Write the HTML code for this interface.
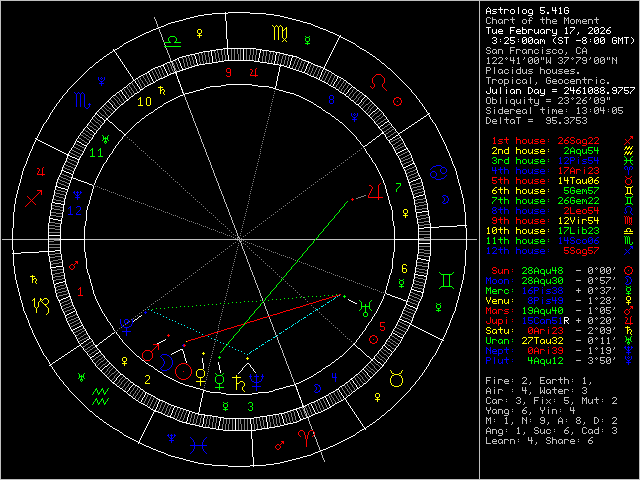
<!DOCTYPE html>
<html><head><meta charset="utf-8"><title>Astrolog 5.41G</title>
<style>
html,body{margin:0;padding:0;background:#000;overflow:hidden}
svg{display:block}
path{fill:none;stroke-width:1;shape-rendering:crispEdges}
</style></head><body>
<svg width="640" height="480" viewBox="0 0 640 480">
<rect width="640" height="480" fill="#000"/>
<path stroke="#bfbfbf" d="M0 .5m0 0h640m-640 1h1m478 0h1m159 0h1m-640 1h1m478 0h1m159 0h1m-640 1h1m478 0h1m159 0h1m-640 1h1m478 0h1m159 0h1m-640 1h1m478 0h1m159 0h1m-640 1h1m478 0h1m159 0h1m-640 1h1m478 0h1m159 0h1m-640 1h1m478 0h1m159 0h1m-640 1h1m478 0h1m159 0h1m-640 1h1m478 0h1m159 0h1m-640 1h1m478 0h1m159 0h1m-640 1h1m478 0h1m159 0h1m-640 1h1m478 0h1m159 0h1m-640 1h1m478 0h1m159 0h1m-640 1h1m478 0h1m159 0h1m-640 1h1m478 0h1m159 0h1m-640 1h1m153 0h1m324 0h1m7 0h3m2 0h1m19 0h1m17 0h2m10 0h1m3 0h1m17 0h1m3 0h1m27 0h1m42 0h1m-640 1h1m153 0h1m324 0h1m6 0h1m3 0h1m1 0h1m19 0h1m16 0h1m2 0h1m9 0h1m3 0h1m17 0h2m1 0h2m27 0h1m42 0h1m-640 1h1m154 0h1m323 0h1m6 0h1m5 0h4m3 0h3m2 0h4m2 0h5m8 0h3m3 0h1m10 0h5m1 0h4m3 0h3m8 0h1m1 0h1m1 0h1m2 0h3m2 0h2m1 0h1m3 0h3m2 0h4m2 0h5m40 0h1m-640 1h1m154 0h1m323 0h1m6 0h1m5 0h1m3 0h1m1 0h1m3 0h1m1 0h1m3 0h1m3 0h1m9 0h1m3 0h1m1 0h4m10 0h1m3 0h1m3 0h1m1 0h1m3 0h1m7 0h1m1 0h1m1 0h1m1 0h1m3 0h1m1 0h1m1 0h1m1 0h1m1 0h1m3 0h1m1 0h1m3 0h1m3 0h1m42 0h1m-640 1h1m155 0h1m322 0h1m6 0h1m5 0h1m3 0h1m1 0h1m3 0h1m1 0h1m7 0h1m9 0h1m3 0h1m2 0h1m12 0h1m3 0h1m3 0h1m1 0h5m7 0h1m3 0h1m1 0h1m3 0h1m1 0h1m1 0h1m1 0h1m1 0h5m1 0h1m3 0h1m3 0h1m42 0h1m-640 1h1m155 0h1m322 0h1m6 0h1m3 0h1m1 0h1m3 0h1m1 0h1m2 0h2m1 0h1m7 0h1m9 0h1m3 0h1m2 0h1m12 0h1m3 0h1m3 0h1m1 0h1m11 0h1m3 0h1m1 0h1m3 0h1m1 0h1m3 0h1m1 0h1m5 0h1m3 0h1m3 0h1m42 0h1m-640 1h1m155 0h1m322 0h1m7 0h3m2 0h1m3 0h1m2 0h2m1 0h1m1 0h1m8 0h1m9 0h3m3 0h1m13 0h1m2 0h1m3 0h1m2 0h4m7 0h1m3 0h1m2 0h3m2 0h1m3 0h1m2 0h4m1 0h1m3 0h1m4 0h1m41 0h1m-640 1h1m156 0h1m321 0h1m159 0h1m-640 1h1m156 0h1m321 0h1m159 0h1m-640 1h1m156 0h1m321 0h1m159 0h1m-640 1h1m478 0h1m159 0h1m-640 1h1m157 0h1m320 0h1m159 0h1m-640 1h1m158 0h1m319 0h1m159 0h1m-640 1h1m158 0h1m319 0h1m159 0h1m-640 1h1m158 0h1m319 0h1m159 0h1m-640 1h1m159 0h1m318 0h1m159 0h1m-640 1h1m159 0h1m318 0h1m159 0h1m-640 1h1m160 0h1m317 0h1m159 0h1m-640 1h1m160 0h1m317 0h1m159 0h1m-640 1h1m160 0h1m317 0h1m159 0h1m-640 1h1m161 0h1m316 0h1m159 0h1m-640 1h1m161 0h1m316 0h1m159 0h1m-640 1h1m161 0h1m316 0h1m159 0h1m-640 1h1m162 0h1m315 0h1m159 0h1m-640 1h1m162 0h1m315 0h1m159 0h1m-640 1h1m478 0h1m159 0h1m-640 1h1m163 0h1m314 0h1m159 0h1m-640 1h1m163 0h1m314 0h1m159 0h1m-640 1h1m164 0h1m313 0h1m159 0h1m-640 1h1m478 0h1m159 0h1m-640 1h1m164 0h1m313 0h1m7 0h3m20 0h5m27 0h1m34 0h3m4 0h1m54 0h1m-640 1h1m165 0h1m312 0h1m6 0h1m3 0h1m19 0h1m65 0h1m3 0h1m2 0h1m1 0h1m53 0h1m-640 1h1m165 0h1m312 0h1m6 0h1m6 0h3m2 0h4m8 0h1m5 0h4m3 0h3m2 0h4m3 0h3m4 0h1m4 0h4m2 0h3m3 0h3m14 0h1m5 0h1m3 0h1m52 0h1m-640 1h1m166 0h1m311 0h1m7 0h3m2 0h1m3 0h1m1 0h1m3 0h1m7 0h4m2 0h1m3 0h1m1 0h1m3 0h1m1 0h1m3 0h1m1 0h1m3 0h1m3 0h1m3 0h1m5 0h1m3 0h1m1 0h1m3 0h1m13 0h1m5 0h1m3 0h1m52 0h1m-640 1h1m166 0h1m311 0h1m10 0h1m1 0h1m3 0h1m1 0h1m3 0h1m7 0h1m5 0h1m5 0h1m3 0h1m1 0h1m3 0h1m1 0h1m7 0h1m4 0h3m2 0h1m5 0h1m3 0h1m13 0h1m5 0h5m52 0h1m-640 1h1m166 0h1m311 0h1m6 0h1m3 0h1m1 0h1m2 0h2m1 0h1m3 0h1m7 0h1m5 0h1m5 0h1m2 0h2m1 0h1m3 0h1m1 0h1m3 0h1m3 0h1m7 0h1m1 0h1m3 0h1m1 0h1m3 0h1m3 0h1m9 0h1m3 0h1m1 0h1m3 0h1m52 0h1m-640 1h1m167 0h1m310 0h1m7 0h3m3 0h2m1 0h1m1 0h1m3 0h1m7 0h1m5 0h1m6 0h2m1 0h1m1 0h1m3 0h1m2 0h3m4 0h1m3 0h4m3 0h3m3 0h3m4 0h1m10 0h3m2 0h1m3 0h1m52 0h1m-640 1h1m167 0h1m310 0h1m85 0h1m73 0h1m-640 1h1m168 0h1m309 0h1m159 0h1m-640 1h1m168 0h1m309 0h1m159 0h1m-640 1h1m168 0h1m309 0h1m8 0h1m4 0h3m3 0h3m4 0h1m3 0h1m2 0h1m4 0h1m5 0h1m4 0h3m3 0h3m3 0h1m1 0h1m2 0h1m3 0h1m8 0h3m2 0h5m3 0h1m3 0h5m2 0h3m4 0h1m4 0h3m3 0h3m3 0h1m1 0h1m2 0h1m3 0h1m22 0h1m-640 1h1m169 0h1m308 0h1m7 0h2m3 0h1m3 0h1m1 0h1m3 0h1m2 0h1m1 0h1m2 0h1m2 0h1m3 0h2m5 0h1m3 0h1m3 0h1m1 0h1m3 0h1m2 0h1m1 0h1m2 0h1m3 0h1m7 0h1m3 0h1m5 0h1m2 0h1m1 0h1m6 0h1m1 0h1m3 0h1m3 0h1m3 0h1m3 0h1m1 0h1m3 0h1m2 0h1m1 0h1m2 0h2m2 0h1m22 0h1m-640 1h1m169 0h1m308 0h1m8 0h1m7 0h1m5 0h1m3 0h1m3 0h1m2 0h1m4 0h1m4 0h1m4 0h1m2 0h2m1 0h1m2 0h2m2 0h1m1 0h1m2 0h1m3 0h1m11 0h1m4 0h1m4 0h1m6 0h1m2 0h1m3 0h1m2 0h1m4 0h1m2 0h2m1 0h1m2 0h2m2 0h1m1 0h1m2 0h1m1 0h1m1 0h1m22 0h1m-640 1h1m169 0h1m308 0h1m8 0h1m6 0h1m5 0h1m8 0h5m3 0h1m9 0h1m1 0h1m1 0h1m1 0h1m1 0h1m1 0h1m7 0h1m1 0h1m1 0h1m9 0h2m4 0h1m11 0h1m4 0h4m7 0h1m1 0h1m1 0h1m1 0h1m1 0h1m1 0h1m7 0h1m2 0h2m22 0h1m-640 1h1m478 0h1m8 0h1m5 0h1m5 0h1m12 0h1m4 0h1m9 0h2m2 0h1m1 0h2m2 0h1m7 0h1m1 0h1m1 0h1m11 0h1m2 0h1m11 0h1m8 0h1m7 0h2m2 0h1m1 0h2m2 0h1m7 0h1m3 0h1m22 0h1m-640 1h1m170 0h1m307 0h1m8 0h1m4 0h1m5 0h1m13 0h1m4 0h1m9 0h1m3 0h1m1 0h1m3 0h1m7 0h2m1 0h2m7 0h1m3 0h1m1 0h1m11 0h1m5 0h1m3 0h1m7 0h1m3 0h1m1 0h1m3 0h1m7 0h1m3 0h1m22 0h1m-640 1h1m171 0h1m306 0h1m7 0h3m2 0h5m1 0h5m10 0h1m3 0h3m9 0h3m3 0h3m8 0h1m3 0h1m8 0h3m2 0h1m11 0h1m6 0h3m9 0h3m3 0h3m8 0h1m3 0h1m22 0h1m-640 1h1m171 0h1m306 0h1m159 0h1m-640 1h1m171 0h1m306 0h1m159 0h1m-640 1h1m172 0h1m305 0h1m159 0h1m-640 1h1m172 0h1m305 0h1m6 0h4m4 0h1m17 0h1m7 0h1m19 0h1m98 0h1m-640 1h1m173 0h1m304 0h1m6 0h1m3 0h1m3 0h1m25 0h1m19 0h1m98 0h1m-640 1h1m173 0h1m304 0h1m6 0h1m3 0h1m3 0h1m4 0h3m3 0h3m4 0h1m4 0h4m1 0h1m3 0h1m2 0h4m7 0h4m3 0h3m2 0h1m3 0h1m2 0h4m2 0h3m3 0h4m64 0h1m-640 1h1m173 0h1m304 0h1m6 0h4m4 0h1m3 0h1m3 0h1m1 0h1m3 0h1m3 0h1m3 0h1m3 0h1m1 0h1m3 0h1m1 0h1m11 0h1m3 0h1m1 0h1m3 0h1m1 0h1m3 0h1m1 0h1m5 0h1m3 0h1m1 0h1m68 0h1m-640 1h1m478 0h1m6 0h1m7 0h1m3 0h1m3 0h1m1 0h1m7 0h1m3 0h1m3 0h1m1 0h1m3 0h1m2 0h3m8 0h1m3 0h1m1 0h1m3 0h1m1 0h1m3 0h1m2 0h3m2 0h5m2 0h3m65 0h1m-640 1h1m478 0h1m6 0h1m7 0h1m3 0h1m2 0h2m1 0h1m3 0h1m3 0h1m3 0h1m3 0h1m1 0h1m2 0h2m5 0h1m7 0h1m3 0h1m1 0h1m3 0h1m1 0h1m2 0h2m5 0h1m1 0h1m9 0h1m2 0h2m60 0h1m-640 1h1m174 0h1m303 0h1m6 0h1m7 0h1m4 0h2m1 0h1m2 0h3m4 0h1m4 0h4m2 0h2m1 0h1m1 0h4m8 0h1m3 0h1m2 0h3m3 0h2m1 0h1m1 0h4m3 0h4m1 0h4m3 0h2m60 0h1m-640 1h1m478 0h1m159 0h1m-640 1h1m478 0h1m159 0h1m-640 1h1m478 0h1m159 0h1m-640 1h1m478 0h1m6 0h5m21 0h1m17 0h1m16 0h3m34 0h1m11 0h1m42 0h1m-640 1h1m478 0h1m8 0h1m41 0h1m15 0h1m3 0h1m33 0h1m54 0h1m-640 1h1m478 0h1m8 0h1m3 0h4m3 0h3m2 0h4m4 0h1m4 0h3m3 0h3m4 0h1m15 0h1m6 0h3m3 0h3m3 0h3m3 0h3m2 0h4m2 0h5m1 0h4m4 0h1m4 0h3m35 0h1m-640 1h1m478 0h1m8 0h1m3 0h1m3 0h1m1 0h1m3 0h1m1 0h1m3 0h1m3 0h1m3 0h1m3 0h1m1 0h1m3 0h1m3 0h1m15 0h1m1 0h3m1 0h1m3 0h1m1 0h1m3 0h1m1 0h1m3 0h1m1 0h1m3 0h1m1 0h1m3 0h1m3 0h1m3 0h1m3 0h1m3 0h1m3 0h1m3 0h1m34 0h1m-640 1h1m178 0h1m299 0h1m8 0h1m3 0h1m5 0h1m3 0h1m1 0h1m3 0h1m3 0h1m3 0h1m5 0h1m3 0h1m3 0h1m15 0h1m3 0h1m1 0h5m1 0h1m3 0h1m1 0h1m5 0h5m1 0h1m3 0h1m3 0h1m3 0h1m7 0h1m3 0h1m38 0h1m-640 1h1m478 0h1m8 0h1m3 0h1m5 0h1m3 0h1m1 0h1m3 0h1m3 0h1m3 0h1m3 0h1m1 0h1m2 0h2m3 0h1m5 0h1m9 0h1m3 0h1m1 0h1m5 0h1m3 0h1m1 0h1m3 0h1m1 0h1m5 0h1m3 0h1m3 0h1m3 0h1m7 0h1m3 0h1m3 0h1m2 0h2m30 0h1m-640 1h1m478 0h1m8 0h1m3 0h1m6 0h3m2 0h4m4 0h1m4 0h3m3 0h2m1 0h1m3 0h1m5 0h1m10 0h3m3 0h4m2 0h3m3 0h3m3 0h4m1 0h1m3 0h1m4 0h1m2 0h1m7 0h1m4 0h3m3 0h2m30 0h1m-640 1h1m478 0h1m24 0h1m30 0h1m103 0h1m-640 1h1m478 0h1m24 0h1m134 0h1m-640 1h1m478 0h1m159 0h1m-640 1h1m478 0h1m159 0h1m-640 1h1m478 0h1m159 0h1m-640 1h1m181 0h1m296 0h1m159 0h1m-640 1h1m478 0h1m159 0h1m-640 1h1m478 0h1m159 0h1m-640 1h1m182 0h1m295 0h1m159 0h1m-640 1h1m478 0h1m159 0h1m-640 1h1m478 0h1m159 0h1m-640 1h1m183 0h1m294 0h1m159 0h1m-640 1h1m183 0h1m294 0h1m159 0h1m-640 1h1m184 0h1m293 0h1m7 0h3m2 0h1m7 0h1m5 0h1m17 0h1m5 0h1m28 0h3m3 0h3m4 0h1m4 0h3m5 0h2m3 0h1m4 0h3m3 0h3m3 0h1m1 0h1m29 0h1m-640 1h1m184 0h1m293 0h1m6 0h1m3 0h1m1 0h1m7 0h1m29 0h1m27 0h1m3 0h1m1 0h1m3 0h1m2 0h1m1 0h1m2 0h1m3 0h1m3 0h1m5 0h1m3 0h1m3 0h1m1 0h1m3 0h1m2 0h1m1 0h1m29 0h1m-640 1h1m184 0h1m293 0h1m6 0h1m3 0h1m1 0h4m4 0h1m5 0h1m4 0h3m2 0h1m3 0h1m3 0h1m3 0h5m1 0h1m3 0h1m7 0h5m11 0h1m5 0h1m3 0h1m7 0h1m2 0h1m5 0h1m4 0h1m2 0h2m1 0h1m3 0h1m2 0h1m1 0h1m29 0h1m-640 1h1m185 0h1m292 0h1m6 0h1m3 0h1m1 0h1m3 0h1m3 0h1m5 0h1m3 0h1m3 0h1m1 0h1m3 0h1m3 0h1m5 0h1m3 0h1m3 0h1m22 0h1m4 0h2m11 0h1m2 0h4m8 0h1m1 0h1m1 0h1m2 0h4m34 0h1m-640 1h1m185 0h1m292 0h1m6 0h1m3 0h1m1 0h1m3 0h1m3 0h1m5 0h1m3 0h1m3 0h1m1 0h1m3 0h1m3 0h1m5 0h1m3 0h1m3 0h1m7 0h5m9 0h1m7 0h1m9 0h1m3 0h1m3 0h1m7 0h2m2 0h1m5 0h1m34 0h1m-640 1h1m186 0h1m291 0h1m6 0h1m3 0h1m1 0h1m3 0h1m3 0h1m5 0h1m3 0h1m3 0h1m1 0h1m2 0h2m3 0h1m5 0h1m3 0h1m3 0h1m20 0h1m4 0h1m3 0h1m8 0h1m4 0h1m3 0h1m7 0h1m3 0h1m1 0h1m3 0h1m34 0h1m-640 1h1m186 0h1m291 0h1m7 0h3m2 0h4m4 0h1m5 0h1m4 0h4m2 0h2m1 0h1m3 0h1m6 0h1m3 0h4m19 0h5m2 0h3m8 0h5m2 0h3m9 0h3m3 0h3m35 0h1m-640 1h1m186 0h1m291 0h1m34 0h1m23 0h1m100 0h1m-640 1h1m187 0h1m290 0h1m34 0h1m19 0h4m101 0h1m-640 1h1m187 0h1m290 0h1m159 0h1m-640 1h1m187 0h1m290 0h1m7 0h3m4 0h1m7 0h1m27 0h1m11 0h1m5 0h1m29 0h1m4 0h3m9 0h3m2 0h1m2 0h1m9 0h3m2 0h5m16 0h1m-640 1h1m188 0h1m289 0h1m6 0h1m3 0h1m11 0h1m27 0h1m11 0h1m34 0h2m3 0h1m3 0h1m7 0h1m3 0h1m1 0h1m2 0h1m8 0h1m3 0h1m1 0h1m20 0h1m-640 1h1m188 0h1m289 0h1m6 0h1m7 0h1m4 0h4m2 0h3m2 0h4m3 0h3m3 0h3m4 0h1m9 0h5m3 0h1m3 0h2m1 0h1m3 0h3m4 0h1m11 0h1m7 0h1m3 0h1m3 0h1m2 0h2m1 0h1m2 0h1m4 0h1m3 0h1m2 0h2m1 0h1m20 0h1m-640 1h1m189 0h1m288 0h1m7 0h3m4 0h1m3 0h1m3 0h1m1 0h1m3 0h1m1 0h1m3 0h1m1 0h1m3 0h1m1 0h1m3 0h1m3 0h1m11 0h1m5 0h1m3 0h1m1 0h1m1 0h1m1 0h1m3 0h1m15 0h1m5 0h2m8 0h1m1 0h1m1 0h1m1 0h5m7 0h1m1 0h1m1 0h1m1 0h4m17 0h1m-640 1h1m189 0h1m288 0h1m10 0h1m3 0h1m3 0h1m3 0h1m1 0h5m1 0h1m5 0h5m1 0h1m3 0h1m3 0h1m11 0h1m5 0h1m3 0h1m1 0h1m1 0h1m1 0h5m3 0h1m11 0h1m7 0h1m3 0h1m3 0h2m2 0h1m4 0h1m4 0h1m3 0h2m2 0h1m5 0h1m16 0h1m-640 1h1m189 0h1m288 0h1m6 0h1m3 0h1m3 0h1m3 0h1m3 0h1m1 0h1m5 0h1m5 0h1m5 0h1m2 0h2m3 0h1m11 0h1m5 0h1m3 0h1m3 0h1m1 0h1m19 0h1m3 0h1m3 0h1m7 0h1m3 0h1m4 0h1m8 0h1m3 0h1m1 0h1m3 0h1m16 0h1m-640 1h1m190 0h1m287 0h1m7 0h3m4 0h1m4 0h4m2 0h4m1 0h1m6 0h4m2 0h2m1 0h1m3 0h1m12 0h1m4 0h1m3 0h1m3 0h1m2 0h4m14 0h3m3 0h3m9 0h3m5 0h1m9 0h3m3 0h3m17 0h1m-640 1h1m190 0h1m287 0h1m159 0h1m-640 1h1m191 0h1m286 0h1m159 0h1m-640 1h1m191 0h1m286 0h1m159 0h1m-640 1h1m191 0h1m286 0h1m6 0h3m11 0h1m5 0h1m9 0h5m26 0h3m2 0h5m8 0h3m2 0h5m1 0h5m2 0h3m53 0h1m-640 1h1m192 0h1m285 0h1m6 0h1m2 0h1m10 0h1m5 0h1m11 0h1m27 0h1m3 0h1m1 0h1m11 0h1m3 0h1m5 0h1m1 0h1m5 0h1m3 0h1m52 0h1m-640 1h1m192 0h1m285 0h1m6 0h1m3 0h1m2 0h3m4 0h1m3 0h5m2 0h3m4 0h1m9 0h5m13 0h1m3 0h1m1 0h1m15 0h1m4 0h1m2 0h1m9 0h1m52 0h1m-640 1h1m192 0h1m285 0h1m6 0h1m3 0h1m1 0h1m3 0h1m3 0h1m5 0h1m3 0h1m3 0h1m3 0h1m28 0h4m1 0h4m10 0h2m4 0h1m3 0h4m4 0h2m53 0h1m-640 1h1m193 0h1m284 0h1m6 0h1m3 0h1m1 0h5m3 0h1m5 0h1m3 0h1m3 0h1m3 0h1m9 0h5m17 0h1m5 0h1m11 0h1m2 0h1m8 0h1m5 0h1m52 0h1m-640 1h1m193 0h1m284 0h1m6 0h1m2 0h1m2 0h1m7 0h1m5 0h1m3 0h1m2 0h2m3 0h1m27 0h1m3 0h1m1 0h1m3 0h1m2 0h2m3 0h1m3 0h1m1 0h1m5 0h1m3 0h1m1 0h1m3 0h1m52 0h1m-640 1h1m194 0h1m283 0h1m6 0h3m4 0h4m3 0h1m6 0h1m3 0h2m1 0h1m3 0h1m28 0h3m3 0h3m3 0h2m4 0h3m2 0h1m6 0h3m3 0h3m53 0h1m-640 1h1m194 0h1m283 0h1m159 0h1m-640 1h1m194 0h1m283 0h1m159 0h1m-640 1h1m195 0h1m282 0h1m159 0h1m-640 1h1m195 0h1m282 0h1m159 0h1m-640 1h1m196 0h1m281 0h1m159 0h1m-640 1h1m196 0h1m281 0h1m159 0h1m-640 1h1m196 0h1m281 0h1m159 0h1m-640 1h1m197 0h1m280 0h1m159 0h1m-640 1h1m197 0h1m280 0h1m159 0h1m-640 1h1m197 0h1m280 0h1m159 0h1m-640 1h1m198 0h1m279 0h1m159 0h1m-640 1h1m198 0h1m279 0h1m159 0h1m-640 1h1m199 0h1m278 0h1m159 0h1m-640 1h1m199 0h1m278 0h1m159 0h1m-640 1h1m199 0h1m278 0h1m159 0h1m-640 1h1m200 0h1m277 0h1m159 0h1m-640 1h1m200 0h1m277 0h1m159 0h1m-640 1h1m200 0h1m277 0h1m159 0h1m-640 1h1m201 0h1m276 0h1m159 0h1m-640 1h1m201 0h1m276 0h1m159 0h1m-640 1h1m202 0h1m275 0h1m159 0h1m-640 1h1m202 0h1m275 0h1m159 0h1m-640 1h1m202 0h1m275 0h1m159 0h1m-640 1h1m203 0h1m274 0h1m159 0h1m-640 1h1m203 0h1m274 0h1m159 0h1m-640 1h1m204 0h1m273 0h1m159 0h1m-640 1h1m204 0h1m273 0h1m159 0h1m-640 1h1m204 0h1m273 0h1m159 0h1m-640 1h1m205 0h1m272 0h1m159 0h1m-640 1h1m205 0h1m272 0h1m159 0h1m-640 1h1m205 0h1m272 0h1m159 0h1m-640 1h1m206 0h1m271 0h1m159 0h1m-640 1h1m206 0h1m271 0h1m159 0h1m-640 1h1m207 0h1m270 0h1m159 0h1m-640 1h1m207 0h1m270 0h1m159 0h1m-640 1h1m207 0h1m270 0h1m159 0h1m-640 1h1m208 0h1m269 0h1m159 0h1m-640 1h1m208 0h1m269 0h1m159 0h1m-640 1h1m209 0h1m268 0h1m159 0h1m-640 1h1m209 0h1m268 0h1m159 0h1m-640 1h1m209 0h1m268 0h1m159 0h1m-640 1h1m210 0h1m267 0h1m159 0h1m-640 1h1m210 0h1m267 0h1m159 0h1m-640 1h1m210 0h1m267 0h1m159 0h1m-640 1h1m211 0h1m266 0h1m159 0h1m-640 1h1m211 0h1m266 0h1m159 0h1m-640 1h1m212 0h1m265 0h1m159 0h1m-640 1h1m212 0h1m265 0h1m159 0h1m-640 1h1m212 0h1m265 0h1m159 0h1m-640 1h1m213 0h1m264 0h1m159 0h1m-640 1h1m213 0h1m264 0h1m159 0h1m-640 1h1m213 0h1m264 0h1m159 0h1m-640 1h1m214 0h1m263 0h1m159 0h1m-640 1h1m214 0h1m263 0h1m159 0h1m-640 1h1m215 0h1m262 0h1m159 0h1m-640 1h1m215 0h1m262 0h1m159 0h1m-640 1h1m215 0h1m262 0h1m159 0h1m-640 1h1m216 0h1m261 0h1m159 0h1m-640 1h1m216 0h1m261 0h1m159 0h1m-640 1h1m217 0h1m260 0h1m159 0h1m-640 1h1m217 0h1m260 0h1m159 0h1m-640 1h1m217 0h1m260 0h1m159 0h1m-640 1h1m218 0h1m259 0h1m159 0h1m-640 1h1m218 0h1m259 0h1m159 0h1m-640 1h1m218 0h1m259 0h1m159 0h1m-640 1h1m219 0h1m258 0h1m159 0h1m-640 1h1m219 0h1m258 0h1m159 0h1m-640 1h1m220 0h1m257 0h1m159 0h1m-640 1h1m220 0h1m257 0h1m159 0h1m-640 1h1m220 0h1m257 0h1m159 0h1m-640 1h1m221 0h1m256 0h1m159 0h1m-640 1h1m221 0h1m256 0h1m159 0h1m-640 1h1m222 0h1m255 0h1m159 0h1m-640 1h1m222 0h1m255 0h1m159 0h1m-640 1h1m222 0h1m255 0h1m159 0h1m-640 1h1m223 0h1m254 0h1m159 0h1m-640 1h1m223 0h1m254 0h1m159 0h1m-640 1h1m223 0h1m254 0h1m159 0h1m-640 1h1m224 0h1m253 0h1m159 0h1m-640 1h1m224 0h1m253 0h1m159 0h1m-640 1h1m225 0h1m252 0h1m159 0h1m-640 1h1m225 0h1m252 0h1m159 0h1m-640 1h1m225 0h1m252 0h1m159 0h1m-640 1h1m226 0h1m251 0h1m159 0h1m-640 1h1m226 0h1m251 0h1m159 0h1m-640 1h1m227 0h1m250 0h1m159 0h1m-640 1h1m227 0h1m250 0h1m159 0h1m-640 1h1m227 0h1m250 0h1m159 0h1m-640 1h1m228 0h1m249 0h1m159 0h1m-640 1h1m228 0h1m249 0h1m159 0h1m-640 1h1m228 0h1m249 0h1m159 0h1m-640 1h1m229 0h1m248 0h1m159 0h1m-640 1h1m229 0h1m248 0h1m159 0h1m-640 1h1m230 0h1m247 0h1m159 0h1m-640 1h1m230 0h1m247 0h1m159 0h1m-640 1h1m230 0h1m247 0h1m159 0h1m-640 1h1m231 0h1m246 0h1m159 0h1m-640 1h1m231 0h1m246 0h1m159 0h1m-640 1h1m231 0h1m246 0h1m159 0h1m-640 1h1m232 0h1m245 0h1m159 0h1m-640 1h1m232 0h1m245 0h1m159 0h1m-640 1h1m233 0h1m244 0h1m159 0h1m-640 1h1m233 0h1m244 0h1m159 0h1m-640 1h1m233 0h1m244 0h1m159 0h1m-640 1h1m234 0h1m243 0h1m159 0h1m-640 1h1m234 0h1m243 0h1m159 0h1m-640 1h1m235 0h1m242 0h1m159 0h1m-640 1h1m235 0h1m242 0h1m159 0h1m-640 1h1m235 0h1m242 0h1m159 0h1m-640 1h1m236 0h1m241 0h1m159 0h1m-640 1h1m236 0h1m241 0h1m159 0h1m-640 1h1m236 0h1m241 0h1m159 0h1m-640 1h1m237 0h1m240 0h1m159 0h1m-640 1h1m237 0h1m240 0h1m159 0h1m-640 1h1m238 0h1m239 0h1m159 0h1m-640 1h1m1 0h10m1 0h35m1 0h10m26 0h154m1 0h75m1 0h78m26 0h10m1 0h35m1 0h10m2 0h1m159 0h1m-640 1h1m238 0h1m239 0h1m159 0h1m-640 1h1m239 0h1m238 0h1m159 0h1m-640 1h1m239 0h1m238 0h1m159 0h1m-640 1h1m240 0h1m237 0h1m159 0h1m-640 1h1m240 0h1m237 0h1m159 0h1m-640 1h1m240 0h1m237 0h1m159 0h1m-640 1h1m241 0h1m236 0h1m159 0h1m-640 1h1m241 0h1m236 0h1m159 0h1m-640 1h1m241 0h1m236 0h1m159 0h1m-640 1h1m242 0h1m235 0h1m159 0h1m-640 1h1m242 0h1m235 0h1m159 0h1m-640 1h1m243 0h1m234 0h1m159 0h1m-640 1h1m243 0h1m234 0h1m159 0h1m-640 1h1m243 0h1m234 0h1m159 0h1m-640 1h1m244 0h1m233 0h1m159 0h1m-640 1h1m244 0h1m233 0h1m159 0h1m-640 1h1m245 0h1m232 0h1m159 0h1m-640 1h1m245 0h1m232 0h1m159 0h1m-640 1h1m245 0h1m232 0h1m159 0h1m-640 1h1m246 0h1m231 0h1m159 0h1m-640 1h1m246 0h1m231 0h1m159 0h1m-640 1h1m246 0h1m231 0h1m159 0h1m-640 1h1m247 0h1m230 0h1m159 0h1m-640 1h1m247 0h1m230 0h1m159 0h1m-640 1h1m248 0h1m229 0h1m159 0h1m-640 1h1m248 0h1m229 0h1m159 0h1m-640 1h1m248 0h1m229 0h1m159 0h1m-640 1h1m249 0h1m228 0h1m109 0h3m4 0h1m4 0h3m3 0h3m4 0h1m24 0h1m-640 1h1m249 0h1m228 0h1m108 0h1m3 0h1m2 0h1m1 0h1m2 0h1m3 0h1m1 0h1m3 0h1m3 0h1m24 0h1m-640 1h1m249 0h1m228 0h1m108 0h1m2 0h2m3 0h1m3 0h1m2 0h2m1 0h1m2 0h2m2 0h1m25 0h1m-640 1h1m250 0h1m227 0h1m96 0h5m7 0h1m1 0h1m1 0h1m7 0h1m1 0h1m1 0h1m1 0h1m1 0h1m1 0h1m28 0h1m-640 1h1m250 0h1m227 0h1m108 0h2m2 0h1m7 0h2m2 0h1m1 0h2m2 0h1m28 0h1m-640 1h1m251 0h1m226 0h1m108 0h1m3 0h1m7 0h1m3 0h1m1 0h1m3 0h1m28 0h1m-640 1h1m251 0h1m226 0h1m109 0h3m9 0h3m3 0h3m29 0h1m-640 1h1m251 0h1m226 0h1m159 0h1m-640 1h1m252 0h1m225 0h1m159 0h1m-640 1h1m252 0h1m225 0h1m159 0h1m-640 1h1m253 0h1m224 0h1m109 0h3m4 0h1m3 0h5m1 0h5m3 0h1m24 0h1m-640 1h1m253 0h1m224 0h1m108 0h1m3 0h1m2 0h1m1 0h1m2 0h1m9 0h1m3 0h1m24 0h1m-640 1h1m253 0h1m224 0h1m108 0h1m2 0h2m3 0h1m3 0h1m8 0h1m3 0h1m25 0h1m-640 1h1m254 0h1m223 0h1m96 0h5m7 0h1m1 0h1m1 0h1m7 0h4m4 0h1m30 0h1m-640 1h1m254 0h1m223 0h1m108 0h2m2 0h1m11 0h1m2 0h1m31 0h1m-640 1h1m254 0h1m223 0h1m108 0h1m3 0h1m7 0h1m3 0h1m1 0h1m32 0h1m-640 1h1m255 0h1m222 0h1m109 0h3m9 0h3m2 0h1m32 0h1m-640 1h1m255 0h1m222 0h1m159 0h1m-640 1h1m256 0h1m221 0h1m159 0h1m-640 1h1m256 0h1m221 0h1m159 0h1m-640 1h1m256 0h1m221 0h1m109 0h3m4 0h1m4 0h3m2 0h5m3 0h1m24 0h1m-640 1h1m257 0h1m220 0h1m98 0h1m9 0h1m3 0h1m2 0h1m1 0h1m2 0h1m3 0h1m5 0h1m3 0h1m24 0h1m-640 1h1m257 0h1m220 0h1m98 0h1m9 0h1m2 0h2m3 0h1m7 0h1m4 0h1m3 0h1m25 0h1m-640 1h1m258 0h1m219 0h1m96 0h5m7 0h1m1 0h1m1 0h1m9 0h2m4 0h1m30 0h1m-640 1h1m258 0h1m219 0h1m98 0h1m9 0h2m2 0h1m11 0h1m2 0h1m31 0h1m-640 1h1m258 0h1m219 0h1m98 0h1m9 0h1m3 0h1m7 0h1m3 0h1m1 0h1m32 0h1m-640 1h1m259 0h1m218 0h1m109 0h3m9 0h3m2 0h1m32 0h1m-640 1h1m259 0h1m218 0h1m159 0h1m-640 1h1m259 0h1m218 0h1m159 0h1m-640 1h1m260 0h1m217 0h1m159 0h1m-640 1h1m260 0h1m217 0h1m110 0h1m5 0h1m4 0h3m3 0h3m4 0h1m24 0h1m-640 1h1m261 0h1m216 0h1m109 0h2m4 0h1m1 0h1m2 0h1m3 0h1m1 0h1m3 0h1m3 0h1m24 0h1m-640 1h1m261 0h1m216 0h1m110 0h1m5 0h1m7 0h1m1 0h1m2 0h1m3 0h1m25 0h1m-640 1h1m261 0h1m216 0h1m96 0h5m9 0h1m12 0h1m3 0h3m29 0h1m-640 1h1m478 0h1m110 0h1m11 0h1m3 0h1m3 0h1m28 0h1m-640 1h1m262 0h1m215 0h1m110 0h1m10 0h1m4 0h1m3 0h1m28 0h1m-640 1h1m263 0h1m214 0h1m109 0h3m8 0h5m2 0h3m29 0h1m-640 1h1m263 0h1m214 0h1m159 0h1m-640 1h1m263 0h1m214 0h1m159 0h1m-640 1h1m264 0h1m213 0h1m159 0h1m-640 1h1m264 0h1m213 0h1m110 0h1m5 0h1m4 0h3m2 0h5m3 0h1m24 0h1m-640 1h1m264 0h1m213 0h1m109 0h2m4 0h1m1 0h1m2 0h1m3 0h1m1 0h1m7 0h1m24 0h1m-640 1h1m265 0h1m212 0h1m110 0h1m5 0h1m3 0h1m2 0h2m1 0h1m6 0h1m25 0h1m-640 1h1m265 0h1m212 0h1m96 0h5m9 0h1m9 0h1m1 0h1m1 0h1m1 0h4m29 0h1m-640 1h1m266 0h1m211 0h1m110 0h1m9 0h2m2 0h1m5 0h1m28 0h1m-640 1h1m266 0h1m211 0h1m110 0h1m9 0h1m3 0h1m1 0h1m3 0h1m28 0h1m-640 1h1m266 0h1m211 0h1m109 0h3m9 0h3m3 0h3m29 0h1m-640 1h1m267 0h1m210 0h1m159 0h1m-640 1h1m267 0h1m210 0h1m159 0h1m-640 1h1m478 0h1m159 0h1m-640 1h1m268 0h1m209 0h1m109 0h3m4 0h1m4 0h3m3 0h3m4 0h1m24 0h1m-640 1h1m268 0h1m209 0h1m98 0h1m9 0h1m3 0h1m2 0h1m1 0h1m2 0h1m3 0h1m1 0h1m3 0h1m3 0h1m24 0h1m-640 1h1m269 0h1m208 0h1m98 0h1m9 0h1m2 0h2m3 0h1m7 0h1m1 0h1m2 0h2m2 0h1m25 0h1m-640 1h1m269 0h1m208 0h1m96 0h5m7 0h1m1 0h1m1 0h1m10 0h1m2 0h1m1 0h1m1 0h1m28 0h1m-640 1h1m269 0h1m208 0h1m98 0h1m9 0h2m2 0h1m9 0h1m3 0h2m2 0h1m28 0h1m-640 1h1m270 0h1m207 0h1m98 0h1m9 0h1m3 0h1m8 0h1m4 0h1m3 0h1m28 0h1m-640 1h1m270 0h1m207 0h1m109 0h3m8 0h5m2 0h3m29 0h1m-640 1h1m271 0h1m206 0h1m159 0h1m-640 1h1m271 0h1m206 0h1m159 0h1m-640 1h1m271 0h1m206 0h1m159 0h1m-640 1h1m272 0h1m205 0h1m109 0h3m4 0h1m4 0h3m3 0h3m4 0h1m24 0h1m-640 1h1m272 0h1m205 0h1m108 0h1m3 0h1m2 0h1m1 0h1m2 0h1m3 0h1m1 0h1m3 0h1m3 0h1m24 0h1m-640 1h1m272 0h1m205 0h1m112 0h1m3 0h1m3 0h1m2 0h2m1 0h1m3 0h1m2 0h1m25 0h1m-640 1h1m273 0h1m204 0h1m96 0h5m10 0h1m8 0h1m1 0h1m1 0h1m2 0h4m28 0h1m-640 1h1m273 0h1m204 0h1m110 0h1m9 0h2m2 0h1m5 0h1m28 0h1m-640 1h1m274 0h1m203 0h1m109 0h1m10 0h1m3 0h1m1 0h1m3 0h1m28 0h1m-640 1h1m274 0h1m203 0h1m108 0h5m8 0h3m3 0h3m29 0h1m-640 1h1m274 0h1m203 0h1m159 0h1m-640 1h1m275 0h1m202 0h1m159 0h1m-640 1h1m275 0h1m202 0h1m159 0h1m-640 1h1m276 0h1m201 0h1m109 0h3m4 0h1m5 0h1m5 0h1m5 0h1m24 0h1m-640 1h1m276 0h1m201 0h1m108 0h1m3 0h1m2 0h1m1 0h1m3 0h2m4 0h2m5 0h1m24 0h1m-640 1h1m276 0h1m201 0h1m108 0h1m2 0h2m3 0h1m5 0h1m5 0h1m4 0h1m25 0h1m-640 1h1m277 0h1m200 0h1m96 0h5m7 0h1m1 0h1m1 0h1m9 0h1m5 0h1m30 0h1m-640 1h1m277 0h1m200 0h1m108 0h2m2 0h1m9 0h1m5 0h1m30 0h1m-640 1h1m277 0h1m200 0h1m108 0h1m3 0h1m9 0h1m5 0h1m30 0h1m-640 1h1m278 0h1m199 0h1m109 0h3m9 0h3m3 0h3m29 0h1m-640 1h1m278 0h1m199 0h1m159 0h1m-640 1h1m279 0h1m198 0h1m159 0h1m-640 1h1m279 0h1m198 0h1m159 0h1m-640 1h1m279 0h1m198 0h1m110 0h1m5 0h1m5 0h1m4 0h3m4 0h1m24 0h1m-640 1h1m280 0h1m197 0h1m109 0h2m4 0h1m1 0h1m3 0h2m3 0h1m3 0h1m3 0h1m24 0h1m-640 1h1m280 0h1m197 0h1m110 0h1m5 0h1m5 0h1m3 0h1m3 0h1m2 0h1m25 0h1m-640 1h1m281 0h1m196 0h1m96 0h5m9 0h1m11 0h1m4 0h4m28 0h1m-640 1h1m281 0h1m196 0h1m110 0h1m11 0h1m7 0h1m28 0h1m-640 1h1m281 0h1m196 0h1m110 0h1m11 0h1m3 0h1m3 0h1m28 0h1m-640 1h1m282 0h1m195 0h1m109 0h3m9 0h3m3 0h3m29 0h1m-640 1h1m282 0h1m195 0h1m159 0h1m-640 1h1m282 0h1m195 0h1m159 0h1m-640 1h1m283 0h1m194 0h1m159 0h1m-640 1h1m283 0h1m194 0h1m109 0h3m4 0h1m3 0h5m2 0h3m4 0h1m24 0h1m-640 1h1m284 0h1m193 0h1m108 0h1m3 0h1m2 0h1m1 0h1m2 0h1m5 0h1m3 0h1m3 0h1m24 0h1m-640 1h1m284 0h1m193 0h1m112 0h1m3 0h1m3 0h1m5 0h1m2 0h2m2 0h1m25 0h1m-640 1h1m284 0h1m193 0h1m96 0h5m9 0h2m8 0h4m2 0h1m1 0h1m1 0h1m28 0h1m-640 1h1m285 0h1m192 0h1m112 0h1m11 0h1m1 0h2m2 0h1m28 0h1m-640 1h1m285 0h1m192 0h1m108 0h1m3 0h1m7 0h1m3 0h1m1 0h1m3 0h1m28 0h1m-640 1h1m285 0h1m192 0h1m109 0h3m9 0h3m3 0h3m29 0h1m-640 1h1m286 0h1m191 0h1m159 0h1m-640 1h1m286 0h1m191 0h1m159 0h1m-640 1h1m287 0h1m190 0h1m159 0h1m-640 1h1m287 0h1m190 0h1m159 0h1m-640 1h1m287 0h1m190 0h1m159 0h1m-640 1h1m288 0h1m189 0h1m159 0h1m-640 1h1m288 0h1m189 0h1m159 0h1m-640 1h1m289 0h1m188 0h1m159 0h1m-640 1h1m289 0h1m188 0h1m159 0h1m-640 1h1m289 0h1m188 0h1m159 0h1m-640 1h1m290 0h1m187 0h1m159 0h1m-640 1h1m290 0h1m187 0h1m159 0h1m-640 1h1m290 0h1m187 0h1m159 0h1m-640 1h1m291 0h1m186 0h1m6 0h5m3 0h1m28 0h3m14 0h5m15 0h1m3 0h1m19 0h1m54 0h1m-640 1h1m291 0h1m186 0h1m6 0h1m35 0h1m3 0h1m13 0h1m19 0h1m3 0h1m18 0h2m54 0h1m-640 1h1m292 0h1m185 0h1m6 0h1m7 0h1m3 0h4m3 0h3m4 0h1m13 0h1m13 0h1m6 0h3m2 0h4m2 0h5m1 0h4m4 0h1m11 0h1m54 0h1m-640 1h1m292 0h1m185 0h1m6 0h4m4 0h1m3 0h1m3 0h1m1 0h1m3 0h1m16 0h1m14 0h4m2 0h1m3 0h1m1 0h1m3 0h1m3 0h1m3 0h1m3 0h1m15 0h1m54 0h1m-640 1h1m292 0h1m185 0h1m6 0h1m7 0h1m3 0h1m5 0h5m3 0h1m11 0h1m15 0h1m5 0h1m3 0h1m1 0h1m7 0h1m3 0h1m3 0h1m3 0h1m11 0h1m54 0h1m-640 1h1m293 0h1m184 0h1m6 0h1m7 0h1m3 0h1m5 0h1m18 0h1m6 0h1m9 0h1m5 0h1m2 0h2m1 0h1m7 0h1m3 0h1m3 0h1m15 0h1m5 0h1m48 0h1m-640 1h1m293 0h1m184 0h1m6 0h1m7 0h1m3 0h1m6 0h4m13 0h5m3 0h1m9 0h5m2 0h2m1 0h1m1 0h1m8 0h1m2 0h1m3 0h1m14 0h3m4 0h1m48 0h1m-640 1h1m478 0h1m49 0h1m59 0h1m49 0h1m-640 1h1m478 0h1m159 0h1m-640 1h1m294 0h1m183 0h1m159 0h1m-640 1h1m478 0h1m8 0h1m5 0h1m27 0h1m2 0h1m14 0h1m3 0h1m9 0h1m28 0h3m53 0h1m-640 1h1m478 0h1m7 0h1m1 0h1m32 0h1m2 0h1m14 0h1m3 0h1m9 0h1m27 0h1m3 0h1m52 0h1m-640 1h1m295 0h1m182 0h1m6 0h1m3 0h1m3 0h1m3 0h4m10 0h1m9 0h1m2 0h1m14 0h1m3 0h1m2 0h3m2 0h5m2 0h3m2 0h4m4 0h1m13 0h1m52 0h1m-640 1h1m478 0h1m6 0h1m3 0h1m3 0h1m3 0h1m3 0h1m19 0h5m13 0h1m1 0h1m1 0h1m1 0h1m3 0h1m3 0h1m3 0h1m3 0h1m1 0h1m3 0h1m15 0h2m53 0h1m-640 1h1m478 0h1m6 0h5m3 0h1m3 0h1m13 0h1m12 0h1m14 0h1m1 0h1m1 0h1m1 0h1m3 0h1m3 0h1m3 0h5m1 0h1m7 0h1m13 0h1m52 0h1m-640 1h1m478 0h1m6 0h1m3 0h1m3 0h1m3 0h1m26 0h1m4 0h1m9 0h2m1 0h2m1 0h1m2 0h2m3 0h1m3 0h1m5 0h1m17 0h1m3 0h1m52 0h1m-640 1h1m478 0h1m6 0h1m3 0h1m3 0h1m3 0h1m26 0h1m4 0h1m9 0h1m3 0h1m2 0h2m1 0h1m4 0h1m3 0h4m1 0h1m18 0h3m53 0h1m-640 1h1m478 0h1m49 0h1m109 0h1m-640 1h1m478 0h1m159 0h1m-640 1h1m478 0h1m159 0h1m-640 1h1m298 0h1m179 0h1m7 0h3m27 0h3m14 0h5m3 0h1m21 0h5m13 0h1m3 0h1m9 0h1m16 0h3m23 0h1m-640 1h1m478 0h1m6 0h1m3 0h1m25 0h1m3 0h1m13 0h1m29 0h1m17 0h2m1 0h2m9 0h1m15 0h1m3 0h1m22 0h1m-640 1h1m478 0h1m6 0h1m6 0h3m2 0h4m4 0h1m13 0h1m13 0h1m7 0h1m3 0h1m3 0h1m3 0h1m9 0h1m17 0h1m1 0h1m1 0h1m1 0h1m3 0h1m1 0h5m3 0h1m13 0h1m22 0h1m-640 1h1m478 0h1m6 0h1m5 0h1m3 0h1m1 0h1m3 0h1m15 0h2m14 0h4m4 0h1m4 0h1m1 0h1m14 0h4m14 0h1m1 0h1m1 0h1m1 0h1m3 0h1m3 0h1m18 0h1m23 0h1m-640 1h1m478 0h1m6 0h1m5 0h1m3 0h1m1 0h1m7 0h1m13 0h1m13 0h1m7 0h1m5 0h1m5 0h1m13 0h1m13 0h1m3 0h1m1 0h1m3 0h1m3 0h1m5 0h1m11 0h1m24 0h1m-640 1h1m478 0h1m6 0h1m3 0h1m1 0h1m2 0h2m1 0h1m17 0h1m3 0h1m3 0h1m9 0h1m7 0h1m4 0h1m1 0h1m14 0h1m3 0h1m3 0h1m9 0h1m3 0h1m1 0h1m2 0h2m3 0h1m16 0h1m25 0h1m-640 1h1m478 0h1m7 0h3m3 0h2m1 0h1m1 0h1m18 0h3m4 0h1m9 0h1m7 0h1m3 0h1m3 0h1m14 0h3m4 0h1m9 0h1m3 0h1m2 0h2m1 0h1m4 0h1m14 0h5m22 0h1m-640 1h1m478 0h1m43 0h1m47 0h1m67 0h1m-640 1h1m302 0h1m175 0h1m159 0h1m-640 1h1m478 0h1m159 0h1m-640 1h1m478 0h1m6 0h1m3 0h1m34 0h2m13 0h1m3 0h1m3 0h1m21 0h1m2 0h1m65 0h1m-640 1h1m303 0h1m174 0h1m6 0h1m3 0h1m33 0h1m15 0h1m3 0h1m25 0h1m2 0h1m65 0h1m-640 1h1m303 0h1m174 0h1m6 0h1m3 0h1m2 0h3m2 0h4m3 0h3m4 0h1m10 0h1m16 0h1m3 0h1m3 0h1m3 0h4m4 0h1m9 0h1m2 0h1m65 0h1m-640 1h1m303 0h1m174 0h1m7 0h3m2 0h1m3 0h1m1 0h1m3 0h1m1 0h1m3 0h1m13 0h4m15 0h3m4 0h1m3 0h1m3 0h1m13 0h5m64 0h1m-640 1h1m304 0h1m173 0h1m8 0h1m3 0h1m3 0h1m1 0h1m3 0h1m1 0h1m3 0h1m3 0h1m9 0h1m3 0h1m15 0h1m5 0h1m3 0h1m3 0h1m3 0h1m12 0h1m65 0h1m-640 1h1m304 0h1m173 0h1m8 0h1m3 0h1m2 0h2m1 0h1m3 0h1m1 0h1m3 0h1m13 0h1m3 0h1m3 0h1m11 0h1m5 0h1m3 0h1m3 0h1m16 0h1m65 0h1m-640 1h1m305 0h1m172 0h1m8 0h1m4 0h2m1 0h1m1 0h1m3 0h1m2 0h4m14 0h3m4 0h1m11 0h1m5 0h1m3 0h1m3 0h1m16 0h1m65 0h1m-640 1h1m305 0h1m172 0h1m28 0h1m20 0h1m109 0h1m-640 1h1m305 0h1m172 0h1m24 0h4m131 0h1m-640 1h1m306 0h1m171 0h1m159 0h1m-640 1h1m478 0h1m6 0h1m3 0h1m15 0h1m15 0h1m3 0h1m14 0h3m16 0h1m16 0h3m14 0h3m16 0h3m23 0h1m-640 1h1m307 0h1m170 0h1m6 0h2m1 0h2m14 0h2m15 0h2m2 0h1m13 0h1m3 0h1m14 0h1m1 0h1m14 0h1m3 0h1m13 0h1m2 0h1m14 0h1m3 0h1m22 0h1m-640 1h1m307 0h1m170 0h1m6 0h1m1 0h1m1 0h1m3 0h1m11 0h1m15 0h1m1 0h1m1 0h1m3 0h1m9 0h1m3 0h1m13 0h1m3 0h1m3 0h1m9 0h1m2 0h1m14 0h1m3 0h1m3 0h1m13 0h1m22 0h1m-640 1h1m307 0h1m170 0h1m6 0h1m1 0h1m1 0h1m15 0h1m15 0h1m2 0h2m14 0h4m13 0h1m3 0h1m14 0h3m14 0h1m3 0h1m16 0h1m23 0h1m-640 1h1m308 0h1m169 0h1m6 0h1m3 0h1m3 0h1m11 0h1m15 0h1m3 0h1m3 0h1m13 0h1m13 0h5m3 0h1m9 0h1m3 0h1m13 0h1m3 0h1m3 0h1m11 0h1m24 0h1m-640 1h1m308 0h1m169 0h1m6 0h1m3 0h1m15 0h1m5 0h1m9 0h1m3 0h1m13 0h1m3 0h1m3 0h1m9 0h1m3 0h1m13 0h1m3 0h1m3 0h1m9 0h1m2 0h1m15 0h1m25 0h1m-640 1h1m308 0h1m169 0h1m6 0h1m3 0h1m14 0h3m4 0h1m9 0h1m3 0h1m14 0h3m4 0h1m9 0h1m3 0h1m14 0h3m4 0h1m9 0h3m15 0h5m22 0h1m-640 1h1m309 0h1m168 0h1m31 0h1m35 0h1m35 0h1m55 0h1m-640 1h1m309 0h1m168 0h1m159 0h1m-640 1h1m310 0h1m167 0h1m159 0h1m-640 1h1m310 0h1m167 0h1m8 0h1m29 0h1m16 0h3m29 0h2m14 0h3m12 0h1m14 0h3m23 0h1m-640 1h1m310 0h1m167 0h1m7 0h1m1 0h1m27 0h2m15 0h1m3 0h1m27 0h1m15 0h1m3 0h1m11 0h1m13 0h1m3 0h1m22 0h1m-640 1h1m311 0h1m166 0h1m6 0h1m3 0h1m1 0h4m3 0h3m4 0h1m11 0h1m15 0h1m5 0h1m3 0h1m2 0h3m4 0h1m10 0h1m16 0h1m6 0h3m3 0h4m3 0h1m13 0h1m22 0h1m-640 1h1m478 0h1m6 0h1m3 0h1m1 0h1m3 0h1m1 0h1m3 0h1m15 0h1m16 0h3m2 0h1m3 0h1m1 0h1m3 0h1m13 0h4m14 0h1m5 0h1m3 0h1m1 0h1m3 0h1m15 0h2m23 0h1m-640 1h1m478 0h1m6 0h5m1 0h1m3 0h1m1 0h1m3 0h1m3 0h1m11 0h1m19 0h1m1 0h1m3 0h1m1 0h1m7 0h1m9 0h1m3 0h1m13 0h1m5 0h1m3 0h1m1 0h1m3 0h1m3 0h1m13 0h1m22 0h1m-640 1h1m312 0h1m165 0h1m6 0h1m3 0h1m1 0h1m3 0h1m1 0h1m3 0h1m15 0h1m5 0h1m9 0h1m3 0h1m1 0h1m2 0h2m1 0h1m3 0h1m13 0h1m3 0h1m3 0h1m9 0h1m3 0h1m1 0h1m2 0h2m1 0h1m3 0h1m13 0h1m3 0h1m22 0h1m-640 1h1m312 0h1m165 0h1m6 0h1m3 0h1m1 0h1m3 0h1m2 0h4m14 0h3m4 0h1m10 0h3m3 0h2m1 0h1m2 0h3m15 0h3m4 0h1m10 0h3m3 0h2m1 0h1m2 0h4m14 0h3m23 0h1m-640 1h1m478 0h1m22 0h1m20 0h1m47 0h1m67 0h1m-640 1h1m313 0h1m164 0h1m18 0h4m137 0h1m-640 1h1m313 0h1m164 0h1m159 0h1m-640 1h1m314 0h1m163 0h1m6 0h1m41 0h1m2 0h1m15 0h3m2 0h1m38 0h2m46 0h1m-640 1h1m314 0h1m163 0h1m6 0h1m41 0h1m2 0h1m14 0h1m3 0h1m1 0h1m37 0h1m48 0h1m-640 1h1m315 0h1m162 0h1m6 0h1m6 0h3m3 0h3m2 0h4m2 0h4m4 0h1m9 0h1m2 0h1m14 0h1m5 0h4m3 0h3m2 0h4m3 0h3m4 0h1m10 0h1m49 0h1m-640 1h1m315 0h1m162 0h1m6 0h1m5 0h1m3 0h1m1 0h1m3 0h1m1 0h1m3 0h1m1 0h1m3 0h1m13 0h5m14 0h3m2 0h1m3 0h1m1 0h1m3 0h1m1 0h1m3 0h1m1 0h1m3 0h1m13 0h4m47 0h1m-640 1h1m315 0h1m162 0h1m6 0h1m5 0h5m1 0h1m3 0h1m1 0h1m5 0h1m3 0h1m3 0h1m12 0h1m18 0h1m1 0h1m3 0h1m1 0h1m3 0h1m1 0h1m5 0h5m3 0h1m9 0h1m3 0h1m46 0h1m-640 1h1m316 0h1m161 0h1m6 0h1m5 0h1m5 0h1m2 0h2m1 0h1m5 0h1m3 0h1m16 0h1m4 0h1m9 0h1m3 0h1m1 0h1m3 0h1m1 0h1m2 0h2m1 0h1m5 0h1m17 0h1m3 0h1m46 0h1m-640 1h1m316 0h1m161 0h1m6 0h5m2 0h4m2 0h2m1 0h1m1 0h1m5 0h1m3 0h1m16 0h1m4 0h1m10 0h3m2 0h1m3 0h1m2 0h2m1 0h1m1 0h1m6 0h4m14 0h3m47 0h1m-640 1h1m316 0h1m161 0h1m55 0h1m103 0h1m-640 1h1m317 0h1m160 0h1m159 0h1m-640 1h1m317 0h1m160 0h1m159 0h1m-640 1h1m318 0h1m159 0h1m159 0h1m-640 1h1m318 0h1m159 0h1m159 0h1m-640 1h1m318 0h1m159 0h1m159 0h1m-640 1h1m478 0h1m159 0h1m-640 1h1m319 0h1m158 0h1m159 0h1m-640 1h1m320 0h1m157 0h1m159 0h1m-640 1h1m320 0h1m157 0h1m159 0h1m-640 1h1m320 0h1m157 0h1m159 0h1m-640 1h1m321 0h1m156 0h1m159 0h1m-640 1h1m321 0h1m156 0h1m159 0h1m-640 1h1m321 0h1m156 0h1m159 0h1m-640 1h1m322 0h1m155 0h1m159 0h1m-640 1h1m322 0h1m155 0h1m159 0h1m-640 1h1m323 0h1m154 0h1m159 0h1m-640 1h1m323 0h1m154 0h1m159 0h1m-640 1h1m478 0h1m159 0h1m-640 1h1m478 0h1m159 0h1m-640 1h1m478 0h1m159 0h1m-640 1h1m478 0h1m159 0h1m-640 1h1m478 0h1m159 0h1m-640 1h1m478 0h1m159 0h1m-640 1h1m478 0h1m159 0h1m-640 1h1m478 0h1m159 0h1m-640 1h1m478 0h1m159 0h1m-640 1h1m478 0h1m159 0h1m-640 1h1m478 0h1m159 0h1m-640 1h1m478 0h1m159 0h1m-640 1h1m478 0h1m159 0h1m-640 1h1m478 0h1m159 0h1m-640 1h1m478 0h1m159 0h1m-640 1h1m478 0h1m159 0h1m-640 1h1m478 0h1m159 0h1m-640 1h640"/>
<path stroke="#fff" d="M0 .5m488 7h1m11 0h1m17 0h1m21 0h5m7 0h1m2 0h1m4 0h1m4 0h3m-81 1h1m1 0h1m10 0h1m17 0h1m21 0h1m11 0h1m2 0h1m3 0h2m3 0h1m3 0h1m-83 1h1m3 0h1m2 0h4m1 0h5m1 0h4m3 0h3m4 0h1m4 0h3m3 0h3m8 0h1m11 0h1m2 0h1m4 0h1m3 0h1m-79 1h1m3 0h1m1 0h1m7 0h1m3 0h1m3 0h1m1 0h1m3 0h1m3 0h1m3 0h1m3 0h1m1 0h1m3 0h1m7 0h4m8 0h5m3 0h1m3 0h1m1 0h3m-83 1h5m2 0h3m4 0h1m3 0h1m5 0h1m3 0h1m3 0h1m3 0h1m3 0h1m1 0h1m3 0h1m11 0h1m10 0h1m4 0h1m3 0h1m3 0h1m-344 1h1m2 0h22m236 0h1m3 0h1m5 0h1m3 0h1m3 0h1m5 0h1m3 0h1m3 0h1m3 0h1m3 0h1m1 0h1m3 0h1m7 0h1m3 0h1m2 0h2m6 0h1m4 0h1m3 0h1m3 0h1m-357 1h16m22 0h16m220 0h1m3 0h1m1 0h4m5 0h1m2 0h1m6 0h3m4 0h1m4 0h3m3 0h4m8 0h3m3 0h2m6 0h1m3 0h3m3 0h3m-364 1h8m13 0h1m40 0h8m258 0h1m-335 1h6m21 0h1m48 0h6m248 0h4m-338 1h4m27 0h1m54 0h4m-94 1h4m31 0h1m58 0h4m-102 1h4m35 0h1m62 0h4m-109 1h3m39 0h1m66 0h4m-117 1h4m42 0h1m70 0h4m-125 1h4m47 0h1m73 0h3m-132 1h4m51 0h1m76 0h4m-139 1h3m55 0h1m80 0h4m-145 1h2m58 0h1m84 0h2m-149 1h2m60 0h1m86 0h2m-154 1h3m62 0h1m88 0h3m-160 1h3m65 0h1m91 0h2m166 0h5m19 0h5m7 0h1m43 0h1m3 0h5m14 0h3m3 0h3m3 0h3m5 0h2m-455 1h2m68 0h1m93 0h3m165 0h1m21 0h1m11 0h1m42 0h2m7 0h1m13 0h1m3 0h1m1 0h1m3 0h1m1 0h1m3 0h1m3 0h1m-456 1h3m70 0h1m96 0h3m162 0h1m3 0h1m3 0h1m2 0h3m8 0h1m6 0h3m2 0h4m2 0h4m2 0h1m3 0h1m2 0h3m2 0h4m2 0h1m3 0h1m9 0h1m6 0h1m18 0h1m1 0h1m2 0h2m5 0h1m2 0h1m-457 1h2m73 0h1m99 0h2m160 0h1m3 0h1m3 0h1m1 0h1m3 0h1m7 0h4m2 0h1m3 0h1m1 0h1m3 0h1m1 0h1m3 0h1m1 0h1m3 0h1m1 0h1m3 0h1m1 0h1m3 0h1m1 0h1m3 0h1m9 0h1m5 0h1m18 0h1m2 0h1m1 0h1m1 0h1m4 0h1m2 0h4m-461 1h2m75 0h1m101 0h2m158 0h1m3 0h1m3 0h1m1 0h5m7 0h1m5 0h5m1 0h1m3 0h1m1 0h1m5 0h1m3 0h1m1 0h1m3 0h1m1 0h1m5 0h1m3 0h1m9 0h1m4 0h1m18 0h1m3 0h2m2 0h1m3 0h1m3 0h1m3 0h1m-465 1h3m77 0h1m103 0h3m155 0h1m3 0h1m2 0h2m1 0h1m11 0h1m5 0h1m5 0h1m3 0h1m1 0h1m5 0h1m2 0h2m1 0h1m2 0h2m1 0h1m5 0h1m3 0h1m9 0h1m3 0h1m7 0h1m10 0h1m4 0h1m3 0h1m2 0h1m4 0h1m3 0h1m-467 1h2m80 0h1m106 0h2m153 0h1m4 0h2m1 0h1m2 0h4m7 0h1m6 0h4m1 0h4m2 0h1m6 0h2m1 0h1m2 0h2m1 0h1m1 0h1m6 0h4m8 0h3m2 0h1m7 0h1m9 0h5m2 0h3m2 0h5m2 0h3m-468 1h2m82 0h1m108 0h2m219 0h1m20 0h1m-438 1h2m84 0h1m110 0h2m1 0h1m211 0h4m-418 1h2m86 0h1m112 0h2m-205 1h2m88 0h1m112 0h1m1 0h2m150 0h3m9 0h3m2 0h5m8 0h3m3 0h3m23 0h1m3 0h3m2 0h5m14 0h3m9 0h3m3 0h3m9 0h3m2 0h1m3 0h1m1 0h5m2 0h1m-498 1h2m90 0h1m111 0h1m4 0h2m147 0h1m3 0h1m7 0h1m3 0h1m1 0h1m11 0h1m3 0h1m1 0h1m3 0h1m21 0h1m3 0h1m3 0h1m3 0h1m15 0h1m3 0h1m7 0h1m3 0h1m1 0h1m3 0h1m7 0h1m3 0h1m1 0h2m1 0h2m3 0h1m5 0h1m-501 1h2m93 0h1m110 0h1m6 0h2m149 0h1m3 0h1m7 0h1m1 0h1m7 0h1m3 0h1m2 0h2m1 0h1m2 0h2m2 0h3m2 0h2m1 0h1m9 0h1m4 0h1m7 0h1m15 0h1m2 0h1m4 0h1m3 0h1m2 0h2m1 0h1m2 0h2m7 0h1m5 0h1m1 0h1m1 0h1m3 0h1m6 0h1m-504 1h2m95 0h1m109 0h1m9 0h2m145 0h2m11 0h1m2 0h4m8 0h1m1 0h1m1 0h1m1 0h1m1 0h1m1 0h1m1 0h1m3 0h1m1 0h1m1 0h1m1 0h1m8 0h1m5 0h3m4 0h1m9 0h5m2 0h3m8 0h1m1 0h1m1 0h1m1 0h1m1 0h1m1 0h1m7 0h1m1 0h3m1 0h1m1 0h1m1 0h1m3 0h1m6 0h1m-506 1h2m97 0h1m109 0h1m11 0h2m145 0h1m3 0h1m5 0h1m7 0h1m3 0h1m3 0h2m2 0h1m1 0h2m2 0h1m1 0h1m3 0h1m1 0h1m1 0h1m1 0h1m8 0h1m8 0h1m3 0h1m15 0h1m3 0h1m3 0h1m3 0h2m2 0h1m1 0h2m2 0h1m7 0h1m3 0h1m1 0h1m3 0h1m3 0h1m6 0h1m-508 1h2m99 0h1m108 0h1m14 0h2m139 0h1m3 0h1m8 0h1m4 0h1m3 0h1m7 0h1m3 0h1m1 0h1m3 0h1m1 0h1m2 0h2m1 0h1m3 0h1m9 0h1m3 0h1m3 0h1m3 0h1m15 0h1m3 0h1m7 0h1m3 0h1m1 0h1m3 0h1m7 0h1m3 0h1m1 0h1m3 0h1m3 0h1m5 0h1m-509 1h2m101 0h1m108 0h1m16 0h2m138 0h3m8 0h5m2 0h3m9 0h3m3 0h3m3 0h2m1 0h1m1 0h1m3 0h1m10 0h1m3 0h3m4 0h1m16 0h3m9 0h3m3 0h3m9 0h3m2 0h1m3 0h1m3 0h1m4 0h1m-509 1h1m103 0h1m107 0h1m19 0h1m-234 1h1m104 0h1m107 0h1m20 0h1m-237 1h2m105 0h1m106 0h1m22 0h2m-240 1h1m107 0h1m106 0h1m24 0h1m-243 1h2m104 0h33m77 0h1m26 0h2m-249 1h1m1 0h2m99 0h7m4 0h1m15 0h1m12 0h6m71 0h1m28 0h2m-251 1h2m95 0h6m11 0h1m15 0h1m16 0h1m1 0h7m63 0h1m31 0h2m-254 1h1m1 0h1m88 0h7m1 0h1m15 0h1m15 0h1m16 0h1m8 0h6m57 0h1m33 0h1m-257 1h2m3 0h1m83 0h4m8 0h1m15 0h1m15 0h1m16 0h1m14 0h5m51 0h1m35 0h2m-260 1h1m6 0h1m78 0h4m12 0h1m15 0h1m15 0h1m15 0h1m16 0h1m3 0h4m47 0h1m37 0h1m-263 1h2m7 0h1m73 0h5m16 0h1m15 0h1m15 0h1m15 0h1m16 0h1m7 0h4m42 0h1m39 0h2m-266 1h1m10 0h1m68 0h4m4 0h1m16 0h1m16 0h1m14 0h1m15 0h1m15 0h1m12 0h5m37 0h1m41 0h1m-269 1h2m12 0h1m63 0h4m9 0h1m16 0h1m15 0h1m14 0h1m15 0h1m15 0h1m16 0h5m32 0h1m43 0h2m-272 1h1m14 0h1m60 0h3m13 0h1m16 0h1m15 0h1m14 0h1m15 0h1m15 0h1m16 0h1m4 0h2m30 0h1m45 0h1m-274 1h1m16 0h1m57 0h2m16 0h1m16 0h1m15 0h1m14 0h1m14 0h1m16 0h1m15 0h1m7 0h2m27 0h1m47 0h1m-277 1h2m18 0h1m54 0h2m1 0h1m17 0h1m15 0h1m15 0h1m14 0h1m14 0h1m16 0h1m15 0h1m9 0h2m25 0h1m48 0h2m-280 1h1m20 0h1m52 0h2m3 0h1m17 0h1m15 0h1m11 0h30m4 0h1m16 0h1m15 0h1m11 0h3m21 0h1m51 0h1m-282 1h1m22 0h1m48 0h3m6 0h1m16 0h1m15 0h1m5 0h6m30 0h6m14 0h1m15 0h1m15 0h3m18 0h1m52 0h1m-285 1h2m24 0h1m44 0h3m9 0h1m16 0h1m15 0h6m42 0h7m7 0h1m15 0h1m17 0h3m15 0h1m54 0h1m-287 1h1m26 0h1m42 0h2m13 0h1m16 0h1m7 0h7m55 0h6m1 0h1m15 0h1m17 0h1m2 0h2m13 0h1m55 0h2m-290 1h1m28 0h1m39 0h2m15 0h1m16 0h1m1 0h6m68 0h6m1 0h1m9 0h1m16 0h1m5 0h2m10 0h1m58 0h1m-292 1h1m30 0h1m36 0h3m16 0h1m14 0h4m80 0h5m5 0h1m17 0h1m7 0h3m7 0h1m59 0h1m-294 1h1m31 0h1m33 0h3m2 0h1m17 0h1m10 0h3m85 0h1m3 0h3m2 0h1m16 0h1m11 0h3m3 0h1m61 0h1m-297 1h2m33 0h1m29 0h3m6 0h1m16 0h1m7 0h3m87 0h1m7 0h3m16 0h1m14 0h2m1 0h1m62 0h1m-299 1h1m36 0h1m26 0h2m9 0h1m17 0h1m3 0h3m90 0h1m10 0h3m13 0h1m16 0h2m63 0h2m-302 1h1m37 0h1m24 0h2m12 0h1m16 0h4m93 0h1m13 0h3m9 0h1m17 0h1m1 0h2m63 0h1m-304 1h1m39 0h1m22 0h1m14 0h1m14 0h3m96 0h1m16 0h3m6 0h1m16 0h1m4 0h2m62 0h1m-306 1h1m41 0h1m19 0h2m16 0h1m8 0h1m1 0h3m99 0h1m19 0h3m2 0h1m17 0h1m6 0h2m61 0h1m-308 1h1m42 0h1m18 0h2m17 0h1m7 0h3m101 0h1m23 0h3m16 0h1m9 0h1m61 0h1m-310 1h1m44 0h1m15 0h2m2 0h1m17 0h1m3 0h3m2 0h1m101 0h1m26 0h2m14 0h1m10 0h2m60 0h1m-312 1h1m46 0h1m12 0h2m4 0h1m17 0h1m1 0h2m5 0h1m101 0h1m28 0h2m12 0h1m12 0h1m60 0h1m-314 1h1m47 0h1m10 0h2m7 0h1m16 0h2m7 0h1m101 0h1m30 0h2m9 0h1m14 0h2m59 0h1m-316 1h1m49 0h1m7 0h2m9 0h1m14 0h2m10 0h1m99 0h1m33 0h3m6 0h1m16 0h2m58 0h1m-318 1h1m51 0h1m5 0h1m12 0h1m11 0h2m12 0h1m99 0h1m36 0h2m3 0h1m17 0h1m1 0h2m57 0h1m-320 1h1m52 0h1m3 0h2m13 0h1m8 0h3m14 0h1m99 0h1m38 0h2m1 0h1m17 0h1m3 0h2m56 0h1m-322 1h1m54 0h1m1 0h1m16 0h1m5 0h2m18 0h1m98 0h1m40 0h2m16 0h1m6 0h1m56 0h1m-324 1h1m55 0h2m17 0h1m3 0h2m20 0h1m98 0h1m42 0h2m14 0h1m7 0h2m55 0h1m-326 1h1m55 0h1m2 0h1m17 0h1m1 0h1m22 0h1m97 0h1m45 0h2m11 0h1m10 0h1m55 0h1m-328 1h1m55 0h1m3 0h1m17 0h2m24 0h1m96 0h1m47 0h2m8 0h1m12 0h1m55 0h1m-330 1h1m54 0h2m5 0h1m14 0h2m26 0h1m96 0h1m49 0h2m6 0h1m13 0h2m54 0h1m-332 1h1m54 0h1m8 0h1m11 0h2m29 0h1m45 0h26m24 0h1m51 0h1m4 0h1m16 0h1m54 0h1m-334 1h1m54 0h1m9 0h1m9 0h2m31 0h1m40 0h5m26 0h6m18 0h1m52 0h2m2 0h1m17 0h1m54 0h1m-336 1h1m54 0h1m11 0h1m6 0h2m33 0h1m29 0h11m37 0h11m6 0h1m55 0h2m19 0h1m54 0h1m-338 1h1m53 0h2m13 0h1m4 0h1m36 0h1m24 0h4m59 0h4m2 0h1m57 0h2m16 0h1m1 0h2m53 0h1m81 0h1m9 0h1m5 0h1m21 0h3m34 0h3m2 0h1m2 0h1m5 0h2m3 0h1m4 0h3m3 0h3m3 0h3m9 0h3m2 0h5m1 0h5m1 0h5m-566 1h1m53 0h1m15 0h1m3 0h1m37 0h1m22 0h2m67 0h3m59 0h1m14 0h1m4 0h1m53 0h1m80 0h1m9 0h1m27 0h1m2 0h1m32 0h1m3 0h1m1 0h1m2 0h1m4 0h1m4 0h2m3 0h1m3 0h1m1 0h1m3 0h1m1 0h1m3 0h1m7 0h1m3 0h1m5 0h1m1 0h1m9 0h1m-567 1h1m53 0h1m17 0h3m38 0h1m18 0h4m72 0h3m57 0h2m11 0h1m6 0h1m53 0h1m79 0h1m1 0h1m3 0h1m3 0h1m5 0h1m4 0h3m2 0h4m8 0h1m3 0h1m2 0h3m2 0h1m3 0h1m7 0h5m11 0h1m1 0h1m2 0h1m3 0h1m6 0h1m3 0h1m2 0h2m1 0h1m2 0h1m2 0h1m2 0h1m8 0h1m3 0h1m4 0h1m2 0h1m8 0h1m-567 1h1m52 0h2m18 0h1m41 0h1m13 0h4m79 0h4m55 0h1m9 0h1m8 0h2m52 0h1m78 0h1m1 0h1m3 0h1m3 0h1m5 0h1m3 0h1m3 0h1m1 0h1m3 0h1m7 0h1m3 0h1m1 0h1m3 0h1m1 0h1m3 0h1m22 0h1m2 0h5m1 0h4m4 0h1m3 0h1m1 0h1m1 0h1m2 0h3m3 0h3m9 0h4m3 0h1m3 0h4m4 0h1m-566 1h1m51 0h1m1 0h1m17 0h1m42 0h1m10 0h3m87 0h3m53 0h1m8 0h1m10 0h1m51 0h1m74 0h1m3 0h1m1 0h1m3 0h1m3 0h1m5 0h1m3 0h1m3 0h1m1 0h1m3 0h1m7 0h1m3 0h1m1 0h1m3 0h1m1 0h1m3 0h1m7 0h5m9 0h1m6 0h1m2 0h1m3 0h1m3 0h1m3 0h2m2 0h1m1 0h1m3 0h1m1 0h1m3 0h1m11 0h1m2 0h1m8 0h1m2 0h1m-566 1h1m50 0h2m3 0h1m14 0h2m43 0h1m6 0h4m93 0h4m50 0h2m5 0h1m12 0h2m50 0h1m73 0h1m3 0h1m1 0h1m2 0h2m3 0h1m5 0h1m3 0h1m2 0h2m1 0h1m3 0h1m7 0h1m2 0h1m2 0h1m2 0h2m1 0h1m3 0h1m20 0h1m7 0h1m2 0h1m3 0h1m3 0h1m3 0h1m3 0h1m1 0h1m3 0h1m1 0h1m3 0h1m2 0h2m3 0h1m3 0h1m1 0h1m5 0h1m3 0h1m1 0h1m-566 1h1m50 0h1m5 0h1m12 0h2m46 0h1m1 0h4m101 0h4m48 0h2m2 0h1m15 0h1m50 0h1m73 0h3m3 0h2m1 0h1m3 0h1m5 0h1m4 0h2m1 0h1m1 0h1m3 0h1m7 0h3m4 0h2m1 0h1m2 0h4m19 0h5m4 0h1m3 0h3m3 0h3m3 0h3m3 0h3m3 0h3m3 0h2m4 0h3m2 0h1m6 0h3m2 0h1m-567 1h1m50 0h1m7 0h1m10 0h1m48 0h2m109 0h2m48 0h2m17 0h1m50 0h1m129 0h1m-482 1h1m49 0h2m9 0h1m8 0h1m46 0h3m113 0h3m46 0h1m18 0h2m49 0h1m124 0h4m-482 1h1m49 0h1m12 0h1m5 0h2m45 0h2m119 0h2m45 0h2m17 0h2m49 0h1m-355 1h1m48 0h1m13 0h1m4 0h1m45 0h2m123 0h2m45 0h1m15 0h1m2 0h1m48 0h1m-356 1h1m48 0h1m15 0h1m2 0h1m44 0h2m127 0h2m44 0h1m13 0h1m4 0h1m48 0h1m-358 1h1m48 0h1m17 0h2m43 0h2m131 0h2m43 0h1m11 0h1m6 0h1m48 0h1m-360 1h1m48 0h1m17 0h2m42 0h2m135 0h2m42 0h2m8 0h1m8 0h1m48 0h1m-361 1h1m47 0h2m16 0h1m42 0h2m139 0h2m42 0h1m7 0h1m9 0h1m47 0h1m-362 1h1m47 0h1m2 0h1m14 0h1m41 0h2m143 0h2m41 0h1m5 0h1m11 0h1m47 0h1m-364 1h1m47 0h1m4 0h1m12 0h1m40 0h2m147 0h1m41 0h1m3 0h1m13 0h1m47 0h1m-366 1h1m47 0h1m6 0h1m9 0h2m40 0h1m150 0h2m40 0h3m15 0h1m47 0h1m-367 1h1m46 0h1m8 0h1m7 0h1m41 0h1m153 0h1m41 0h1m16 0h1m46 0h1m-368 1h1m46 0h1m9 0h1m6 0h1m40 0h2m155 0h2m40 0h1m16 0h1m46 0h1m-370 1h1m46 0h1m11 0h1m4 0h1m39 0h2m159 0h2m39 0h1m16 0h1m46 0h1m-371 1h1m45 0h1m13 0h1m2 0h1m39 0h1m163 0h1m39 0h1m15 0h2m45 0h1m-372 1h1m45 0h1m15 0h2m38 0h2m165 0h1m39 0h1m13 0h1m2 0h1m45 0h1m-374 1h1m45 0h1m16 0h1m38 0h1m168 0h2m38 0h1m11 0h1m4 0h1m45 0h1m-375 1h1m44 0h1m16 0h1m38 0h1m171 0h1m38 0h1m8 0h2m6 0h1m44 0h1m-376 1h1m44 0h1m16 0h1m37 0h2m173 0h2m37 0h1m6 0h1m9 0h1m44 0h1m-378 1h1m44 0h2m15 0h1m36 0h2m177 0h2m36 0h1m4 0h1m11 0h1m44 0h2m-380 1h1m44 0h1m1 0h1m13 0h1m36 0h1m181 0h1m36 0h1m2 0h1m12 0h1m43 0h2m-380 1h1m44 0h1m3 0h1m11 0h1m35 0h2m183 0h1m36 0h2m14 0h1m41 0h1m2 0h1m-381 1h1m43 0h1m5 0h1m9 0h1m35 0h1m186 0h2m35 0h1m15 0h1m38 0h2m3 0h1m-382 1h1m43 0h1m7 0h2m6 0h1m35 0h1m189 0h1m35 0h1m15 0h1m36 0h1m6 0h1m-383 1h1m43 0h1m9 0h1m3 0h2m34 0h2m191 0h1m35 0h1m14 0h1m34 0h2m7 0h1m-384 1h1m43 0h1m11 0h1m2 0h2m33 0h1m194 0h2m34 0h1m14 0h1m32 0h1m10 0h1m-386 1h1m43 0h1m13 0h2m2 0h1m31 0h1m197 0h1m34 0h1m14 0h1m29 0h2m12 0h1m-387 1h1m43 0h1m13 0h1m4 0h1m29 0h1m199 0h1m34 0h1m12 0h2m28 0h1m14 0h1m-388 1h1m43 0h1m14 0h1m5 0h2m25 0h2m201 0h2m32 0h1m10 0h2m2 0h1m25 0h2m16 0h1m-390 1h1m43 0h1m14 0h1m8 0h1m23 0h1m205 0h1m32 0h1m8 0h1m5 0h1m23 0h1m19 0h1m-392 1h1m43 0h1m14 0h1m10 0h1m21 0h1m207 0h1m32 0h1m6 0h1m7 0h1m20 0h2m21 0h1m-393 1h1m43 0h1m13 0h1m12 0h1m19 0h1m209 0h1m32 0h1m3 0h2m8 0h1m19 0h1m23 0h1m-394 1h1m43 0h1m13 0h1m14 0h1m17 0h1m211 0h1m32 0h1m1 0h1m11 0h1m16 0h2m25 0h1m-395 1h1m42 0h1m1 0h1m12 0h1m15 0h1m15 0h1m213 0h1m31 0h2m13 0h1m14 0h1m27 0h1m-396 1h1m42 0h1m3 0h1m10 0h1m17 0h1m13 0h1m215 0h1m31 0h1m14 0h1m11 0h2m29 0h1m-397 1h1m41 0h1m5 0h1m8 0h1m19 0h1m11 0h1m217 0h1m31 0h1m14 0h1m9 0h1m31 0h1m-398 1h1m42 0h1m6 0h2m5 0h1m21 0h2m8 0h1m219 0h1m31 0h1m13 0h1m7 0h2m33 0h1m-399 1h1m41 0h1m9 0h1m3 0h1m24 0h1m6 0h1m221 0h1m31 0h1m13 0h1m5 0h1m35 0h1m-400 1h1m41 0h1m11 0h1m2 0h1m25 0h1m4 0h1m223 0h1m30 0h2m13 0h1m2 0h2m37 0h1m-401 1h1m40 0h1m13 0h2m27 0h1m2 0h1m225 0h1m28 0h3m14 0h2m39 0h1m-402 1h1m41 0h1m13 0h1m29 0h2m227 0h1m26 0h1m3 0h1m13 0h1m41 0h1m-403 1h1m40 0h1m13 0h1m30 0h1m229 0h1m24 0h1m5 0h1m10 0h2m1 0h1m40 0h1m-404 1h1m40 0h1m14 0h1m29 0h1m231 0h1m21 0h2m6 0h1m9 0h1m4 0h1m40 0h1m-405 1h1m40 0h1m13 0h1m29 0h1m233 0h1m19 0h1m9 0h1m6 0h2m5 0h1m40 0h1m-407 1h2m40 0h1m14 0h1m29 0h1m233 0h1m18 0h1m10 0h1m5 0h1m8 0h1m40 0h1m-407 1h2m38 0h1m14 0h1m29 0h1m235 0h1m15 0h2m12 0h1m2 0h2m10 0h1m39 0h1m-408 1h1m2 0h2m36 0h1m13 0h1m29 0h1m237 0h1m13 0h1m15 0h2m12 0h1m40 0h1m-409 1h1m4 0h2m33 0h1m1 0h2m10 0h1m29 0h1m239 0h1m11 0h1m17 0h1m13 0h1m39 0h1m-410 1h1m7 0h2m31 0h1m3 0h2m8 0h1m28 0h1m241 0h1m8 0h2m18 0h1m13 0h1m40 0h1m-411 1h1m9 0h2m28 0h1m6 0h1m6 0h1m29 0h1m241 0h1m7 0h1m21 0h1m13 0h1m39 0h1m-412 1h1m12 0h2m26 0h1m7 0h2m3 0h1m29 0h1m243 0h1m5 0h1m23 0h1m12 0h1m40 0h1m-413 1h1m14 0h2m23 0h1m10 0h3m29 0h1m245 0h1m2 0h2m25 0h1m12 0h1m39 0h1m-414 1h1m17 0h2m21 0h1m12 0h1m28 0h1m247 0h2m27 0h1m12 0h1m40 0h1m-415 1h1m19 0h2m18 0h1m12 0h1m29 0h1m277 0h1m12 0h1m39 0h1m-415 1h1m21 0h2m15 0h1m13 0h1m28 0h1m249 0h1m28 0h1m12 0h2m38 0h1m-416 1h1m24 0h2m13 0h1m12 0h1m28 0h1m251 0h1m28 0h1m9 0h2m1 0h1m39 0h1m-417 1h1m26 0h2m10 0h1m13 0h1m28 0h1m251 0h1m28 0h1m7 0h2m4 0h1m38 0h1m-418 1h1m29 0h2m7 0h1m13 0h1m28 0h1m253 0h1m28 0h1m4 0h2m7 0h1m38 0h1m-419 1h1m31 0h2m5 0h1m13 0h1m28 0h1m253 0h1m28 0h1m2 0h2m9 0h1m38 0h1m-420 1h1m34 0h2m2 0h1m13 0h1m28 0h1m255 0h1m28 0h2m12 0h1m38 0h1m-421 1h1m36 0h3m13 0h1m27 0h1m257 0h1m27 0h1m13 0h1m38 0h1m-421 1h1m37 0h3m11 0h1m27 0h1m259 0h1m27 0h1m13 0h1m37 0h1m-422 1h1m38 0h1m2 0h2m8 0h1m28 0h1m259 0h1m28 0h1m12 0h1m38 0h1m-423 1h1m38 0h1m4 0h3m5 0h1m27 0h1m261 0h1m27 0h1m12 0h1m38 0h1m-424 1h1m38 0h1m8 0h2m2 0h1m27 0h1m263 0h1m27 0h1m12 0h1m38 0h1m-425 1h1m38 0h1m10 0h3m27 0h1m263 0h1m27 0h1m12 0h1m38 0h1m-425 1h1m38 0h1m11 0h1m27 0h1m265 0h1m27 0h1m11 0h1m38 0h1m-426 1h1m38 0h1m12 0h1m27 0h1m265 0h1m27 0h1m12 0h1m38 0h1m-427 1h1m38 0h1m12 0h1m26 0h1m267 0h1m26 0h1m12 0h1m38 0h1m-427 1h1m37 0h1m12 0h1m26 0h1m269 0h1m26 0h1m10 0h3m37 0h1m-428 1h1m38 0h1m12 0h1m25 0h1m271 0h1m25 0h1m8 0h2m2 0h1m38 0h1m-429 1h1m37 0h1m12 0h1m26 0h1m271 0h1m26 0h1m5 0h2m5 0h1m37 0h1m-430 1h1m38 0h1m12 0h1m25 0h1m273 0h1m25 0h1m3 0h2m7 0h1m38 0h1m-431 1h1m37 0h1m12 0h1m26 0h1m273 0h1m26 0h3m10 0h1m37 0h1m-432 1h1m38 0h1m12 0h1m25 0h1m275 0h1m25 0h1m12 0h1m38 0h1m-433 1h1m38 0h1m11 0h1m26 0h1m275 0h1m26 0h1m11 0h1m38 0h1m-433 1h1m37 0h3m10 0h1m25 0h1m277 0h1m25 0h1m12 0h1m37 0h1m-434 1h1m38 0h1m2 0h2m7 0h1m26 0h1m277 0h1m26 0h1m11 0h1m38 0h1m-435 1h1m38 0h1m4 0h3m4 0h1m25 0h1m279 0h1m25 0h1m11 0h1m38 0h1m-435 1h1m37 0h1m8 0h2m2 0h1m25 0h1m279 0h1m25 0h1m12 0h1m37 0h1m-435 1h1m37 0h1m10 0h2m25 0h1m281 0h1m25 0h1m11 0h1m37 0h1m-436 1h1m37 0h1m12 0h1m25 0h1m281 0h1m25 0h1m12 0h1m37 0h1m-437 1h1m37 0h1m12 0h1m24 0h1m283 0h1m24 0h1m12 0h1m37 0h1m-437 1h1m36 0h1m12 0h2m24 0h1m283 0h1m25 0h1m12 0h1m36 0h1m-437 1h1m36 0h1m12 0h1m1 0h3m20 0h1m285 0h1m24 0h1m10 0h3m36 0h1m-438 1h1m36 0h1m13 0h1m4 0h2m18 0h1m285 0h1m24 0h1m8 0h2m3 0h1m36 0h1m-439 1h1m36 0h1m12 0h1m7 0h3m14 0h1m287 0h1m24 0h1m4 0h3m5 0h1m36 0h1m-439 1h1m36 0h1m12 0h1m10 0h3m11 0h1m287 0h1m24 0h1m2 0h2m8 0h1m36 0h1m-439 1h1m35 0h1m13 0h1m13 0h3m8 0h1m287 0h1m24 0h3m11 0h1m35 0h1m-440 1h1m36 0h1m12 0h1m17 0h2m5 0h1m289 0h1m24 0h1m12 0h1m36 0h1m-441 1h1m36 0h1m12 0h1m19 0h3m2 0h1m289 0h1m24 0h1m12 0h1m36 0h1m-441 1h1m36 0h1m12 0h1m22 0h1m292 0h1m23 0h1m12 0h1m36 0h1m-442 1h1m36 0h3m10 0h1m24 0h1m291 0h1m24 0h1m12 0h1m36 0h1m-443 1h1m36 0h1m2 0h3m7 0h1m24 0h1m291 0h1m24 0h1m12 0h1m36 0h1m-443 1h1m36 0h1m5 0h4m3 0h1m24 0h1m291 0h1m24 0h1m12 0h1m36 0h1m-443 1h1m36 0h1m9 0h3m24 0h1m293 0h1m24 0h1m11 0h1m36 0h1m-444 1h1m36 0h1m12 0h1m24 0h1m293 0h1m24 0h1m12 0h1m36 0h1m-445 1h1m36 0h1m12 0h1m24 0h1m293 0h1m24 0h1m12 0h1m36 0h1m-445 1h1m36 0h1m11 0h1m25 0h1m293 0h1m25 0h1m11 0h1m36 0h1m-445 1h1m36 0h1m11 0h1m24 0h1m295 0h1m24 0h1m11 0h1m36 0h1m-446 1h1m37 0h1m11 0h1m24 0h1m295 0h1m24 0h1m10 0h2m37 0h1m-447 1h1m36 0h1m11 0h1m25 0h1m295 0h1m25 0h1m5 0h4m2 0h1m36 0h1m-447 1h1m36 0h1m11 0h1m24 0h1m297 0h1m24 0h1m2 0h3m6 0h1m36 0h1m-447 1h1m36 0h1m11 0h1m24 0h1m297 0h1m24 0h3m9 0h1m36 0h1m-448 1h1m37 0h1m11 0h1m24 0h1m297 0h1m24 0h1m11 0h1m37 0h1m-449 1h1m36 0h1m11 0h1m25 0h1m297 0h1m25 0h1m11 0h1m36 0h1m-449 1h1m36 0h1m11 0h1m24 0h1m299 0h1m24 0h1m11 0h1m36 0h1m-449 1h1m36 0h1m11 0h1m24 0h1m299 0h1m24 0h1m11 0h1m36 0h1m-449 1h1m36 0h3m9 0h1m24 0h1m299 0h1m24 0h1m11 0h1m36 0h1m-449 1h1m35 0h1m3 0h6m3 0h1m24 0h1m299 0h1m24 0h1m12 0h1m35 0h1m-450 1h1m36 0h1m9 0h4m23 0h1m301 0h1m23 0h1m12 0h1m36 0h1m-451 1h1m36 0h1m11 0h1m24 0h1m301 0h1m24 0h1m11 0h1m36 0h1m-451 1h1m36 0h1m11 0h1m23 0h1m303 0h1m23 0h1m11 0h1m36 0h1m-451 1h1m36 0h1m11 0h1m23 0h1m303 0h1m23 0h1m11 0h1m36 0h1m-451 1h1m36 0h1m11 0h1m23 0h1m303 0h1m23 0h1m11 0h1m36 0h1m-451 1h1m36 0h1m11 0h1m23 0h1m303 0h1m23 0h1m11 0h1m36 0h1m-451 1h1m35 0h1m12 0h1m22 0h1m305 0h1m22 0h1m12 0h1m35 0h1m-451 1h1m35 0h1m12 0h1m22 0h1m305 0h1m22 0h1m6 0h7m35 0h1m-452 1h1m36 0h1m11 0h1m23 0h1m305 0h1m23 0h6m6 0h1m36 0h1m-453 1h1m36 0h1m11 0h1m23 0h1m305 0h1m23 0h1m11 0h1m36 0h1m-453 1h1m36 0h1m11 0h1m23 0h1m305 0h1m23 0h1m11 0h1m36 0h1m-453 1h1m36 0h1m11 0h1m23 0h1m305 0h1m23 0h1m11 0h1m36 0h1m-453 1h1m35 0h1m12 0h1m23 0h1m305 0h1m23 0h1m12 0h1m35 0h1m-453 1h1m35 0h1m12 0h1m23 0h1m305 0h1m23 0h1m12 0h1m35 0h1m-453 1h1m35 0h4m8 0h1m24 0h1m305 0h1m24 0h1m11 0h1m35 0h1m-453 1h1m35 0h1m3 0h5m3 0h1m24 0h1m305 0h1m24 0h1m11 0h1m35 0h1m-453 1h1m35 0h1m8 0h4m24 0h1m305 0h1m24 0h1m11 0h1m35 0h1m-453 1h1m35 0h1m11 0h1m23 0h1m307 0h1m23 0h1m11 0h1m35 0h1m-453 1h1m35 0h1m11 0h1m23 0h1m307 0h1m23 0h1m11 0h1m35 0h1m-453 1h1m34 0h1m12 0h1m23 0h1m307 0h1m23 0h1m12 0h1m34 0h1m-453 1h1m34 0h1m11 0h1m24 0h1m307 0h1m24 0h1m11 0h1m34 0h1m-453 1h1m34 0h1m11 0h1m24 0h1m307 0h1m24 0h1m11 0h1m26 0h10m-454 1h1m34 0h1m11 0h1m23 0h1m309 0h1m23 0h1m11 0h1m8 0h18m8 0h1m-453 1h1m34 0h1m11 0h1m23 0h1m309 0h1m23 0h1m5 0h15m26 0h1m-454 1h1m35 0h1m11 0h1m23 0h1m309 0h1m23 0h6m6 0h1m35 0h1m-455 1h1m35 0h1m11 0h1m23 0h1m309 0h1m23 0h1m11 0h1m35 0h1m-455 1h1m35 0h1m11 0h1m23 0h1m309 0h1m23 0h1m11 0h1m35 0h1m-455 1h1m35 0h1m11 0h1m23 0h1m309 0h1m23 0h1m11 0h1m35 0h1m-455 1h1m35 0h1m11 0h1m23 0h1m309 0h1m23 0h1m11 0h1m35 0h1m-455 1h1m35 0h1m11 0h1m23 0h1m309 0h1m23 0h1m11 0h1m35 0h1m-455 1h1m35 0h1m11 0h1m23 0h1m309 0h1m23 0h1m11 0h1m35 0h1m-455 1h1m35 0h13m23 0h1m309 0h1m23 0h1m11 0h1m35 0h1m-455 1h1m35 0h1m11 0h1m23 0h1m309 0h1m23 0h1m11 0h1m35 0h1m-455 1h1m35 0h1m11 0h1m23 0h1m309 0h1m23 0h1m11 0h1m35 0h1m-455 1h1m35 0h1m11 0h1m23 0h1m309 0h1m23 0h1m11 0h1m35 0h1m-455 1h1m35 0h1m10 0h26m309 0h26m10 0h1m35 0h1m-455 1h1m35 0h1m11 0h1m23 0h1m309 0h1m23 0h1m11 0h1m35 0h1m-455 1h1m35 0h1m11 0h1m23 0h1m309 0h1m23 0h1m11 0h1m35 0h1m-455 1h1m35 0h1m11 0h1m23 0h1m309 0h1m23 0h1m11 0h1m35 0h1m-455 1h1m35 0h1m11 0h1m23 0h1m309 0h1m23 0h13m35 0h1m-455 1h1m35 0h1m11 0h1m23 0h1m309 0h1m23 0h1m11 0h1m35 0h1m-455 1h1m35 0h1m11 0h1m23 0h1m309 0h1m23 0h1m11 0h1m35 0h1m-455 1h1m35 0h1m11 0h1m23 0h1m309 0h1m23 0h1m11 0h1m35 0h1m-455 1h1m35 0h1m11 0h1m23 0h1m309 0h1m23 0h1m11 0h1m35 0h1m-455 1h1m35 0h1m11 0h1m23 0h1m309 0h1m23 0h1m11 0h1m35 0h1m-455 1h1m35 0h1m11 0h1m23 0h1m309 0h1m23 0h1m11 0h1m35 0h1m-454 1h1m34 0h1m6 0h6m23 0h1m309 0h1m23 0h1m11 0h1m34 0h1m-453 1h1m25 0h16m5 0h1m23 0h1m309 0h1m23 0h1m11 0h1m34 0h1m-453 1h1m7 0h18m9 0h1m11 0h1m24 0h1m307 0h1m24 0h1m11 0h1m34 0h1m-454 1h9m27 0h1m11 0h1m24 0h1m307 0h1m24 0h1m11 0h1m34 0h1m-453 1h1m34 0h1m12 0h1m23 0h1m307 0h1m23 0h1m12 0h1m34 0h1m-453 1h1m34 0h1m12 0h1m23 0h1m307 0h1m23 0h1m12 0h1m34 0h1m-453 1h1m35 0h1m11 0h1m23 0h1m307 0h1m23 0h1m11 0h1m35 0h1m-453 1h1m35 0h1m11 0h1m23 0h1m307 0h1m23 0h1m11 0h1m35 0h1m-453 1h1m35 0h1m11 0h1m24 0h1m305 0h1m24 0h4m8 0h1m35 0h1m-453 1h1m35 0h1m11 0h1m24 0h1m305 0h1m24 0h1m3 0h5m3 0h1m35 0h1m-453 1h1m35 0h1m12 0h1m23 0h1m305 0h1m23 0h1m9 0h4m35 0h1m-453 1h1m35 0h1m12 0h1m23 0h1m305 0h1m23 0h1m12 0h1m35 0h1m-453 1h1m36 0h1m11 0h1m23 0h1m305 0h1m23 0h1m11 0h1m36 0h1m-453 1h1m36 0h1m11 0h1m23 0h1m305 0h1m23 0h1m11 0h1m36 0h1m-453 1h1m36 0h1m11 0h1m23 0h1m305 0h1m23 0h1m11 0h1m36 0h1m-453 1h1m36 0h1m11 0h1m23 0h1m305 0h1m23 0h1m11 0h1m36 0h1m-452 1h1m35 0h1m5 0h7m23 0h1m305 0h1m23 0h1m11 0h1m35 0h1m-451 1h1m35 0h6m7 0h1m22 0h1m305 0h1m22 0h1m12 0h1m35 0h1m-451 1h1m35 0h1m12 0h1m22 0h1m305 0h1m22 0h1m12 0h1m35 0h1m-451 1h1m36 0h1m11 0h1m23 0h1m303 0h1m23 0h1m11 0h1m36 0h1m-451 1h1m36 0h1m11 0h1m23 0h1m303 0h1m23 0h1m11 0h1m36 0h1m-451 1h1m36 0h1m11 0h1m23 0h1m303 0h1m23 0h1m11 0h1m36 0h1m-451 1h1m36 0h1m11 0h1m23 0h1m303 0h1m23 0h1m11 0h1m36 0h1m-451 1h1m36 0h1m12 0h1m23 0h1m301 0h1m23 0h1m12 0h1m36 0h1m-450 1h1m35 0h1m12 0h1m23 0h1m301 0h1m23 0h4m9 0h1m35 0h1m-449 1h1m36 0h1m11 0h1m24 0h1m299 0h1m24 0h1m3 0h6m2 0h1m36 0h1m-449 1h1m36 0h1m11 0h1m24 0h1m299 0h1m24 0h1m9 0h3m36 0h1m-449 1h1m36 0h1m11 0h1m24 0h1m299 0h1m24 0h1m11 0h1m36 0h1m-449 1h1m36 0h1m11 0h1m24 0h1m299 0h1m24 0h1m11 0h1m36 0h1m-449 1h1m36 0h1m12 0h1m24 0h1m297 0h1m24 0h1m12 0h1m36 0h1m-448 1h1m36 0h1m11 0h1m24 0h1m297 0h1m24 0h1m11 0h1m36 0h1m-447 1h1m36 0h1m9 0h3m24 0h1m297 0h1m24 0h1m11 0h1m36 0h1m-447 1h1m36 0h1m5 0h4m2 0h1m24 0h1m297 0h1m24 0h1m11 0h1m36 0h1m-447 1h1m36 0h1m2 0h3m6 0h1m25 0h1m295 0h1m25 0h1m11 0h1m36 0h1m-446 1h1m36 0h2m10 0h1m24 0h1m295 0h1m24 0h1m11 0h1m36 0h1m-445 1h1m36 0h1m11 0h1m24 0h1m295 0h1m24 0h1m11 0h1m36 0h1m-445 1h1m36 0h1m11 0h1m25 0h1m293 0h1m25 0h1m11 0h1m36 0h1m-445 1h1m36 0h1m12 0h1m24 0h1m293 0h1m24 0h1m12 0h1m36 0h1m-444 1h1m36 0h1m11 0h1m24 0h1m293 0h1m24 0h1m11 0h1m36 0h1m-443 1h1m36 0h1m11 0h1m24 0h1m293 0h1m24 0h3m9 0h1m36 0h1m-443 1h1m36 0h1m12 0h1m24 0h1m291 0h1m24 0h1m3 0h3m6 0h1m36 0h1m-443 1h1m36 0h1m12 0h1m24 0h1m291 0h1m24 0h1m6 0h4m2 0h1m36 0h1m-442 1h1m35 0h1m12 0h1m24 0h1m291 0h1m24 0h1m10 0h3m35 0h1m-441 1h1m36 0h1m12 0h1m23 0h1m292 0h1m22 0h1m12 0h1m36 0h1m-441 1h1m36 0h1m12 0h1m24 0h1m289 0h1m2 0h3m19 0h1m12 0h1m36 0h1m-441 1h1m36 0h1m12 0h1m24 0h1m289 0h1m5 0h2m17 0h1m12 0h1m36 0h1m-440 1h1m35 0h1m11 0h3m24 0h1m287 0h1m8 0h3m13 0h1m13 0h1m35 0h1m-439 1h1m36 0h1m8 0h2m2 0h1m24 0h1m287 0h1m11 0h3m10 0h1m12 0h1m36 0h1m-439 1h1m36 0h1m5 0h3m4 0h1m24 0h1m287 0h1m14 0h3m7 0h1m12 0h1m36 0h1m-439 1h1m37 0h1m2 0h2m8 0h1m24 0h1m251 0h1m33 0h1m18 0h2m4 0h1m12 0h1m37 0h1m-438 1h1m36 0h3m10 0h1m24 0h1m252 0h2m31 0h1m20 0h3m1 0h1m12 0h1m36 0h1m-437 1h1m37 0h1m11 0h1m25 0h1m253 0h2m28 0h1m24 0h2m11 0h1m37 0h1m-437 1h1m37 0h1m12 0h1m24 0h1m255 0h2m26 0h1m24 0h1m12 0h1m37 0h1m-436 1h1m37 0h1m11 0h1m25 0h1m256 0h2m23 0h1m25 0h1m11 0h1m37 0h1m-435 1h1m37 0h1m11 0h1m25 0h1m281 0h1m25 0h2m10 0h1m37 0h1m-435 1h1m37 0h1m12 0h1m25 0h1m279 0h1m25 0h1m2 0h2m8 0h1m37 0h1m-435 1h1m38 0h1m11 0h1m25 0h1m279 0h1m25 0h1m4 0h3m4 0h1m38 0h1m-434 1h1m37 0h1m12 0h1m25 0h1m277 0h1m25 0h1m8 0h2m2 0h1m37 0h1m-433 1h1m37 0h1m12 0h1m25 0h1m277 0h1m25 0h1m10 0h3m37 0h1m-433 1h1m38 0h1m12 0h1m25 0h1m275 0h1m25 0h1m12 0h1m38 0h1m-433 1h1m38 0h1m12 0h1m25 0h1m275 0h1m25 0h1m12 0h1m38 0h1m-432 1h1m38 0h1m9 0h2m1 0h1m25 0h1m273 0h1m25 0h1m12 0h1m38 0h1m-431 1h1m38 0h1m7 0h2m3 0h1m25 0h1m273 0h1m25 0h1m12 0h1m38 0h1m-430 1h1m38 0h1m4 0h2m5 0h1m26 0h1m271 0h1m26 0h1m11 0h1m38 0h1m-429 1h1m38 0h1m2 0h2m8 0h1m26 0h1m269 0h1m26 0h1m12 0h1m38 0h1m-428 1h1m38 0h2m10 0h1m26 0h1m36 0h1m232 0h1m26 0h1m11 0h1m38 0h1m-427 1h1m38 0h1m12 0h1m26 0h1m33 0h2m232 0h1m26 0h1m12 0h1m38 0h1m-427 1h1m38 0h1m12 0h1m27 0h1m31 0h1m233 0h1m27 0h1m12 0h1m38 0h1m111 0h4m-541 1h1m38 0h1m12 0h1m26 0h1m30 0h1m234 0h1m26 0h1m12 0h1m38 0h1m112 0h1m3 0h1m-542 1h1m38 0h1m12 0h1m27 0h1m27 0h2m234 0h1m27 0h3m10 0h1m38 0h1m112 0h1m3 0h1m-541 1h1m37 0h1m13 0h1m26 0h1m26 0h1m236 0h1m26 0h1m3 0h2m8 0h1m37 0h1m113 0h4m-540 1h1m38 0h1m12 0h1m27 0h1m24 0h1m236 0h1m27 0h1m5 0h3m4 0h1m38 0h1m113 0h1m1 0h1m-539 1h1m38 0h1m13 0h1m27 0h1m259 0h1m27 0h1m9 0h2m2 0h1m38 0h1m113 0h1m2 0h1m-539 1h1m38 0h1m12 0h1m28 0h1m257 0h1m28 0h1m11 0h2m38 0h1m114 0h1m3 0h1m-540 1h1m38 0h1m13 0h1m27 0h1m257 0h1m27 0h1m13 0h2m37 0h1m-421 1h1m39 0h1m11 0h2m28 0h1m255 0h1m28 0h1m12 0h1m2 0h2m35 0h1m-420 1h1m38 0h1m9 0h2m2 0h1m28 0h1m253 0h1m28 0h1m13 0h1m4 0h2m32 0h1m-419 1h1m39 0h1m6 0h2m4 0h1m28 0h1m253 0h1m28 0h1m12 0h1m7 0h2m30 0h1m-418 1h1m38 0h1m4 0h2m7 0h1m28 0h1m251 0h1m28 0h1m13 0h1m9 0h2m27 0h1m-417 1h1m39 0h1m1 0h2m10 0h1m27 0h1m251 0h1m27 0h1m13 0h1m12 0h2m25 0h1m-416 1h1m38 0h2m12 0h1m28 0h1m249 0h1m28 0h1m13 0h1m14 0h2m22 0h1m-415 1h1m39 0h1m13 0h1m276 0h1m28 0h1m13 0h1m17 0h2m20 0h1m-415 1h1m40 0h1m12 0h1m27 0h1m1 0h1m245 0h1m29 0h1m12 0h1m20 0h2m18 0h1m-414 1h1m39 0h1m13 0h1m24 0h2m2 0h1m245 0h1m28 0h1m1 0h2m10 0h1m22 0h2m15 0h1m-413 1h1m40 0h1m12 0h1m23 0h1m5 0h1m243 0h1m29 0h1m3 0h2m7 0h1m25 0h2m13 0h1m-412 1h1m40 0h1m12 0h1m21 0h1m7 0h1m241 0h1m29 0h1m6 0h1m5 0h1m28 0h2m10 0h1m-411 1h1m40 0h1m13 0h1m18 0h2m9 0h1m239 0h1m29 0h1m8 0h2m3 0h1m30 0h2m8 0h1m-410 1h1m40 0h1m12 0h1m17 0h1m11 0h1m239 0h1m29 0h1m10 0h3m33 0h2m5 0h1m-409 1h1m40 0h1m12 0h2m15 0h1m13 0h1m237 0h1m29 0h1m13 0h1m35 0h2m3 0h1m-408 1h1m40 0h1m9 0h2m2 0h1m12 0h2m15 0h1m43 0h1m191 0h1m29 0h1m13 0h1m38 0h3m-407 1h1m40 0h1m8 0h1m5 0h1m10 0h1m18 0h1m40 0h2m191 0h1m29 0h1m14 0h1m40 0h2m-407 1h1m40 0h1m5 0h2m6 0h1m9 0h1m19 0h1m38 0h2m193 0h1m29 0h1m13 0h1m40 0h1m-405 1h1m40 0h1m4 0h1m9 0h1m6 0h2m21 0h1m35 0h2m194 0h1m29 0h1m14 0h1m40 0h1m-404 1h1m40 0h1m1 0h2m10 0h1m5 0h1m24 0h1m32 0h2m195 0h1m30 0h1m13 0h1m40 0h1m-403 1h1m41 0h1m13 0h1m3 0h1m26 0h1m227 0h2m29 0h1m13 0h1m41 0h1m-402 1h1m39 0h2m14 0h3m28 0h1m225 0h1m2 0h1m27 0h2m13 0h1m40 0h1m-401 1h1m37 0h2m2 0h1m13 0h2m30 0h1m223 0h1m4 0h1m25 0h1m2 0h1m11 0h1m41 0h1m-400 1h1m35 0h1m5 0h1m13 0h1m31 0h1m221 0h1m6 0h1m24 0h1m3 0h1m9 0h1m41 0h1m-399 1h1m33 0h2m7 0h1m13 0h1m31 0h1m219 0h1m8 0h2m21 0h1m5 0h1m7 0h1m42 0h1m-398 1h1m31 0h1m9 0h1m14 0h1m31 0h1m49 0h3m165 0h1m11 0h1m19 0h1m7 0h2m5 0h1m41 0h1m-397 1h1m29 0h2m11 0h1m14 0h1m31 0h1m46 0h2m2 0h1m164 0h1m13 0h1m17 0h1m10 0h1m3 0h1m42 0h1m-396 1h1m27 0h1m14 0h1m13 0h2m31 0h1m43 0h2m5 0h1m162 0h1m15 0h1m15 0h1m12 0h1m1 0h1m42 0h1m-395 1h1m25 0h2m16 0h1m11 0h1m1 0h1m32 0h1m40 0h2m7 0h1m161 0h1m17 0h1m14 0h1m13 0h1m43 0h1m-394 1h1m23 0h1m19 0h1m8 0h2m3 0h1m32 0h1m37 0h2m9 0h1m160 0h1m19 0h1m12 0h1m13 0h1m43 0h1m-393 1h1m21 0h2m20 0h1m7 0h1m6 0h1m32 0h1m35 0h1m12 0h1m158 0h1m21 0h1m10 0h1m14 0h1m43 0h1m-392 1h1m19 0h1m23 0h1m5 0h1m8 0h1m32 0h1m47 0h1m157 0h1m23 0h1m8 0h1m14 0h1m43 0h1m-390 1h1m16 0h2m25 0h1m2 0h2m10 0h1m32 0h2m45 0h1m155 0h2m25 0h2m5 0h1m14 0h1m43 0h1m-388 1h1m14 0h1m28 0h2m12 0h1m34 0h1m44 0h1m154 0h1m29 0h1m4 0h1m13 0h1m43 0h1m-387 1h1m12 0h2m29 0h1m14 0h1m34 0h1m44 0h1m16 0h1m135 0h1m31 0h1m2 0h2m13 0h1m43 0h1m-386 1h1m10 0h1m32 0h1m14 0h1m34 0h1m43 0h1m16 0h1m133 0h2m33 0h2m2 0h1m11 0h1m43 0h1m-384 1h1m7 0h2m34 0h1m14 0h1m34 0h2m41 0h1m16 0h1m132 0h1m35 0h2m3 0h1m9 0h1m43 0h1m-383 1h1m6 0h1m36 0h1m15 0h1m35 0h1m41 0h1m15 0h1m131 0h1m35 0h1m6 0h1m8 0h1m43 0h1m-382 1h1m3 0h2m38 0h1m15 0h1m35 0h1m40 0h1m15 0h1m15 0h1m113 0h2m35 0h1m8 0h2m5 0h1m43 0h1m-381 1h1m2 0h1m41 0h1m14 0h2m35 0h2m55 0h1m14 0h1m28 0h2m82 0h1m36 0h1m11 0h1m3 0h1m44 0h1m-380 1h2m43 0h1m12 0h1m2 0h1m36 0h1m54 0h1m14 0h1m27 0h1m2 0h1m80 0h1m36 0h1m13 0h1m1 0h1m44 0h1m-380 1h2m44 0h1m11 0h1m4 0h1m36 0h2m52 0h1m15 0h1m25 0h1m4 0h1m77 0h2m36 0h1m15 0h2m44 0h1m-378 1h1m44 0h1m8 0h2m6 0h1m37 0h2m50 0h1m15 0h1m24 0h1m5 0h1m75 0h2m37 0h1m16 0h1m44 0h1m-376 1h1m44 0h1m6 0h1m9 0h1m38 0h1m49 0h1m15 0h1m23 0h1m7 0h1m73 0h1m38 0h1m16 0h1m44 0h1m-375 1h1m45 0h1m4 0h1m11 0h1m38 0h1m48 0h1m15 0h1m22 0h1m9 0h1m70 0h2m38 0h1m16 0h1m45 0h1m-374 1h1m45 0h1m2 0h1m13 0h1m38 0h2m62 0h1m22 0h1m10 0h1m68 0h1m39 0h2m15 0h1m45 0h1m-372 1h1m45 0h2m15 0h1m39 0h1m62 0h1m20 0h1m11 0h1m67 0h1m39 0h1m2 0h1m13 0h1m45 0h1m-371 1h1m46 0h1m16 0h1m39 0h2m60 0h1m19 0h1m13 0h1m64 0h2m39 0h1m4 0h1m11 0h1m46 0h1m-370 1h1m46 0h1m16 0h1m40 0h2m58 0h1m18 0h1m15 0h1m61 0h2m40 0h1m6 0h1m9 0h1m46 0h1m-368 1h1m46 0h1m16 0h1m41 0h1m75 0h1m77 0h1m41 0h1m8 0h1m7 0h1m46 0h1m-367 1h1m47 0h1m15 0h3m40 0h1m150 0h2m40 0h2m9 0h1m6 0h1m47 0h1m-366 1h1m47 0h1m13 0h1m3 0h1m40 0h2m147 0h1m41 0h1m12 0h1m4 0h1m47 0h1m-364 1h1m47 0h1m11 0h1m5 0h1m41 0h2m143 0h2m41 0h1m14 0h1m2 0h1m47 0h1m-362 1h1m47 0h1m9 0h1m7 0h1m42 0h2m139 0h2m42 0h1m16 0h2m47 0h1m-361 1h1m48 0h1m7 0h1m9 0h2m42 0h2m135 0h2m42 0h2m17 0h1m48 0h1m-360 1h1m48 0h1m6 0h1m11 0h1m43 0h2m131 0h2m43 0h2m17 0h1m48 0h1m-358 1h1m48 0h1m4 0h1m13 0h1m44 0h2m127 0h2m44 0h1m2 0h1m15 0h1m48 0h1m-356 1h1m48 0h1m2 0h1m15 0h1m45 0h2m123 0h2m45 0h1m4 0h1m13 0h1m48 0h1m-354 1h1m48 0h2m17 0h2m45 0h2m119 0h2m45 0h2m5 0h1m12 0h1m48 0h1m-353 1h1m49 0h2m18 0h1m46 0h3m113 0h3m46 0h1m8 0h1m9 0h2m49 0h1m-352 1h1m50 0h1m17 0h2m48 0h2m109 0h2m48 0h1m10 0h1m7 0h1m50 0h1m-350 1h1m50 0h1m15 0h1m2 0h2m48 0h4m101 0h4m1 0h1m46 0h2m12 0h1m5 0h1m50 0h1m-348 1h1m50 0h2m12 0h1m5 0h2m50 0h4m93 0h4m6 0h1m43 0h2m14 0h1m3 0h2m50 0h1m-346 1h1m51 0h1m10 0h1m8 0h1m53 0h3m87 0h3m10 0h1m42 0h1m17 0h1m1 0h1m51 0h1m-344 1h1m51 0h2m7 0h1m10 0h1m55 0h4m79 0h4m13 0h1m41 0h1m18 0h2m51 0h1m-343 1h1m53 0h1m6 0h1m11 0h2m57 0h3m72 0h4m18 0h1m38 0h3m17 0h1m53 0h1m-342 1h1m53 0h1m4 0h1m14 0h1m59 0h3m67 0h2m22 0h1m37 0h1m3 0h1m15 0h1m53 0h1m-340 1h1m53 0h2m1 0h1m16 0h1m58 0h1m2 0h4m59 0h4m24 0h1m35 0h2m4 0h1m13 0h2m53 0h1m-338 1h1m54 0h1m18 0h2m56 0h1m6 0h11m37 0h11m29 0h1m32 0h2m7 0h1m11 0h1m54 0h1m-336 1h1m54 0h1m17 0h1m1 0h2m53 0h1m18 0h5m26 0h6m40 0h1m30 0h2m10 0h1m9 0h1m54 0h1m-334 1h1m54 0h1m16 0h1m3 0h2m51 0h1m23 0h26m46 0h1m29 0h1m12 0h1m8 0h1m54 0h1m-332 1h1m54 0h2m13 0h1m6 0h2m49 0h1m96 0h1m26 0h2m14 0h1m5 0h2m54 0h1m-330 1h1m55 0h1m12 0h1m8 0h2m47 0h1m96 0h1m24 0h2m17 0h1m3 0h1m55 0h1m-328 1h1m55 0h1m10 0h1m11 0h1m46 0h1m97 0h1m21 0h2m1 0h1m17 0h1m2 0h1m55 0h1m-326 1h1m55 0h2m7 0h1m13 0h2m43 0h1m98 0h1m19 0h2m4 0h1m17 0h2m55 0h1m-324 1h1m56 0h1m6 0h1m15 0h2m41 0h1m98 0h1m17 0h2m6 0h1m16 0h1m1 0h1m54 0h1m-322 1h1m56 0h2m3 0h1m17 0h4m38 0h1m99 0h1m14 0h2m9 0h1m13 0h2m3 0h1m52 0h1m-320 1h1m57 0h1m2 0h1m17 0h1m3 0h2m36 0h1m99 0h1m12 0h2m11 0h1m11 0h2m5 0h1m51 0h1m-318 1h1m57 0h2m17 0h1m6 0h2m33 0h1m100 0h1m9 0h3m14 0h1m8 0h2m8 0h1m49 0h1m-316 1h1m58 0h2m15 0h1m8 0h2m31 0h1m101 0h1m6 0h2m17 0h1m6 0h2m11 0h1m47 0h1m-314 1h1m59 0h2m12 0h1m11 0h2m29 0h1m101 0h1m4 0h2m2 0h1m17 0h1m4 0h1m13 0h1m46 0h1m-312 1h1m60 0h2m10 0h1m13 0h3m26 0h1m101 0h1m2 0h2m4 0h1m17 0h1m2 0h2m15 0h1m44 0h1m-310 1h1m61 0h1m9 0h1m16 0h3m23 0h1m101 0h3m7 0h1m17 0h2m18 0h1m42 0h1m-308 1h1m61 0h2m6 0h1m17 0h1m2 0h3m19 0h1m99 0h3m1 0h1m8 0h1m16 0h2m19 0h1m41 0h1m-306 1h1m62 0h1m5 0h1m16 0h1m6 0h3m16 0h1m96 0h3m14 0h1m13 0h2m22 0h1m39 0h1m-304 1h1m62 0h2m2 0h1m17 0h1m9 0h3m13 0h1m93 0h4m16 0h1m11 0h2m25 0h1m37 0h1m-302 1h1m63 0h3m16 0h1m13 0h3m10 0h1m90 0h3m3 0h1m17 0h1m8 0h2m27 0h1m35 0h2m-300 1h2m62 0h4m14 0h1m16 0h3m7 0h1m87 0h3m7 0h1m16 0h1m6 0h2m30 0h1m33 0h1m-296 1h1m60 0h1m4 0h3m11 0h1m16 0h1m2 0h3m3 0h1m85 0h3m10 0h1m17 0h1m2 0h3m33 0h1m31 0h1m-294 1h1m59 0h1m7 0h2m8 0h1m17 0h1m5 0h4m80 0h5m14 0h1m16 0h3m36 0h1m30 0h1m-292 1h1m57 0h1m10 0h2m6 0h1m16 0h1m9 0h7m68 0h6m2 0h1m16 0h1m14 0h2m40 0h1m28 0h1m-290 1h1m56 0h1m12 0h2m3 0h1m17 0h1m15 0h8m55 0h6m8 0h1m16 0h1m12 0h2m43 0h1m25 0h2m-288 1h2m53 0h1m15 0h4m17 0h1m15 0h1m7 0h6m42 0h7m15 0h1m16 0h1m9 0h2m45 0h1m24 0h1m-284 1h1m52 0h1m18 0h3m14 0h1m16 0h1m13 0h6m30 0h6m6 0h1m15 0h1m16 0h1m6 0h3m48 0h1m22 0h1m-282 1h1m50 0h1m22 0h2m12 0h1m15 0h1m16 0h1m3 0h30m12 0h1m15 0h1m17 0h1m2 0h3m52 0h1m20 0h1m-280 1h2m48 0h1m24 0h2m10 0h1m15 0h1m16 0h1m14 0h1m14 0h1m15 0h1m16 0h1m16 0h3m55 0h1m18 0h2m-277 1h1m46 0h1m27 0h2m8 0h1m15 0h1m16 0h1m14 0h1m14 0h1m15 0h1m16 0h1m15 0h2m58 0h1m16 0h1m-274 1h1m45 0h1m29 0h3m4 0h1m16 0h1m15 0h1m15 0h1m14 0h1m15 0h1m16 0h1m13 0h2m61 0h1m14 0h1m-272 1h2m42 0h1m33 0h5m16 0h1m15 0h1m15 0h1m14 0h1m16 0h1m15 0h1m9 0h4m63 0h1m12 0h2m-269 1h1m41 0h1m37 0h4m13 0h1m15 0h1m15 0h1m14 0h1m16 0h1m16 0h1m3 0h5m68 0h1m10 0h1m-266 1h2m38 0h1m42 0h5m7 0h1m16 0h1m15 0h1m15 0h1m15 0h1m16 0h4m74 0h1m7 0h2m-263 1h1m37 0h1m47 0h4m3 0h1m16 0h1m15 0h1m15 0h1m15 0h1m12 0h4m78 0h1m6 0h1m-260 1h2m34 0h1m52 0h4m15 0h1m16 0h1m15 0h1m15 0h1m7 0h5m83 0h1m3 0h2m-257 1h1m33 0h1m56 0h7m8 0h1m16 0h1m15 0h1m15 0h1m1 0h6m89 0h1m1 0h1m-254 1h2m30 0h1m64 0h6m2 0h1m16 0h1m15 0h1m10 0h7m95 0h2m-251 1h2m28 0h1m70 0h7m12 0h1m15 0h1m4 0h6m100 0h2m1 0h1m-249 1h2m25 0h1m78 0h33m104 0h2m-243 1h1m24 0h1m106 0h1m107 0h1m-240 1h2m21 0h1m107 0h1m105 0h2m-237 1h1m20 0h1m107 0h1m104 0h1m-234 1h1m18 0h1m108 0h1m103 0h1m-232 1h2m16 0h1m108 0h1m101 0h2m-229 1h2m13 0h1m109 0h1m99 0h2m-225 1h2m11 0h1m109 0h1m97 0h2m-221 1h2m8 0h1m110 0h1m95 0h2m-217 1h2m6 0h1m111 0h1m92 0h2m-213 1h2m3 0h1m112 0h1m90 0h2m-209 1h2m1 0h1m112 0h1m88 0h2m-205 1h2m112 0h1m86 0h2m-203 1h1m1 0h2m110 0h1m84 0h2m-197 1h2m108 0h1m82 0h2m-193 1h2m106 0h1m80 0h2m-189 1h3m103 0h1m77 0h3m-184 1h2m101 0h1m75 0h2m-179 1h2m99 0h1m73 0h2m-175 1h3m96 0h1m70 0h3m-170 1h2m94 0h1m67 0h3m-165 1h3m91 0h1m65 0h2m-159 1h3m88 0h1m62 0h3m-154 1h2m86 0h1m60 0h2m-149 1h2m84 0h1m58 0h2m-145 1h3m81 0h1m54 0h4m-140 1h4m77 0h1m50 0h4m-132 1h4m74 0h1m46 0h3m-124 1h4m70 0h1m42 0h4m-117 1h3m67 0h1m38 0h4m-110 1h4m63 0h1m34 0h4m-102 1h4m59 0h1m30 0h4m-94 1h4m55 0h1m26 0h4m-86 1h6m49 0h1m20 0h6m-76 1h8m41 0h1m12 0h8m-62 1h16m22 0h16m-38 1h22m3 0h1"/>
<path stroke="#ff0" d="M0 .5m272 25h1m3 0h1m3 0h1m-8 1h1m1 0h1m1 0h1m1 0h1m1 0h1m-8 1h1m3 0h1m3 0h1m3 0h1m-13 1h1m3 0h1m3 0h1m2 0h2m-89 1h3m73 0h1m3 0h1m3 0h1m1 0h1m1 0h1m-90 1h1m3 0h1m72 0h1m3 0h1m3 0h2m2 0h1m-90 1h1m3 0h1m72 0h1m3 0h1m3 0h1m3 0h1m-90 1h1m3 0h1m72 0h1m3 0h1m3 0h1m3 0h1m-89 1h3m73 0h1m3 0h1m3 0h1m3 0h1m-88 1h1m74 0h1m3 0h1m3 0h1m3 0h1m-90 1h5m72 0h1m3 0h1m3 0h1m3 0h1m-88 1h1m74 0h1m3 0h1m3 0h1m3 0h1m-88 1h1m74 0h1m3 0h1m3 0h1m3 0h1m-13 1h1m3 0h1m4 0h1m1 0h1m-12 1h1m3 0h1m5 0h1m-2 1h1m1 0h1m-4 1h1m3 0h1m-127 45h1m-3 1h5m-3 1h1m-1 1h1m1 0h2m-4 1h2m2 0h1m-5 1h1m3 0h1m-5 1h1m2 0h1m-4 1h1m2 0h1m0 1h1m-25 3h1m6 0h3m-11 1h2m5 0h1m3 0h1m-13 1h1m1 0h1m5 0h1m3 0h1m-11 1h1m5 0h1m3 0h1m-11 1h1m5 0h1m3 0h1m-11 1h1m5 0h1m3 0h1m-11 1h1m5 0h1m3 0h1m-11 1h1m5 0h1m3 0h1m-13 1h5m4 0h3m476 41h1m2 0h1m2 0h1m-140 1h3m12 0h1m7 0h1m108 0h2m1 0h2m1 0h1m-140 1h1m3 0h1m11 0h1m7 0h1m108 0h1m1 0h2m1 0h2m-136 1h1m1 0h4m3 0h4m7 0h4m3 0h3m2 0h1m3 0h1m2 0h4m2 0h3m4 0h1m75 0h1m2 0h1m2 0h1m-136 1h1m2 0h1m3 0h1m1 0h1m3 0h1m7 0h1m3 0h1m1 0h1m3 0h1m1 0h1m3 0h1m1 0h1m5 0h1m3 0h1m-51 1h1m3 0h1m3 0h1m1 0h1m3 0h1m7 0h1m3 0h1m1 0h1m3 0h1m1 0h1m3 0h1m2 0h3m2 0h5m3 0h1m77 0h1m2 0h1m2 0h1m-140 1h1m4 0h1m3 0h1m1 0h1m3 0h1m7 0h1m3 0h1m1 0h1m3 0h1m1 0h1m2 0h2m5 0h1m1 0h1m84 0h2m1 0h2m1 0h1m-140 1h5m1 0h1m3 0h1m2 0h4m7 0h1m3 0h1m2 0h3m3 0h2m1 0h1m1 0h4m3 0h4m80 0h1m1 0h2m1 0h2m-8 1h1m2 0h1m2 0h1m-71 23h1m3 0h1m2 0h1m2 0h5m14 0h3m5 0h2m-40 1h2m3 0h1m2 0h1m4 0h1m15 0h1m3 0h1m3 0h1m-37 1h1m3 0h1m2 0h1m4 0h1m4 0h3m2 0h1m3 0h1m1 0h1m2 0h2m2 0h1m-36 1h1m3 0h5m3 0h1m3 0h1m3 0h1m1 0h1m3 0h1m1 0h1m1 0h1m1 0h1m1 0h4m-38 1h1m6 0h1m4 0h1m3 0h1m3 0h1m1 0h1m3 0h1m1 0h2m2 0h1m1 0h1m3 0h1m-39 1h1m6 0h1m4 0h1m3 0h1m2 0h2m1 0h1m2 0h2m1 0h1m3 0h1m1 0h1m3 0h1m-40 1h3m5 0h1m4 0h1m4 0h2m1 0h1m2 0h2m1 0h1m2 0h3m3 0h3m27 3h1m6 0h1m-138 1h2m3 0h1m3 0h1m11 0h1m109 0h6m-138 1h1m5 0h1m3 0h1m11 0h1m110 0h1m2 0h1m-138 1h1m4 0h5m1 0h4m8 0h4m3 0h3m2 0h1m3 0h1m2 0h4m2 0h3m4 0h1m78 0h1m2 0h1m-139 1h4m4 0h1m3 0h1m3 0h1m7 0h1m3 0h1m1 0h1m3 0h1m1 0h1m3 0h1m1 0h1m5 0h1m3 0h1m82 0h1m2 0h1m-139 1h1m3 0h1m3 0h1m3 0h1m3 0h1m7 0h1m3 0h1m1 0h1m3 0h1m1 0h1m3 0h1m2 0h3m2 0h5m3 0h1m78 0h1m2 0h1m-139 1h1m3 0h1m3 0h1m3 0h1m3 0h1m7 0h1m3 0h1m1 0h1m3 0h1m1 0h1m2 0h2m5 0h1m1 0h1m86 0h1m2 0h1m-138 1h3m5 0h1m2 0h1m3 0h1m7 0h1m3 0h1m2 0h3m3 0h2m1 0h1m1 0h4m3 0h4m81 0h6m-7 1h1m6 0h1m-229 15h3m-4 1h1m3 0h1m-5 1h1m3 0h1m-5 1h1m3 0h1m-4 1h3m-2 1h1m-3 1h5m-3 1h1m-1 1h1m154 0h1m4 0h3m2 0h1m3 0h1m3 0h1m9 0h5m1 0h1m2 0h1m-39 1h2m3 0h1m3 0h1m1 0h1m3 0h1m13 0h1m5 0h1m2 0h1m-38 1h1m7 0h1m1 0h1m3 0h1m3 0h1m3 0h4m2 0h1m5 0h1m2 0h1m-38 1h1m6 0h1m3 0h1m1 0h1m4 0h1m3 0h1m3 0h1m1 0h4m2 0h5m-39 1h1m5 0h1m4 0h1m1 0h1m4 0h1m3 0h1m9 0h1m4 0h1m-38 1h1m4 0h1m6 0h1m5 0h1m3 0h1m5 0h1m3 0h1m4 0h1m-39 1h3m2 0h5m3 0h1m5 0h1m3 0h1m6 0h3m5 0h1m-110 4h1m4 0h3m4 0h1m3 0h1m11 0h1m-30 1h2m3 0h1m3 0h1m3 0h1m3 0h1m11 0h1m110 0h3m-142 1h1m3 0h1m2 0h2m1 0h5m1 0h4m8 0h4m3 0h3m2 0h1m3 0h1m2 0h4m2 0h3m4 0h1m77 0h1m3 0h1m-143 1h1m3 0h1m1 0h1m1 0h1m3 0h1m3 0h1m3 0h1m7 0h1m3 0h1m1 0h1m3 0h1m1 0h1m3 0h1m1 0h1m5 0h1m3 0h1m81 0h1m3 0h1m-143 1h1m3 0h2m2 0h1m3 0h1m3 0h1m3 0h1m7 0h1m3 0h1m1 0h1m3 0h1m1 0h1m3 0h1m2 0h3m2 0h5m3 0h1m75 0h4m1 0h4m-145 1h1m3 0h1m3 0h1m3 0h1m3 0h1m3 0h1m7 0h1m3 0h1m1 0h1m3 0h1m1 0h1m2 0h2m5 0h1m1 0h1m-54 1h3m3 0h3m5 0h1m2 0h1m3 0h1m7 0h1m3 0h1m2 0h3m3 0h2m1 0h1m1 0h4m3 0h4m79 0h9m-230 31h3m-4 1h1m3 0h1m-5 1h1m-1 1h1m-1 1h4m-4 1h1m3 0h1m-5 1h1m3 0h1m-5 1h1m3 0h1m-4 1h3m-374 3h1m-3 1h5m-3 1h1m-1 1h1m1 0h2m-4 1h2m2 0h1m-5 1h1m3 0h1m-5 1h1m2 0h1m-4 1h1m2 0h1m0 1h1m590 13h3m-144 1h1m3 0h1m135 0h1m3 0h1m-597 1h1m5 0h1m3 0h3m439 0h1m3 0h1m135 0h1m3 0h1m-598 1h2m5 0h2m1 0h1m3 0h1m438 0h1m3 0h1m2 0h3m2 0h4m2 0h1m3 0h1m3 0h1m113 0h1m3 0h1m-599 1h1m1 0h1m5 0h1m1 0h1m5 0h1m438 0h1m1 0h1m2 0h1m3 0h1m1 0h1m3 0h1m1 0h1m3 0h1m118 0h3m-596 1h1m4 0h1m1 0h1m6 0h1m438 0h1m1 0h1m2 0h5m1 0h1m3 0h1m1 0h1m3 0h1m3 0h1m115 0h1m-595 1h1m3 0h1m3 0h1m5 0h1m439 0h1m3 0h1m5 0h1m3 0h1m1 0h1m2 0h2m117 0h5m-597 1h1m3 0h1m4 0h1m3 0h1m440 0h1m4 0h4m1 0h1m3 0h1m2 0h2m1 0h1m119 0h1m-595 1h1m3 0h1m5 0h3m581 0h1m-595 1h1m3 0h1m6 0h1m-12 1h1m3 0h1m7 0h1m-12 1h1m1 0h1m9 0h1m-12 1h1m11 0h1m-13 1h1m11 0h1m-13 1h1m11 0h1m-13 1h1m11 0h1m-13 1h1m11 0h1m-2 1h1m-2 1h1m580 12h1m-141 1h3m10 0h1m124 0h5m-144 1h1m3 0h1m9 0h1m126 0h1m-142 1h1m6 0h3m2 0h5m1 0h1m3 0h1m3 0h1m114 0h1m1 0h2m-144 1h3m2 0h1m3 0h1m3 0h1m3 0h1m3 0h1m118 0h2m2 0h1m-142 1h1m1 0h1m3 0h1m3 0h1m3 0h1m3 0h1m3 0h1m114 0h1m3 0h1m-146 1h1m3 0h1m1 0h1m2 0h2m3 0h1m3 0h1m2 0h2m118 0h1m2 0h1m-144 1h3m3 0h2m1 0h1m4 0h1m3 0h2m1 0h1m118 0h1m2 0h1m0 1h1m-109 3h3m2 0h5m1 0h5m14 0h3m3 0h3m-40 1h1m3 0h1m5 0h1m3 0h1m15 0h1m3 0h1m1 0h1m3 0h1m-37 1h1m4 0h1m4 0h1m4 0h3m2 0h1m3 0h1m5 0h1m5 0h1m-38 1h1m4 0h1m5 0h1m3 0h1m3 0h1m1 0h1m3 0h1m3 0h2m5 0h1m-376 1h1m337 0h1m4 0h1m6 0h1m3 0h1m3 0h1m1 0h1m3 0h1m5 0h1m3 0h1m-38 1h1m4 0h1m7 0h1m3 0h1m2 0h2m1 0h1m2 0h2m1 0h1m3 0h1m2 0h1m-38 1h5m1 0h1m7 0h1m4 0h2m1 0h1m2 0h2m1 0h1m2 0h3m2 0h5m-360 9h1m-2 1h3m-2 1h1m-81 3h3m121 0h1m-126 1h1m3 0h1m119 0h3m-127 1h1m3 0h1m120 0h1m-126 1h1m3 0h1m-4 1h3m-2 1h1m-3 1h5m-3 1h1m-1 1h1m73 4h5m-6 1h1m5 0h1m186 0h1m11 0h1m-207 1h1m7 0h1m186 0h1m9 0h1m-206 1h1m7 0h1m186 0h1m9 0h1m-206 1h1m7 0h1m187 0h2m5 0h2m-205 1h1m7 0h1m189 0h5m-253 1h3m47 0h1m7 0h1m31 0h1m155 0h2m5 0h2m-256 1h1m3 0h1m47 0h1m5 0h1m32 0h1m154 0h1m9 0h1m-253 1h1m48 0h5m29 0h9m150 0h1m9 0h1m-253 1h1m50 0h1m35 0h1m153 0h1m11 0h1m-255 1h1m51 0h1m35 0h1m153 0h1m11 0h1m-256 1h1m52 0h1m35 0h1m153 0h1m11 0h1m-257 1h1m49 0h9m31 0h1m3 0h3m147 0h1m11 0h1m-258 1h1m54 0h1m35 0h1m2 0h1m3 0h1m146 0h1m11 0h1m-258 1h5m50 0h1m35 0h3m5 0h1m146 0h1m9 0h1m-202 1h1m35 0h1m7 0h1m146 0h1m9 0h1m-202 1h1m35 0h1m7 0h1m147 0h2m5 0h2m-165 1h1m6 0h1m150 0h5m-163 1h1m5 0h1m-7 1h1m5 0h1m-7 1h1m5 0h1m0 1h1m0 1h1m131 2h3m-4 1h1m3 0h1m-5 1h1m3 0h1m-5 1h1m3 0h1m-4 1h3m-2 1h1m-3 1h5m-3 1h1m-1 1h1"/>
<path stroke="#0f0" d="M0 .5m170 36h5m130 0h1m3 0h1m-141 1h1m5 0h1m130 0h3m-141 1h1m7 0h1m128 0h1m3 0h1m-142 1h1m7 0h1m128 0h1m3 0h1m-142 1h1m7 0h1m128 0h1m3 0h1m-141 1h1m5 0h1m130 0h3m-145 1h7m3 0h7m126 0h1m-3 1h5m-3 1h1m-144 2h17m-79 89h1m5 0h1m-6 1h1m3 0h1m-5 1h1m1 0h1m1 0h1m-5 1h5m-5 1h1m1 0h1m1 0h1m-6 1h1m2 0h1m2 0h1m-5 1h3m-3 1h1m1 0h1m-2 1h1m459 4h3m4 0h1m15 0h5m1 0h1m2 0h1m-506 1h1m7 0h1m463 0h1m3 0h1m2 0h1m1 0h1m14 0h1m5 0h1m2 0h1m-507 1h2m6 0h2m467 0h1m1 0h1m3 0h1m2 0h3m2 0h1m3 0h1m1 0h1m5 0h1m2 0h1m-508 1h1m1 0h1m5 0h1m1 0h1m466 0h1m2 0h1m3 0h1m1 0h1m3 0h1m1 0h1m3 0h1m1 0h4m2 0h5m-507 1h1m7 0h1m465 0h1m3 0h5m1 0h1m3 0h1m1 0h1m3 0h1m5 0h1m4 0h1m-506 1h1m7 0h1m464 0h1m4 0h1m3 0h1m1 0h1m3 0h1m1 0h1m2 0h2m1 0h1m3 0h1m4 0h1m-506 1h1m7 0h1m463 0h5m1 0h1m3 0h1m2 0h4m2 0h2m1 0h1m2 0h3m5 0h1m-506 1h1m7 0h1m479 0h1m-489 1h1m7 0h1m479 0h1m-491 1h5m3 0h5m521 0h1m7 0h1m-140 1h3m12 0h1m7 0h1m108 0h1m5 0h1m-140 1h1m3 0h1m11 0h1m7 0h1m109 0h1m3 0h1m-135 1h1m1 0h4m3 0h4m7 0h4m3 0h3m2 0h1m3 0h1m2 0h4m2 0h3m4 0h1m77 0h1m3 0h1m-137 1h2m2 0h1m3 0h1m1 0h1m3 0h1m7 0h1m3 0h1m1 0h1m3 0h1m1 0h1m3 0h1m1 0h1m5 0h1m3 0h1m79 0h9m-137 1h1m1 0h1m5 0h1m3 0h1m7 0h1m3 0h1m1 0h1m3 0h1m1 0h1m3 0h1m2 0h3m2 0h5m3 0h1m77 0h1m3 0h1m-139 1h1m3 0h1m1 0h1m5 0h1m3 0h1m7 0h1m3 0h1m1 0h1m3 0h1m1 0h1m2 0h2m5 0h1m1 0h1m85 0h1m3 0h1m-138 1h3m2 0h1m6 0h4m7 0h1m3 0h1m2 0h3m3 0h2m1 0h1m1 0h4m3 0h4m80 0h1m5 0h1m-8 1h1m7 0h1m-237 19h5m-1 1h1m-1 1h1m-2 1h1m-2 1h1m165 0h5m2 0h3m14 0h5m1 0h5m-202 1h1m166 0h1m5 0h1m3 0h1m13 0h1m9 0h1m-203 1h1m167 0h1m5 0h1m6 0h3m2 0h2m1 0h1m2 0h1m8 0h1m-202 1h1m167 0h4m2 0h1m1 0h3m1 0h1m3 0h1m1 0h1m1 0h1m1 0h1m1 0h4m4 0h1m-201 1h1m171 0h1m1 0h1m3 0h1m1 0h5m1 0h1m1 0h1m1 0h1m5 0h1m2 0h1m-32 1h1m3 0h1m1 0h1m3 0h1m1 0h1m5 0h1m3 0h1m1 0h1m3 0h1m1 0h1m-30 1h3m3 0h3m3 0h4m1 0h1m3 0h1m2 0h3m2 0h1m30 3h1m6 0h1m-141 1h5m3 0h1m3 0h1m11 0h1m42 0h3m5 0h2m2 0h3m15 0h3m3 0h3m28 0h6m-136 1h1m3 0h1m3 0h1m11 0h1m41 0h1m3 0h1m3 0h1m3 0h1m3 0h1m13 0h1m3 0h1m1 0h1m3 0h1m28 0h1m2 0h1m-136 1h1m2 0h5m1 0h4m8 0h4m3 0h3m2 0h1m3 0h1m2 0h4m2 0h3m4 0h1m13 0h1m2 0h1m4 0h1m6 0h3m2 0h2m1 0h1m6 0h1m5 0h1m28 0h1m2 0h1m-137 1h1m5 0h1m3 0h1m3 0h1m7 0h1m3 0h1m1 0h1m3 0h1m1 0h1m3 0h1m1 0h1m5 0h1m3 0h1m16 0h1m2 0h4m2 0h1m1 0h3m1 0h1m3 0h1m1 0h1m1 0h1m1 0h1m4 0h1m5 0h1m29 0h1m2 0h1m-284 1h1m145 0h1m6 0h1m3 0h1m3 0h1m7 0h1m3 0h1m1 0h1m3 0h1m1 0h1m3 0h1m2 0h3m2 0h5m3 0h1m11 0h1m3 0h1m3 0h1m1 0h1m3 0h1m1 0h5m1 0h1m1 0h1m1 0h1m3 0h1m5 0h1m30 0h1m2 0h1m-285 1h1m145 0h1m7 0h1m3 0h1m3 0h1m7 0h1m3 0h1m1 0h1m3 0h1m1 0h1m2 0h2m5 0h1m1 0h1m18 0h1m4 0h1m3 0h1m1 0h1m3 0h1m1 0h1m5 0h1m3 0h1m2 0h1m5 0h1m31 0h1m2 0h1m-286 1h1m146 0h1m8 0h1m2 0h1m3 0h1m7 0h1m3 0h1m2 0h3m3 0h2m1 0h1m1 0h4m3 0h4m13 0h5m2 0h3m3 0h3m3 0h4m1 0h1m3 0h1m1 0h5m1 0h5m27 0h6m-288 1h1m280 0h1m6 0h1m-289 1h1m-2 1h1m-2 1h1m-2 1h1m-2 1h1m-2 1h1m-1 1h1m-2 1h1m-2 1h1m-2 1h1m-2 1h1m-2 1h1m-1 1h1m-2 1h1m-2 1h1m-2 1h1m-2 1h1m-2 1h1m-2 1h1m-1 1h1m-2 1h1m-2 1h1m-2 1h1m234 0h1m3 0h5m1 0h1m7 0h1m3 0h1m6 0h3m3 0h3m-274 1h1m234 0h2m7 0h1m1 0h1m11 0h1m5 0h1m3 0h1m1 0h1m3 0h1m-276 1h1m236 0h1m6 0h1m2 0h1m7 0h1m3 0h4m6 0h1m5 0h1m-276 1h1m236 0h1m5 0h1m3 0h1m7 0h1m3 0h1m3 0h1m4 0h1m4 0h2m-276 1h1m237 0h1m4 0h1m4 0h1m7 0h1m3 0h1m3 0h1m3 0h1m7 0h1m-278 1h1m238 0h1m3 0h1m5 0h1m7 0h1m3 0h1m3 0h1m2 0h1m4 0h1m3 0h1m-279 1h1m238 0h3m2 0h1m5 0h5m3 0h1m3 0h4m2 0h5m2 0h3m-279 1h1m-2 1h1m-1 1h1m305 0h1m1 0h1m1 0h1m-312 1h1m170 0h1m5 0h1m5 0h1m3 0h1m11 0h1m108 0h1m1 0h1m1 0h1m-314 1h1m170 0h2m4 0h2m5 0h1m3 0h1m11 0h1m108 0h1m1 0h1m1 0h1m-315 1h1m172 0h1m5 0h1m3 0h5m1 0h4m8 0h4m3 0h3m2 0h1m3 0h1m2 0h4m2 0h3m4 0h1m76 0h1m1 0h1m1 0h1m-316 1h1m173 0h1m5 0h1m5 0h1m3 0h1m3 0h1m7 0h1m3 0h1m1 0h1m3 0h1m1 0h1m3 0h1m1 0h1m5 0h1m3 0h1m80 0h1m1 0h1m1 0h1m-317 1h1m174 0h1m5 0h1m5 0h1m3 0h1m3 0h1m7 0h1m3 0h1m1 0h1m3 0h1m1 0h1m3 0h1m2 0h3m2 0h5m3 0h1m76 0h1m1 0h1m1 0h1m-317 1h1m174 0h1m5 0h1m5 0h1m3 0h1m3 0h1m7 0h1m3 0h1m1 0h1m3 0h1m1 0h1m2 0h2m5 0h1m1 0h1m84 0h1m1 0h1m1 0h1m2 0h1m-321 1h1m174 0h3m3 0h3m5 0h1m2 0h1m3 0h1m7 0h1m3 0h1m2 0h3m3 0h2m1 0h1m1 0h4m3 0h4m80 0h1m1 0h1m1 0h1m2 0h1m-322 1h1m318 0h2m-322 1h1m-2 1h1m-2 1h1m-2 1h1m-1 1h1m-2 1h1m-2 1h1m-2 1h1m-2 1h1m-2 1h1m-1 1h1m-2 1h1m-2 1h1m-2 1h1m-2 1h1m-2 1h1m-1 1h1m-2 1h1m-2 1h1m-2 1h1m-2 1h1m-2 1h1m-2 1h1m231 0h3m3 0h3m4 0h1m15 0h1m2 0h1m3 0h3m-271 1h1m230 0h1m3 0h1m1 0h1m3 0h1m2 0h1m1 0h1m14 0h1m2 0h1m2 0h1m3 0h1m-273 1h1m235 0h1m1 0h1m2 0h1m2 0h1m3 0h1m2 0h3m2 0h1m3 0h1m1 0h1m2 0h1m2 0h1m2 0h1m-273 1h1m235 0h1m3 0h3m2 0h1m3 0h1m1 0h1m3 0h1m1 0h1m3 0h1m1 0h5m2 0h3m-274 1h1m235 0h1m3 0h1m3 0h1m1 0h5m1 0h1m3 0h1m1 0h1m3 0h1m4 0h1m2 0h1m3 0h1m-276 1h1m151 0h1m13 0h1m69 0h1m4 0h1m3 0h1m1 0h1m3 0h1m1 0h1m3 0h1m1 0h1m2 0h2m4 0h1m2 0h1m3 0h1m-277 1h1m153 0h1m11 0h1m69 0h5m2 0h3m2 0h1m3 0h1m2 0h4m2 0h2m1 0h1m4 0h1m3 0h3m-276 1h1m154 0h11m92 0h1m-260 1h1m157 0h1m5 0h1m94 0h1m-261 1h1m158 0h1m5 0h1m-167 1h1m159 0h1m5 0h1m73 0h3m3 0h3m4 0h1m16 0h3m3 0h3m-280 1h1m160 0h1m5 0h1m72 0h1m3 0h1m1 0h1m3 0h1m2 0h1m1 0h1m14 0h1m3 0h1m1 0h1m3 0h1m-282 1h1m117 0h1m3 0h1m39 0h1m5 0h1m76 0h1m1 0h1m2 0h1m2 0h1m3 0h1m2 0h3m2 0h1m3 0h1m5 0h1m1 0h1m2 0h2m-282 1h1m118 0h3m40 0h1m5 0h1m75 0h1m3 0h3m2 0h1m3 0h1m1 0h1m3 0h1m1 0h1m3 0h1m3 0h2m2 0h1m1 0h1m1 0h1m-283 1h1m118 0h1m3 0h1m39 0h1m5 0h1m74 0h1m3 0h1m3 0h1m1 0h5m1 0h1m3 0h1m1 0h1m3 0h1m5 0h1m1 0h2m2 0h1m-284 1h1m119 0h1m3 0h1m39 0h1m5 0h1m73 0h1m4 0h1m3 0h1m1 0h1m3 0h1m1 0h1m3 0h1m1 0h1m2 0h2m1 0h1m3 0h1m1 0h1m3 0h1m-285 1h1m120 0h1m3 0h1m39 0h1m5 0h1m72 0h5m2 0h3m2 0h1m3 0h1m2 0h4m2 0h2m1 0h1m2 0h3m3 0h3m-285 1h1m122 0h3m40 0h1m5 0h1m94 0h1m-269 1h1m124 0h1m41 0h1m5 0h1m94 0h1m-269 1h1m122 0h5m37 0h11m174 0h1m3 0h1m-356 1h1m125 0h1m38 0h1m11 0h1m33 0h1m3 0h1m136 0h3m-356 1h1m164 0h1m13 0h1m32 0h2m1 0h2m135 0h1m3 0h1m-358 1h1m212 0h1m1 0h1m1 0h1m2 0h3m2 0h4m3 0h3m4 0h1m113 0h1m3 0h1m-359 1h1m213 0h1m1 0h1m1 0h1m1 0h1m3 0h1m1 0h1m3 0h1m1 0h1m3 0h1m117 0h1m3 0h1m-360 1h1m214 0h1m3 0h1m1 0h5m1 0h1m5 0h1m7 0h1m114 0h3m-360 1h1m215 0h1m3 0h1m1 0h1m5 0h1m5 0h1m3 0h1m119 0h1m-359 1h1m215 0h1m3 0h1m2 0h4m1 0h1m6 0h3m118 0h5m-362 1h1m66 0h1m291 0h1m-361 1h1m55 0h1m3 0h1m3 0h1m11 0h1m-78 1h1m40 0h1m3 0h1m3 0h1m3 0h1m22 0h3m-80 1h1m29 0h1m3 0h1m3 0h1m39 0h1m-80 1h1m18 0h1m3 0h1m3 0h1m-28 1h1m6 0h1m3 0h1m3 0h1m-21 1h1m3 0h1m3 0h1m90 0h1m11 0h1m-128 1h1m3 0h1m3 0h1m3 0h1m6 0h1m96 0h1m9 0h1m-139 1h1m3 0h1m3 0h1m21 0h1m98 0h1m7 0h1m-150 1h1m3 0h1m3 0h1m32 0h1m99 0h1m7 0h1m66 0h1m3 0h1m-233 1h1m3 0h1m3 0h1m43 0h1m100 0h1m3 0h1m3 0h1m67 0h3m-244 1h1m3 0h1m3 0h1m55 0h1m100 0h1m3 0h1m3 0h1m66 0h1m3 0h1m-261 1h1m3 0h1m3 0h1m3 0h1m66 0h1m101 0h9m66 0h1m3 0h1m-273 1h1m3 0h1m3 0h1m81 0h1m102 0h1m3 0h1m3 0h1m66 0h1m3 0h1m83 0h1m4 0h3m4 0h1m15 0h1m2 0h1m3 0h3m-406 1h1m3 0h1m3 0h1m92 0h1m103 0h1m3 0h1m3 0h1m67 0h3m83 0h2m3 0h1m3 0h1m2 0h1m1 0h1m14 0h1m2 0h1m2 0h1m3 0h1m-411 1h1m103 0h1m103 0h1m4 0h1m4 0h1m67 0h1m85 0h1m3 0h1m3 0h1m1 0h1m3 0h1m2 0h3m2 0h1m3 0h1m1 0h1m2 0h1m2 0h1m2 0h2m-308 1h1m103 0h1m5 0h1m5 0h1m64 0h5m83 0h1m4 0h4m1 0h1m3 0h1m1 0h1m3 0h1m1 0h1m3 0h1m1 0h5m1 0h1m1 0h1m1 0h1m-309 1h1m110 0h1m72 0h1m85 0h1m7 0h1m1 0h5m1 0h1m3 0h1m1 0h1m3 0h1m4 0h1m2 0h2m2 0h1m-309 1h1m109 0h3m157 0h1m3 0h1m3 0h1m1 0h1m3 0h1m1 0h1m3 0h1m1 0h1m2 0h2m4 0h1m2 0h1m3 0h1m-310 1h1m109 0h1m3 0h1m155 0h3m3 0h3m2 0h1m3 0h1m2 0h4m2 0h2m1 0h1m4 0h1m3 0h3m-310 1h1m110 0h1m3 0h1m176 0h1m-294 1h1m111 0h1m3 0h1m176 0h1m-295 1h1m113 0h3m-118 1h1m-1 1h1m-2 1h1m-2 1h1m-2 1h1m-2 1h1m-2 1h1m-1 1h1m-2 1h1m-2 1h1m-2 1h1m-2 1h1m-2 1h1m-1 1h1m-2 1h1m-2 1h1m-2 1h1m-2 1h1m-2 1h1m-2 1h1m391 0h1m5 0h1m-399 1h1m252 0h1m3 0h1m135 0h1m3 0h1m-399 1h1m253 0h1m3 0h1m135 0h1m1 0h1m1 0h1m-400 1h1m254 0h1m3 0h1m1 0h4m3 0h3m2 0h4m4 0h1m113 0h5m-401 1h1m255 0h1m3 0h1m1 0h1m3 0h1m1 0h1m3 0h1m1 0h1m3 0h1m117 0h1m1 0h1m1 0h1m-402 1h1m256 0h1m3 0h1m1 0h1m5 0h1m3 0h1m1 0h1m3 0h1m3 0h1m112 0h1m2 0h1m2 0h1m-404 1h1m257 0h1m3 0h1m1 0h1m5 0h1m2 0h2m1 0h1m3 0h1m118 0h3m-402 1h1m258 0h3m2 0h1m6 0h2m1 0h1m1 0h1m3 0h1m118 0h1m1 0h1m-403 1h1m400 0h1m-403 1h1m-2 1h1m-2 1h1m-2 1h1m-1 1h1m-2 1h1m-2 1h1m-2 1h1m-2 4h1m-2 1h3m307 0h1m2 0h1m4 0h1m17 0h1m4 0h3m-343 1h1m308 0h1m2 0h1m3 0h1m1 0h1m15 0h2m3 0h1m3 0h1m-35 1h1m2 0h1m2 0h1m3 0h1m2 0h3m2 0h1m3 0h1m3 0h1m7 0h1m-35 1h5m1 0h1m3 0h1m1 0h1m3 0h1m1 0h1m3 0h1m3 0h1m6 0h1m-31 1h1m2 0h5m1 0h1m3 0h1m1 0h1m3 0h1m3 0h1m5 0h1m-30 1h1m2 0h1m3 0h1m1 0h1m3 0h1m1 0h1m2 0h2m3 0h1m4 0h1m-29 1h1m2 0h1m3 0h1m2 0h4m2 0h2m1 0h1m2 0h3m2 0h5m-19 1h1m-1 1h1m-467 8h1m5 0h1m130 0h1m7 0h1m-145 1h1m3 0h1m132 0h1m5 0h1m-144 1h1m1 0h1m1 0h1m133 0h5m-143 1h5m132 0h1m5 0h1m-144 1h1m1 0h1m1 0h1m131 0h1m7 0h1m-146 1h1m2 0h1m2 0h1m130 0h1m7 0h1m-144 1h3m132 0h1m7 0h1m-144 1h1m1 0h1m132 0h1m7 0h1m-143 1h1m133 0h1m7 0h1m-8 1h1m5 0h1m-6 1h5m-3 1h1m-1 1h1m-1 1h1m-5 1h9m-128 1h1m5 0h1m5 0h1m110 0h1m-125 1h2m4 0h2m4 0h1m111 0h1m-125 1h1m1 0h1m3 0h1m1 0h1m3 0h1m-14 1h1m2 0h1m2 0h1m2 0h1m2 0h1m-14 1h1m3 0h1m1 0h1m3 0h1m1 0h1m-13 1h1m4 0h2m4 0h2m-14 1h1m5 0h1m5 0h1m-9 4h1m5 0h1m5 0h1m-14 1h2m4 0h2m4 0h1m-13 1h1m1 0h1m3 0h1m1 0h1m3 0h1m-14 1h1m2 0h1m2 0h1m2 0h1m2 0h1m-14 1h1m3 0h1m1 0h1m3 0h1m1 0h1m117 0h1m3 0h1m21 0h3m-159 1h1m4 0h2m4 0h2m118 0h3m21 0h1m3 0h1m-161 1h1m5 0h1m5 0h1m118 0h1m3 0h1m24 0h1m-30 1h1m3 0h1m24 0h1m-30 1h1m3 0h1m22 0h2m-28 1h3m25 0h1m-28 1h1m26 0h1m-30 1h5m20 0h1m3 0h1m-28 1h1m23 0h3"/>
<path stroke="#7f7f7f" d="M0 .5m224 49h1m6 0h1m2 0h1m2 0h1m2 0h1m5 0h1m3 0h1m2 0h1m-37 1h1m3 0h1m2 0h1m6 0h1m2 0h1m2 0h1m2 0h1m5 0h1m3 0h1m2 0h1m2 0h1m-43 1h1m2 0h1m3 0h1m2 0h1m6 0h1m2 0h1m2 0h1m2 0h1m5 0h1m3 0h1m2 0h1m2 0h1m6 0h1m2 0h1m-63 1h1m3 0h1m5 0h1m2 0h1m3 0h1m2 0h1m6 0h1m2 0h1m2 0h1m2 0h1m5 0h1m3 0h1m2 0h1m2 0h1m6 0h1m2 0h1m3 0h1m2 0h1m-73 1h1m2 0h1m3 0h1m6 0h1m2 0h1m2 0h1m2 0h1m6 0h1m2 0h1m2 0h1m2 0h1m5 0h1m3 0h1m2 0h1m2 0h1m6 0h1m2 0h1m3 0h1m2 0h1m5 0h1m-82 1h1m2 0h1m2 0h1m3 0h1m6 0h1m2 0h1m2 0h1m2 0h1m6 0h1m2 0h1m3 0h1m1 0h1m5 0h1m3 0h1m2 0h1m2 0h1m6 0h1m2 0h1m2 0h1m3 0h1m5 0h1m3 0h1m-93 1h1m6 0h1m3 0h1m2 0h1m2 0h1m6 0h1m2 0h1m3 0h1m2 0h1m5 0h1m2 0h1m3 0h1m1 0h1m5 0h1m2 0h1m2 0h1m2 0h1m7 0h1m2 0h1m2 0h1m2 0h1m6 0h1m3 0h1m2 0h1m-99 1h1m2 0h1m7 0h1m2 0h1m2 0h1m2 0h1m6 0h1m2 0h1m3 0h1m2 0h1m5 0h1m2 0h1m3 0h1m1 0h1m5 0h1m2 0h1m2 0h1m2 0h1m6 0h1m2 0h1m3 0h1m2 0h1m5 0h1m3 0h1m2 0h1m3 0h1m-108 1h1m2 0h1m2 0h1m3 0h1m6 0h1m2 0h1m2 0h1m3 0h1m5 0h1m2 0h1m3 0h1m2 0h1m5 0h1m2 0h1m3 0h1m1 0h1m5 0h1m2 0h1m2 0h1m2 0h1m6 0h1m2 0h1m3 0h1m2 0h1m5 0h1m3 0h1m2 0h1m2 0h1m7 0h1m-115 1h1m3 0h1m2 0h1m2 0h1m6 0h1m2 0h1m2 0h1m3 0h1m5 0h1m3 0h1m2 0h1m2 0h1m5 0h1m2 0h1m3 0h1m1 0h1m5 0h1m2 0h1m2 0h1m2 0h1m6 0h1m2 0h1m3 0h1m2 0h1m5 0h1m3 0h1m2 0h1m2 0h1m7 0h1m-114 1h1m2 0h1m2 0h1m2 0h1m6 0h1m2 0h1m2 0h1m3 0h1m6 0h1m2 0h1m2 0h1m2 0h1m5 0h1m2 0h1m3 0h1m1 0h1m5 0h1m2 0h1m2 0h1m2 0h1m6 0h1m2 0h1m3 0h1m2 0h1m5 0h1m2 0h1m3 0h1m2 0h1m6 0h1m3 0h1m-125 1h1m7 0h1m2 0h1m2 0h1m3 0h1m5 0h1m2 0h1m3 0h1m2 0h1m6 0h1m2 0h1m2 0h1m32 0h1m6 0h1m2 0h1m2 0h1m2 0h1m6 0h1m2 0h1m2 0h1m3 0h1m6 0h1m2 0h1m3 0h1m-128 1h1m7 0h1m2 0h1m3 0h1m2 0h1m5 0h1m3 0h1m2 0h1m2 0h1m6 0h1m45 0h1m2 0h1m2 0h1m2 0h1m5 0h1m3 0h1m2 0h1m2 0h1m6 0h1m3 0h1m2 0h1m3 0h1m-134 1h1m3 0h1m6 0h1m3 0h1m2 0h1m2 0h1m6 0h1m2 0h1m2 0h1m2 0h1m58 0h1m2 0h1m5 0h1m3 0h1m2 0h1m2 0h1m6 0h1m2 0h1m3 0h1m2 0h1m-136 1h1m3 0h1m2 0h1m7 0h1m2 0h1m2 0h1m2 0h1m6 0h1m2 0h1m73 0h1m2 0h1m3 0h1m2 0h1m6 0h1m2 0h1m2 0h1m3 0h1m-139 1h1m3 0h1m2 0h1m3 0h1m6 0h1m2 0h1m2 0h1m3 0h1m88 0h1m3 0h1m5 0h1m3 0h1m2 0h1m2 0h1m7 0h1m-145 1h1m2 0h1m3 0h1m2 0h1m6 0h1m2 0h1m3 0h1m2 0h1m91 0h1m6 0h1m2 0h1m3 0h1m2 0h1m6 0h1m3 0h1m-148 1h1m3 0h1m2 0h1m2 0h1m6 0h1m3 0h1m2 0h1m100 0h1m3 0h1m2 0h1m3 0h1m6 0h1m2 0h1m3 0h1m-158 1h1m7 0h1m2 0h1m2 0h1m3 0h1m6 0h1m2 0h1m103 0h1m2 0h1m3 0h1m2 0h1m6 0h1m3 0h1m3 0h1m2 0h1m-164 1h1m3 0h1m6 0h1m2 0h1m3 0h1m2 0h1m6 0h1m109 0h1m2 0h1m3 0h1m6 0h1m2 0h1m3 0h1m3 0h1m-167 1h1m3 0h1m2 0h1m6 0h1m3 0h1m2 0h1m3 0h1m118 0h1m2 0h1m7 0h1m2 0h1m3 0h1m2 0h1m-169 1h1m3 0h1m2 0h1m3 0h1m6 0h1m2 0h1m3 0h1m2 0h1m121 0h1m6 0h1m3 0h1m2 0h1m3 0h1m6 0h1m-175 1h1m2 0h1m3 0h1m2 0h1m6 0h1m3 0h1m2 0h1m131 0h1m2 0h1m3 0h1m2 0h1m6 0h1m-174 1h1m3 0h1m2 0h1m2 0h1m7 0h1m2 0h1m133 0h1m3 0h1m2 0h1m3 0h1m6 0h1m2 0h1m-176 1h1m2 0h1m2 0h1m3 0h1m6 0h1m136 0h1m2 0h1m3 0h1m3 0h1m5 0h1m3 0h1m-183 1h1m6 0h1m3 0h1m2 0h1m2 0h1m146 0h1m2 0h1m3 0h1m6 0h1m2 0h1m3 0h1m-186 1h1m7 0h1m2 0h1m2 0h1m3 0h1m148 0h1m3 0h1m5 0h1m3 0h1m3 0h1m-189 1h1m3 0h1m6 0h1m3 0h1m2 0h1m2 0h1m151 0h1m6 0h1m2 0h1m3 0h1m3 0h1m-196 1h1m3 0h1m3 0h1m7 0h1m2 0h1m2 0h1m154 0h1m5 0h1m3 0h1m3 0h1m3 0h1m-195 1h1m3 0h1m3 0h1m6 0h1m3 0h1m162 0h1m2 0h1m3 0h1m3 0h1m-197 1h1m2 0h1m4 0h1m2 0h1m7 0h1m164 0h1m3 0h1m3 0h1m3 0h1m6 0h1m-203 1h1m2 0h1m3 0h1m3 0h1m174 0h1m3 0h1m3 0h1m7 0h1m-203 1h1m3 0h1m3 0h1m2 0h1m174 0h1m3 0h1m3 0h1m6 0h1m3 0h1m-205 1h1m2 0h1m4 0h1m2 0h1m176 0h1m3 0h1m6 0h1m4 0h1m2 0h1m-215 1h1m6 0h1m3 0h1m3 0h1m2 0h1m180 0h1m6 0h1m3 0h1m2 0h1m-214 1h1m7 0h1m3 0h1m3 0h1m181 0h1m6 0h1m3 0h1m3 0h1m3 0h1m-221 1h1m3 0h1m6 0h1m3 0h1m191 0h1m4 0h1m2 0h1m3 0h1m-220 1h1m4 0h1m6 0h1m194 0h1m3 0h1m2 0h1m3 0h1m-221 1h1m2 0h1m3 0h1m6 0h1m193 0h1m3 0h1m3 0h1m3 0h1m-221 1h1m3 0h1m3 0h1m6 0h1m196 0h1m2 0h1m3 0h1m7 0h1m-231 1h1m3 0h1m2 0h1m4 0h1m138 0h1m62 0h1m2 0h1m3 0h1m7 0h1m-230 1h1m4 0h1m2 0h1m3 0h1m204 0h1m2 0h1m7 0h1m-228 1h1m3 0h1m3 0h1m3 0h1m136 0h1m65 0h1m3 0h1m7 0h1m3 0h1m-231 1h1m3 0h1m2 0h1m209 0h1m7 0h1m3 0h1m-237 1h1m6 0h1m4 0h1m2 0h1m139 0h1m75 0h1m3 0h1m4 0h1m-241 1h1m7 0h1m3 0h1m217 0h1m3 0h1m4 0h1m3 0h1m-248 1h1m4 0h1m7 0h1m3 0h1m140 0h1m75 0h1m3 0h1m3 0h1m3 0h1m-246 1h1m4 0h1m6 0h1m219 0h1m3 0h1m3 0h1m3 0h1m-248 1h1m3 0h1m3 0h1m7 0h1m143 0h1m77 0h1m4 0h1m2 0h1m-246 1h1m3 0h1m3 0h1m227 0h1m4 0h1m2 0h1m8 0h1m-258 1h1m4 0h1m3 0h1m3 0h1m148 0h1m81 0h1m3 0h1m7 0h1m-256 1h1m4 0h1m2 0h1m3 0h1m229 0h1m3 0h1m7 0h1m-254 1h1m4 0h1m2 0h1m3 0h1m147 0h1m83 0h1m7 0h1m5 0h1m-258 1h1m3 0h1m3 0h1m233 0h1m7 0h1m5 0h1m-256 1h1m3 0h1m3 0h1m148 0h1m91 0h1m4 0h1m3 0h1m-268 1h1m8 0h1m4 0h1m242 0h1m3 0h2m3 0h1m-266 1h1m8 0h1m155 0h1m89 0h1m3 0h1m4 0h1m3 0h1m-272 1h1m3 0h1m8 0h1m243 0h1m3 0h1m4 0h1m3 0h1m-270 1h1m3 0h1m8 0h1m152 0h1m92 0h1m4 0h1m3 0h1m-272 1h1m3 0h1m3 0h2m251 0h1m5 0h1m2 0h1m-270 1h1m3 0h1m4 0h1m158 0h1m96 0h1m2 0h1m-268 1h1m3 0h2m3 0h1m253 0h1m3 0h1m8 0h1m-282 1h1m5 0h1m4 0h1m3 0h1m156 0h1m94 0h1m3 0h1m8 0h1m-280 1h1m5 0h1m4 0h1m257 0h1m8 0h1m-278 1h1m4 0h1m5 0h1m157 0h1m97 0h1m7 0h2m4 0h1m-281 1h1m4 0h1m267 0h1m5 0h1m-279 1h2m3 0h1m161 0h1m103 0h1m5 0h1m3 0h1m-290 1h1m9 0h1m3 0h1m263 0h1m4 0h2m3 0h1m-288 1h1m9 0h1m162 0h1m102 0h1m4 0h1m4 0h1m-286 1h1m278 0h1m3 0h2m-288 1h1m3 0h1m170 0h1m105 0h1m3 0h1m5 0h2m-292 1h1m3 0h2m277 0h1m5 0h1m-289 1h1m4 0h1m166 0h1m108 0h1m4 0h2m-292 1h1m4 0h2m3 0h1m273 0h1m4 0h1m-289 1h1m5 0h1m3 0h1m164 0h1m110 0h2m-292 1h1m4 0h1m5 0h1m277 0h1m10 0h2m-301 1h1m4 0h2m4 0h1m165 0h1m120 0h1m-298 1h2m4 0h1m288 0h2m-295 1h1m4 0h1m168 0h1m117 0h1m5 0h2m-299 1h1m4 0h1m283 0h2m5 0h1m-306 1h1m9 0h2m169 0h1m115 0h1m5 0h2m3 0h2m-309 1h1m10 0h1m289 0h1m4 0h1m-306 1h2m177 0h1m118 0h2m3 0h2m-309 1h1m5 0h1m299 0h1m5 0h2m-313 1h2m4 0h1m174 0h1m121 0h2m5 0h1m-309 1h1m4 0h2m293 0h1m5 0h2m-312 1h2m3 0h2m4 0h1m32 0h1m138 0h1m125 0h1m-308 1h1m4 0h1m299 0h2m-306 1h2m3 0h2m36 0h1m135 0h1m123 0h1m11 0h1m-321 1h2m5 0h1m4 0h1m305 0h2m-318 1h1m5 0h2m40 0h1m133 0h1m131 0h2m4 0h1m-320 1h2m5 0h1m41 0h1m261 0h2m4 0h2m-317 1h1m177 0h1m128 0h2m5 0h1m-314 1h2m46 0h1m256 0h1m5 0h2m-323 1h1m11 0h1m174 0h1m132 0h1m5 0h2m-327 1h2m57 0h1m257 0h2m5 0h1m-323 1h2m181 0h1m136 0h2m4 0h1m-325 1h2m55 0h1m259 0h1m4 0h2m-330 1h2m6 0h2m177 0h1m101 0h1m31 0h2m3 0h2m-326 1h2m6 0h1m54 0h1m221 0h1m32 0h1m3 0h2m-322 1h2m180 0h1m135 0h2m-326 1h2m6 0h2m59 0h1m217 0h1m35 0h1m-322 1h2m6 0h1m60 0h1m116 0h1m96 0h1m49 0h2m-339 1h1m5 0h2m327 0h2m-336 1h2m5 0h2m65 0h1m114 0h1m94 0h1m47 0h2m-332 1h2m5 0h2m271 0h1m47 0h2m6 0h1m-335 1h2m70 0h1m111 0h1m139 0h2m6 0h2m-332 1h2m272 0h1m53 0h2m-328 1h1m69 0h1m109 0h1m89 0h1m53 0h2m5 0h1m-344 1h2m332 0h2m5 0h2m-341 1h2m80 0h1m106 0h1m88 0h1m52 0h1m4 0h3m-337 1h3m79 0h1m191 0h1m57 0h2m6 0h1m-346 1h2m6 0h2m182 0h1m142 0h2m6 0h2m-343 1h2m6 0h2m77 0h1m187 0h1m62 0h3m-339 1h2m185 0h1m83 0h1m62 0h2m-341 1h1m6 0h2m83 0h1m244 0h2m-338 1h2m6 0h2m181 0h1m81 0h1m-272 1h3m88 0h1m177 0h1m76 0h1m-352 1h2m6 0h2m183 0h1m155 0h2m-349 1h2m6 0h2m86 0h1m173 0h1m73 0h3m-345 1h3m186 0h1m76 0h1m73 0h2m6 0h1m-346 1h2m91 0h1m241 0h2m6 0h2m-343 1h1m92 0h1m89 0h1m75 0h1m78 0h3m-84 1h1m78 0h2m6 0h1m-356 1h1m105 0h1m87 0h1m150 0h2m6 0h2m-354 1h2m263 0h1m83 0h3m-350 1h3m102 0h1m84 0h1m70 0h1m83 0h2m6 0h2m-359 1h1m6 0h2m338 0h2m6 0h2m-356 1h2m6 0h2m100 0h1m82 0h1m68 0h1m88 0h3m-352 1h3m255 0h1m88 0h2m-354 1h2m6 0h2m105 0h1m79 0h1m65 0h1m88 0h2m-350 1h2m6 0h2m-8 1h3m110 0h1m77 0h1m63 0h1m-261 1h2m6 0h2m110 0h1m137 0h1m104 0h2m-363 1h2m6 0h2m183 0h1m163 0h4m-359 1h3m115 0h1m133 0h1m98 0h4m-352 1h2m27 0h1m158 0h1m58 0h1m98 0h2m9 0h1m-356 1h2m27 0h1m1 0h1m83 0h1m235 0h4m-322 1h1m151 0h1m57 0h1m103 0h4m-316 1h1m81 0h1m123 0h1m103 0h2m8 0h2m-367 1h1m46 0h1m1 0h1m145 0h1m165 0h4m-364 1h4m46 0h1m77 0h1m119 0h1m108 0h3m-356 1h4m44 0h1m140 0h1m52 0h1m108 0h2m8 0h2m-369 1h1m9 0h1m45 0h1m1 0h1m73 0h1m230 0h4m-366 1h4m55 0h1m73 0h1m60 0h1m50 0h1m113 0h3m-358 1h4m53 0h1m181 0h1m113 0h2m-361 1h2m8 0h1m54 0h1m1 0h1m69 0h1m57 0h1m114 0h2m-310 1h3m64 0h1m173 0h1m63 0h3m-305 1h4m62 0h1m67 0h1m55 0h1m45 0h1m62 0h3m-298 1h2m62 0h1m1 0h1m226 0h2m65 0h2m-372 1h3m75 0h1m63 0h1m53 0h1m43 0h1m123 0h6m-367 1h5m72 0h1m157 0h1m123 0h2m-356 1h3m71 0h1m1 0h1m59 0h1m50 0h1m175 0h2m-287 1h1m59 0h1m89 0h1m128 0h6m-283 1h1m1 0h1m104 0h1m38 0h1m127 0h3m-273 1h1m55 0h1m222 0h3m-375 1h3m92 0h1m99 0h1m37 0h1m133 0h5m-369 1h5m89 0h1m1 0h1m51 0h1m79 0h1m132 0h3m-359 1h3m90 0h1m93 0h1m-196 1h2m101 0h1m49 0h1m75 0h1m140 0h5m-373 1h6m97 0h1m1 0h1m86 0h1m32 0h1m136 0h6m-362 1h3m98 0h1m45 0h1m-45 1h1m82 0h1m30 0h1m-227 1h5m109 0h1m1 0h1m41 0h1m65 0h1m-220 1h6m107 0h1m41 0h1m33 0h1m-75 1h1m101 0h1m152 0h2m-377 1h5m117 0h1m1 0h1m37 0h1m31 0h1m25 0h1m148 0h6m-370 1h6m115 0h1m239 0h3m-241 1h1m35 0h1m28 0h1m24 0h1m156 0h3m-248 1h1m1 0h1m83 0h1m153 0h5m-241 1h1m31 0h1m26 0h1m173 0h3m-234 1h1m77 0h1m-77 1h1m1 0h1m27 0h1m23 0h1m19 0h1m160 0h5m-379 1h5m138 0h1m224 0h6m-369 1h6m134 0h1m1 0h1m23 0h1m21 0h1m17 0h1m-63 1h1m23 0h1m35 0h1m164 0h6m-381 1h6m146 0h1m40 0h1m176 0h5m-369 1h5m143 0h1m1 0h1m19 0h1m31 0h1m-51 1h1m34 0h1m12 0h1m-207 1h6m154 0h1m17 0h1m-173 1h5m151 0h1m1 0h1m27 0h1m11 0h1m-39 1h1m13 0h1m21 0h1m-35 1h1m23 0h1m177 0h11m-381 1h11m159 0h1m1 0h1m9 0h1m17 0h1m-27 1h1m16 0h1m6 0h1m-23 1h1m7 0h1m185 0h11m-203 1h1m1 0h1m5 0h1m4 0h1m4 0h1m-15 1h1m11 0h1m-11 1h1m3 0h1m1 0h1m184 0h6m-381 1h11m175 0h1m1 0h1m3 0h1m177 0h5m-185 1h1m-186 1h6m177 0h1m3 0h1m1 0h1m175 0h11m-381 1h5m185 0h1m1 0h1m3 0h1m-11 1h1m11 0h1m-15 1h1m4 0h1m4 0h1m5 0h1m1 0h1m-203 1h11m185 0h1m7 0h1m-23 1h1m6 0h1m16 0h1m-27 1h1m17 0h1m9 0h1m1 0h1m159 0h11m-381 1h11m177 0h1m23 0h1m-35 1h1m21 0h1m13 0h1m-39 1h1m11 0h1m27 0h1m1 0h1m151 0h5m-173 1h1m17 0h1m154 0h6m-207 1h1m12 0h1m34 0h1m-51 1h1m31 0h1m19 0h1m1 0h1m143 0h5m-369 1h5m176 0h1m40 0h1m146 0h6m-381 1h6m164 0h1m35 0h1m23 0h1m-63 1h1m17 0h1m21 0h1m23 0h1m1 0h1m134 0h6m-369 1h6m224 0h1m138 0h5m-379 1h5m160 0h1m19 0h1m23 0h1m27 0h1m1 0h1m-77 1h1m77 0h1m-234 1h3m173 0h1m26 0h1m31 0h1m-241 1h5m153 0h1m83 0h1m-246 1h3m156 0h1m24 0h1m28 0h1m35 0h1m-241 1h3m239 0h1m115 0h6m-370 1h6m148 0h1m25 0h1m31 0h1m37 0h1m1 0h1m117 0h5m-377 1h2m152 0h1m101 0h1m-75 1h1m33 0h1m41 0h1m107 0h5m-219 1h1m65 0h1m41 0h1m1 0h1m108 0h6m-227 1h1m30 0h1m82 0h1m-45 1h1m45 0h1m98 0h3m-362 1h6m136 0h1m32 0h1m86 0h1m1 0h1m97 0h6m-373 1h5m140 0h1m75 0h1m49 0h1m101 0h2m-196 1h1m93 0h1m90 0h3m-359 1h3m132 0h1m79 0h1m51 0h1m1 0h1m89 0h5m-369 1h5m133 0h1m37 0h1m99 0h1m92 0h3m-375 1h3m222 0h1m55 0h1m-273 1h3m127 0h1m38 0h1m104 0h1m1 0h1m-283 1h6m128 0h1m89 0h1m59 0h1m-287 1h2m175 0h1m50 0h1m59 0h1m1 0h1m71 0h3m-356 1h2m123 0h1m157 0h1m72 0h5m-367 1h6m123 0h1m43 0h1m53 0h1m63 0h1m75 0h3m-372 1h2m293 0h1m1 0h1m62 0h2m-233 1h1m45 0h1m55 0h1m67 0h1m62 0h3m-238 1h1m173 0h1m63 0h4m-194 1h1m57 0h1m69 0h1m1 0h1m54 0h1m8 0h2m-361 1h2m113 0h1m181 0h1m53 0h4m-359 1h4m113 0h1m50 0h1m60 0h1m73 0h1m55 0h4m-366 1h3m231 0h1m73 0h1m1 0h1m45 0h1m9 0h1m-369 1h2m8 0h2m108 0h1m52 0h1m140 0h1m44 0h4m-357 1h4m108 0h1m119 0h1m77 0h1m46 0h4m-364 1h3m166 0h1m145 0h1m1 0h1m46 0h1m-367 1h2m8 0h2m103 0h1m123 0h1m81 0h1m-316 1h4m103 0h1m57 0h1m151 0h1m-322 1h4m235 0h1m83 0h1m1 0h1m27 0h2m-356 1h1m9 0h2m98 0h1m58 0h1m158 0h1m27 0h2m-352 1h4m98 0h1m133 0h1m115 0h3m-359 1h4m163 0h1m183 0h2m6 0h2m-363 1h2m104 0h1m137 0h1m110 0h2m6 0h2m-261 1h1m63 0h1m77 0h1m110 0h3m-8 1h2m6 0h2m-350 1h2m88 0h1m65 0h1m79 0h1m105 0h2m6 0h1m-353 1h2m88 0h1m255 0h3m-352 1h3m88 0h1m68 0h1m82 0h1m100 0h2m6 0h2m-356 1h2m6 0h2m338 0h2m6 0h1m-358 1h1m6 0h2m83 0h1m258 0h3m-350 1h3m83 0h1m263 0h2m-354 1h2m6 0h2m150 0h1m87 0h1m105 0h1m-356 1h1m6 0h2m78 0h1m-84 1h3m78 0h1m75 0h1m89 0h1m91 0h2m-343 1h2m6 0h2m241 0h1m91 0h2m-346 1h1m6 0h2m73 0h1m76 0h1m186 0h3m-345 1h3m73 0h1m173 0h1m86 0h2m6 0h2m-349 1h2m155 0h1m183 0h2m6 0h1m-351 1h1m76 0h1m177 0h1m88 0h3m-272 1h1m81 0h1m181 0h2m6 0h2m-338 1h2m244 0h1m83 0h2m6 0h1m-341 1h2m62 0h1m83 0h1m185 0h2m-339 1h3m62 0h1m187 0h1m77 0h2m6 0h2m-343 1h2m6 0h2m142 0h1m182 0h2m6 0h2m-346 1h1m6 0h2m57 0h1m191 0h1m79 0h3m-337 1h3m4 0h1m52 0h1m88 0h1m106 0h1m80 0h2m-341 1h2m5 0h2m332 0h2m-344 1h1m5 0h2m53 0h1m89 0h1m109 0h1m69 0h1m-328 1h2m5 0h2m46 0h1m272 0h2m-332 1h2m5 0h2m140 0h1m111 0h1m70 0h2m-335 1h1m5 0h2m48 0h1m271 0h1m6 0h2m-333 1h2m48 0h1m94 0h1m114 0h1m64 0h2m6 0h2m-337 1h2m327 0h2m6 0h1m-288 1h1m96 0h1m116 0h1m60 0h1m5 0h2m-322 1h2m35 0h1m217 0h1m59 0h2m5 0h2m-326 1h2m136 0h1m180 0h2m5 0h1m-329 1h2m4 0h1m32 0h1m221 0h1m54 0h1m6 0h2m-327 1h2m4 0h2m31 0h1m101 0h1m177 0h2m6 0h2m-331 1h2m5 0h1m259 0h1m55 0h2m-320 1h2m5 0h1m130 0h1m181 0h2m-323 1h1m5 0h2m257 0h1m57 0h2m-327 1h2m5 0h1m132 0h1m174 0h1m-311 1h2m5 0h1m256 0h1m46 0h2m-314 1h1m5 0h2m128 0h1m177 0h1m-317 1h2m4 0h2m261 0h1m41 0h1m5 0h2m-315 1h2m131 0h1m133 0h1m40 0h2m5 0h1m-318 1h2m305 0h1m4 0h1m5 0h2m-321 1h1m11 0h1m123 0h1m135 0h1m36 0h2m3 0h2m-306 1h2m299 0h1m4 0h1m-308 1h1m125 0h1m138 0h1m32 0h1m4 0h2m3 0h2m-312 1h2m5 0h1m293 0h1m5 0h1m-309 1h1m5 0h2m121 0h1m173 0h2m4 0h2m-313 1h2m5 0h1m299 0h1m5 0h1m-309 1h2m3 0h2m118 0h1m177 0h1m-305 1h1m4 0h1m289 0h1m9 0h2m-309 1h2m3 0h2m5 0h1m115 0h1m169 0h1m10 0h1m-306 1h1m5 0h2m283 0h1m3 0h2m-299 1h2m5 0h1m117 0h1m168 0h1m4 0h1m-295 1h2m288 0h1m4 0h1m-297 1h1m120 0h1m165 0h1m4 0h1m4 0h2m-301 1h2m10 0h1m277 0h1m4 0h2m4 0h1m-292 1h2m110 0h1m164 0h1m3 0h1m5 0h1m-289 1h1m4 0h1m273 0h1m3 0h1m5 0h1m-292 1h2m4 0h1m108 0h1m166 0h1m3 0h2m-289 1h1m5 0h1m277 0h1m4 0h1m-292 1h2m4 0h2m3 0h1m105 0h1m169 0h2m3 0h1m-288 1h1m4 0h1m278 0h1m-286 1h1m3 0h2m4 0h1m102 0h1m162 0h1m9 0h1m-288 1h1m3 0h1m5 0h1m263 0h1m3 0h1m9 0h1m-290 1h1m3 0h1m5 0h1m103 0h1m161 0h1m3 0h1m-278 1h1m4 0h2m267 0h1m3 0h2m-281 1h1m4 0h1m8 0h1m97 0h1m157 0h1m5 0h1m4 0h1m-278 1h1m8 0h1m257 0h1m5 0h1m4 0h1m-280 1h1m8 0h1m3 0h1m94 0h1m156 0h1m3 0h1m4 0h1m5 0h1m-282 1h1m8 0h1m3 0h1m253 0h1m3 0h1m4 0h1m-269 1h1m3 0h1m96 0h1m158 0h1m3 0h2m3 0h1m-270 1h1m2 0h1m5 0h1m251 0h1m4 0h1m3 0h1m-272 1h1m2 0h1m5 0h1m92 0h1m152 0h1m7 0h2m3 0h1m-270 1h1m3 0h1m4 0h1m3 0h1m243 0h1m8 0h1m3 0h1m-272 1h1m3 0h1m3 0h2m3 0h1m89 0h1m155 0h1m8 0h1m-266 1h1m3 0h1m4 0h1m242 0h1m4 0h1m8 0h1m-268 1h1m3 0h1m4 0h1m91 0h1m148 0h1m3 0h1m4 0h1m-257 1h1m4 0h1m8 0h1m233 0h1m3 0h1m3 0h1m-258 1h1m5 0h1m7 0h1m83 0h1m147 0h1m3 0h1m3 0h1m3 0h1m-254 1h1m7 0h1m3 0h1m229 0h1m3 0h1m2 0h1m4 0h1m-256 1h1m7 0h1m3 0h1m81 0h1m148 0h1m4 0h1m2 0h1m4 0h1m-258 1h1m7 0h1m3 0h1m4 0h1m227 0h1m3 0h1m3 0h1m-246 1h1m2 0h1m4 0h1m77 0h1m143 0h1m7 0h1m3 0h1m3 0h1m-248 1h1m2 0h1m4 0h1m3 0h1m219 0h1m6 0h1m4 0h1m-246 1h1m3 0h1m3 0h1m3 0h1m75 0h1m140 0h1m3 0h1m7 0h1m4 0h1m-248 1h1m3 0h1m3 0h1m3 0h1m218 0h1m3 0h1m7 0h1m-241 1h1m4 0h1m3 0h1m75 0h1m139 0h1m2 0h1m4 0h1m6 0h1m-237 1h1m3 0h1m7 0h1m209 0h1m2 0h1m3 0h1m-231 1h1m3 0h1m7 0h1m3 0h1m65 0h1m136 0h1m3 0h1m3 0h1m3 0h1m-229 1h1m7 0h1m3 0h1m204 0h1m3 0h1m2 0h1m4 0h1m-230 1h1m7 0h1m3 0h1m2 0h1m62 0h1m138 0h1m4 0h1m2 0h1m3 0h1m-231 1h1m7 0h1m3 0h1m2 0h1m196 0h1m6 0h1m3 0h1m3 0h1m-221 1h1m3 0h1m3 0h1m3 0h1m193 0h1m6 0h1m3 0h1m2 0h1m-222 1h1m4 0h1m2 0h1m3 0h1m190 0h1m3 0h1m6 0h1m4 0h1m-220 1h1m3 0h1m2 0h1m4 0h1m191 0h1m3 0h1m6 0h1m3 0h1m-221 1h1m3 0h1m3 0h1m3 0h1m6 0h1m181 0h1m3 0h1m3 0h1m7 0h1m-214 1h1m2 0h1m3 0h1m6 0h1m180 0h1m2 0h1m3 0h1m3 0h1m6 0h1m-215 1h1m2 0h1m4 0h1m6 0h1m3 0h1m177 0h1m1 0h1m4 0h1m2 0h1m-205 1h1m3 0h1m6 0h1m3 0h1m3 0h1m174 0h1m2 0h1m3 0h1m3 0h1m-203 1h1m7 0h1m3 0h1m2 0h1m168 0h1m7 0h1m2 0h1m3 0h1m2 0h1m-203 1h1m6 0h1m3 0h1m3 0h1m3 0h1m165 0h1m6 0h1m2 0h1m4 0h1m2 0h1m-197 1h1m3 0h1m2 0h1m3 0h1m162 0h1m3 0h1m7 0h1m2 0h1m3 0h1m-195 1h1m3 0h1m3 0h1m3 0h1m5 0h1m154 0h1m2 0h1m3 0h1m6 0h1m3 0h1m-192 1h1m3 0h1m2 0h1m3 0h1m6 0h1m151 0h1m2 0h1m2 0h1m3 0h1m7 0h1m2 0h1m-193 1h1m3 0h1m3 0h1m3 0h1m5 0h1m3 0h1m148 0h1m3 0h1m2 0h1m3 0h1m6 0h1m-186 1h1m2 0h1m3 0h1m6 0h1m3 0h1m2 0h1m146 0h1m2 0h1m2 0h1m3 0h1m7 0h1m-184 1h1m3 0h1m5 0h1m3 0h1m3 0h1m139 0h1m6 0h1m3 0h1m2 0h1m3 0h1m-178 1h1m3 0h1m6 0h1m3 0h1m2 0h1m3 0h1m133 0h1m2 0h1m7 0h1m2 0h1m2 0h1m3 0h1m-174 1h1m6 0h1m2 0h1m3 0h1m2 0h1m131 0h1m2 0h1m3 0h1m6 0h1m2 0h1m3 0h1m3 0h1m-176 1h1m6 0h1m3 0h1m2 0h1m3 0h1m6 0h1m121 0h1m2 0h1m3 0h1m2 0h1m6 0h1m3 0h1m2 0h1m-165 1h1m2 0h1m3 0h1m2 0h1m7 0h1m2 0h1m118 0h1m3 0h1m2 0h1m3 0h1m6 0h1m2 0h1m3 0h1m-167 1h1m3 0h1m3 0h1m2 0h1m6 0h1m3 0h1m2 0h1m109 0h1m6 0h1m2 0h1m3 0h1m2 0h1m6 0h1m3 0h1m-164 1h1m2 0h1m3 0h1m3 0h1m6 0h1m2 0h1m3 0h1m2 0h1m103 0h1m2 0h1m6 0h1m3 0h1m2 0h1m2 0h1m7 0h1m-158 1h1m3 0h1m2 0h1m6 0h1m3 0h1m2 0h1m3 0h1m100 0h1m2 0h1m3 0h1m6 0h1m2 0h1m2 0h1m3 0h1m-148 1h1m3 0h1m6 0h1m2 0h1m3 0h1m2 0h1m6 0h1m91 0h1m2 0h1m3 0h1m2 0h1m6 0h1m2 0h1m3 0h1m2 0h1m-145 1h1m7 0h1m2 0h1m2 0h1m3 0h1m5 0h1m3 0h1m88 0h1m3 0h1m2 0h1m2 0h1m6 0h1m3 0h1m2 0h1m3 0h1m-146 1h1m6 0h1m3 0h1m2 0h1m2 0h1m6 0h1m2 0h1m3 0h1m2 0h1m73 0h1m2 0h1m6 0h1m2 0h1m2 0h1m2 0h1m7 0h1m2 0h1m3 0h1m-136 1h1m2 0h1m3 0h1m2 0h1m6 0h1m2 0h1m2 0h1m3 0h1m5 0h1m2 0h1m58 0h1m2 0h1m2 0h1m2 0h1m6 0h1m2 0h1m2 0h1m3 0h1m6 0h1m3 0h1m-134 1h1m3 0h1m2 0h1m3 0h1m6 0h1m2 0h1m2 0h1m3 0h1m5 0h1m2 0h1m2 0h1m2 0h1m45 0h1m6 0h1m2 0h1m2 0h1m3 0h1m5 0h1m3 0h1m2 0h1m2 0h1m7 0h1m-128 1h1m3 0h1m2 0h1m6 0h1m3 0h1m2 0h1m2 0h1m6 0h1m2 0h1m2 0h1m2 0h1m6 0h1m32 0h1m2 0h1m2 0h1m6 0h1m2 0h1m3 0h1m2 0h1m6 0h1m2 0h1m2 0h1m2 0h1m-117 1h1m3 0h1m6 0h1m2 0h1m2 0h1m3 0h1m5 0h1m2 0h1m3 0h1m2 0h1m6 0h1m2 0h1m2 0h1m2 0h1m5 0h1m1 0h1m3 0h1m2 0h1m5 0h1m2 0h1m2 0h1m2 0h1m6 0h1m3 0h1m2 0h1m2 0h1m6 0h1m2 0h1m2 0h1m2 0h1m-117 1h1m2 0h1m7 0h1m2 0h1m2 0h1m3 0h1m5 0h1m2 0h1m3 0h1m2 0h1m6 0h1m2 0h1m2 0h1m2 0h1m5 0h1m1 0h1m3 0h1m2 0h1m5 0h1m2 0h1m2 0h1m3 0h1m5 0h1m3 0h1m2 0h1m2 0h1m6 0h1m2 0h1m2 0h1m3 0h1m-115 1h1m7 0h1m2 0h1m2 0h1m3 0h1m5 0h1m2 0h1m3 0h1m2 0h1m6 0h1m2 0h1m2 0h1m2 0h1m5 0h1m1 0h1m3 0h1m2 0h1m5 0h1m2 0h1m3 0h1m2 0h1m5 0h1m3 0h1m2 0h1m2 0h1m6 0h1m3 0h1m2 0h1m2 0h1m-108 1h1m3 0h1m2 0h1m3 0h1m5 0h1m2 0h1m2 0h1m3 0h1m6 0h1m2 0h1m2 0h1m2 0h1m5 0h1m1 0h1m3 0h1m2 0h1m5 0h1m2 0h1m3 0h1m2 0h1m6 0h1m2 0h1m2 0h1m2 0h1m7 0h1m2 0h1m-99 1h1m2 0h1m3 0h1m6 0h1m2 0h1m2 0h1m2 0h1m7 0h1m2 0h1m2 0h1m2 0h1m5 0h1m1 0h1m3 0h1m2 0h1m5 0h1m2 0h1m3 0h1m2 0h1m6 0h1m2 0h1m2 0h1m3 0h1m6 0h1m-93 1h1m3 0h1m5 0h1m3 0h1m2 0h1m2 0h1m6 0h1m2 0h1m2 0h1m3 0h1m5 0h1m2 0h1m2 0h1m2 0h1m6 0h1m2 0h1m2 0h1m2 0h1m6 0h1m3 0h1m2 0h1m2 0h1m-82 1h1m5 0h1m2 0h1m3 0h1m2 0h1m6 0h1m2 0h1m2 0h1m3 0h1m5 0h1m2 0h1m2 0h1m2 0h1m6 0h1m2 0h1m2 0h1m2 0h1m6 0h1m3 0h1m2 0h1m-73 1h1m2 0h1m3 0h1m2 0h1m6 0h1m2 0h1m2 0h1m3 0h1m5 0h1m2 0h1m2 0h1m2 0h1m6 0h1m2 0h1m3 0h1m2 0h1m5 0h1m3 0h1m-63 1h1m2 0h1m6 0h1m2 0h1m2 0h1m3 0h1m5 0h1m2 0h1m2 0h1m2 0h1m6 0h1m2 0h1m3 0h1m2 0h1m-43 1h1m2 0h1m2 0h1m3 0h1m5 0h1m2 0h1m2 0h1m2 0h1m6 0h1m2 0h1m3 0h1m-37 1h1m2 0h1m3 0h1m5 0h1m2 0h1m2 0h1m2 0h1m6 0h1"/>
<path stroke="#f00" d="M0 .5m227 68h3m26 0h1m-31 1h1m3 0h1m19 0h2m3 0h1m-30 1h1m3 0h1m21 0h1m2 0h1m-30 1h1m3 0h1m21 0h1m2 0h1m-29 1h4m20 0h1m3 0h1m-26 1h1m20 0h1m3 0h1m-26 1h1m19 0h1m4 0h1m120 0h5m-155 1h1m3 0h1m19 0h8m117 0h1m5 0h1m-155 1h3m25 0h1m118 0h1m7 0h1m-10 1h1m9 0h1m-12 1h1m11 0h1m-13 1h1m11 0h1m-13 1h1m11 0h1m-13 1h1m11 0h1m-13 1h1m11 0h1m-12 1h1m9 0h1m-10 1h1m7 0h1m-9 1h1m7 0h1m-13 1h1m3 0h1m7 0h1m-12 1h1m1 0h1m9 0h1m-12 1h1m11 0h1m0 1h1m0 1h1m9 7h3m-5 1h2m3 0h2m-7 1h1m5 0h1m-8 1h1m7 0h1m-9 1h1m3 0h1m3 0h1m-9 1h1m7 0h1m-8 1h1m5 0h1m-7 1h2m3 0h2m-5 1h3m231 31h3m-139 1h1m11 0h1m9 0h1m42 0h3m5 0h2m2 0h3m15 0h3m3 0h3m33 0h2m-140 1h2m11 0h1m9 0h1m41 0h1m3 0h1m3 0h1m3 0h1m3 0h1m13 0h1m3 0h1m1 0h1m3 0h1m31 0h1m1 0h1m-139 1h1m4 0h4m1 0h5m7 0h4m3 0h3m2 0h1m3 0h1m2 0h4m2 0h3m4 0h1m13 0h1m2 0h1m4 0h1m6 0h3m3 0h3m6 0h1m5 0h1m26 0h1m3 0h1m-136 1h1m3 0h1m7 0h1m9 0h1m3 0h1m1 0h1m3 0h1m1 0h1m3 0h1m1 0h1m5 0h1m3 0h1m16 0h1m2 0h4m3 0h3m2 0h1m3 0h1m1 0h1m3 0h1m4 0h1m5 0h1m28 0h1m1 0h1m-135 1h1m4 0h3m4 0h1m9 0h1m3 0h1m1 0h1m3 0h1m1 0h1m3 0h1m2 0h3m2 0h5m3 0h1m11 0h1m3 0h1m3 0h1m5 0h1m1 0h1m3 0h1m1 0h1m3 0h1m3 0h1m5 0h1m30 0h1m-134 1h1m7 0h1m3 0h1m9 0h1m3 0h1m1 0h1m3 0h1m1 0h1m2 0h2m5 0h1m1 0h1m18 0h1m4 0h1m3 0h1m1 0h1m3 0h1m1 0h1m2 0h2m1 0h1m3 0h1m2 0h1m5 0h1m30 0h1m1 0h1m-136 1h3m2 0h4m5 0h1m8 0h1m3 0h1m2 0h3m3 0h2m1 0h1m1 0h4m3 0h4m13 0h5m2 0h3m3 0h3m3 0h2m1 0h1m2 0h4m1 0h5m1 0h5m26 0h1m3 0h1m-44 1h1m37 0h1m-43 1h4m-543 22h1m516 0h1m3 0h5m3 0h1m11 0h1m4 0h3m3 0h3m-561 1h2m3 0h1m516 0h2m7 0h1m2 0h1m1 0h1m14 0h1m3 0h1m1 0h1m3 0h1m-560 1h1m2 0h1m517 0h1m6 0h1m2 0h1m3 0h1m1 0h4m4 0h1m7 0h1m5 0h1m-560 1h1m2 0h1m517 0h1m5 0h1m3 0h1m3 0h1m1 0h1m3 0h1m3 0h1m6 0h1m4 0h2m-560 1h1m3 0h1m517 0h1m4 0h1m4 0h5m1 0h1m7 0h1m5 0h1m7 0h1m-561 1h1m3 0h1m517 0h1m3 0h1m5 0h1m3 0h1m1 0h1m7 0h1m4 0h1m4 0h1m3 0h1m-562 1h1m4 0h1m516 0h3m2 0h1m5 0h1m3 0h1m1 0h1m7 0h1m3 0h5m2 0h3m-561 1h8m-3 1h1m582 1h1m5 0h1m-140 1h5m3 0h1m3 0h1m11 0h1m109 0h1m3 0h1m-139 1h1m7 0h1m3 0h1m11 0h1m110 0h3m-138 1h1m5 0h5m1 0h4m8 0h4m3 0h3m2 0h1m3 0h1m2 0h4m2 0h3m4 0h1m77 0h1m3 0h1m-139 1h4m4 0h1m3 0h1m3 0h1m7 0h1m3 0h1m1 0h1m3 0h1m1 0h1m3 0h1m1 0h1m5 0h1m3 0h1m80 0h1m5 0h1m-136 1h1m3 0h1m3 0h1m3 0h1m7 0h1m3 0h1m1 0h1m3 0h1m1 0h1m3 0h1m2 0h3m2 0h5m3 0h1m76 0h1m5 0h1m-140 1h1m3 0h1m3 0h1m3 0h1m3 0h1m7 0h1m3 0h1m1 0h1m3 0h1m1 0h1m2 0h2m5 0h1m1 0h1m84 0h1m5 0h1m-252 1h1m112 0h3m5 0h1m2 0h1m3 0h1m7 0h1m3 0h1m2 0h3m3 0h2m1 0h1m1 0h4m3 0h4m81 0h1m3 0h1m-252 1h1m247 0h3m-261 1h2m7 0h1m-8 1h1m6 0h1m-7 1h1m5 0h1m-7 1h1m5 0h1m-8 1h1m6 0h1m-342 1h5m329 0h1m6 0h1m-339 1h2m328 0h1m7 0h1m-340 1h1m1 0h1m328 0h1m7 0h1m-341 1h1m2 0h1m327 0h1m8 0h1m-342 1h1m3 0h1m327 0h1m8 0h1m-343 1h1m331 0h1m9 0h1m-352 1h1m7 0h1m332 0h1m9 0h1m-351 1h1m5 0h1m333 0h15m-354 1h1m3 0h1m318 0h1m25 0h1m-349 1h1m1 0h1m318 0h3m24 0h1m-348 1h1m320 0h1m-323 1h1m1 0h1m-4 1h1m3 0h1m-6 1h1m5 0h1m-8 1h1m7 0h1m-10 1h1m-2 1h1m539 1h3m2 0h1m17 0h5m1 0h1m2 0h1m-34 1h1m3 0h1m1 0h1m17 0h1m5 0h1m2 0h1m-30 1h1m1 0h1m6 0h3m3 0h3m2 0h1m5 0h1m2 0h1m-31 1h1m2 0h1m5 0h1m3 0h1m1 0h1m3 0h1m1 0h4m2 0h5m-33 1h1m3 0h1m5 0h5m1 0h1m3 0h1m5 0h1m4 0h1m-33 1h1m4 0h1m5 0h1m5 0h1m3 0h1m1 0h1m3 0h1m4 0h1m-34 1h5m1 0h5m2 0h4m2 0h3m3 0h3m5 0h1m26 3h1m1 0h1m1 0h1m-136 1h3m4 0h1m3 0h1m11 0h1m108 0h1m1 0h1m1 0h1m1 0h1m-140 1h1m3 0h1m3 0h1m3 0h1m11 0h1m108 0h1m1 0h1m1 0h3m-140 1h1m3 0h1m1 0h5m1 0h4m8 0h4m3 0h3m2 0h1m3 0h1m2 0h4m2 0h3m4 0h1m76 0h1m1 0h1m1 0h1m1 0h1m-139 1h4m3 0h1m3 0h1m3 0h1m7 0h1m3 0h1m1 0h1m3 0h1m1 0h1m3 0h1m1 0h1m5 0h1m3 0h1m80 0h1m1 0h1m1 0h1m1 0h1m-136 1h1m3 0h1m3 0h1m3 0h1m7 0h1m3 0h1m1 0h1m3 0h1m1 0h1m3 0h1m2 0h3m2 0h5m3 0h1m76 0h1m1 0h1m1 0h1m1 0h1m-140 1h1m3 0h1m3 0h1m3 0h1m3 0h1m7 0h1m3 0h1m1 0h1m3 0h1m1 0h1m2 0h2m5 0h1m1 0h1m84 0h1m1 0h1m1 0h1m1 0h1m-139 1h3m5 0h1m2 0h1m3 0h1m7 0h1m3 0h1m2 0h3m3 0h2m1 0h1m1 0h4m3 0h4m80 0h1m1 0h1m2 0h1m-2 1h1m1 0h1m-68 23h5m2 0h3m14 0h5m1 0h5m-35 1h1m5 0h1m3 0h1m13 0h1m9 0h1m-35 1h1m5 0h1m6 0h3m3 0h3m2 0h1m8 0h1m-34 1h4m3 0h3m2 0h1m3 0h1m1 0h1m3 0h1m1 0h4m4 0h1m-29 1h1m5 0h1m1 0h1m3 0h1m1 0h1m3 0h1m5 0h1m2 0h1m-32 1h1m3 0h1m1 0h1m3 0h1m1 0h1m2 0h2m1 0h1m3 0h1m1 0h1m3 0h1m1 0h1m-30 1h3m3 0h3m3 0h2m1 0h1m2 0h4m2 0h3m2 0h1m-9 1h1m-5 1h4m-511 6h3m-2 1h2m-3 1h1m1 0h1m-7 1h2m1 0h1m-5 1h1m2 0h1m-5 1h1m4 0h1m552 0h3m-561 1h1m4 0h1m418 0h3m129 0h2m3 0h2m-562 1h1m2 0h1m418 0h1m3 0h1m128 0h1m5 0h1m-561 1h2m419 0h1m5 0h1m3 0h1m1 0h4m4 0h1m111 0h1m7 0h1m-140 1h3m2 0h1m3 0h1m1 0h1m3 0h1m115 0h1m3 0h1m3 0h1m-137 1h1m1 0h1m3 0h1m1 0h1m3 0h1m3 0h1m111 0h1m7 0h1m-141 1h1m3 0h1m1 0h1m2 0h2m1 0h1m3 0h1m116 0h1m5 0h1m-139 1h3m3 0h2m1 0h1m1 0h1m3 0h1m116 0h2m3 0h2m-5 1h3m-550 13h1m-2 1h2m-3 1h1m1 0h1m-1 1h1m-1 1h1m-1 1h1m-1 1h1m-1 1h1m258 0h2m-263 1h5m253 0h3m-7 1h4m-7 1h3m-6 1h3m-7 1h4m-7 1h3m-6 1h3m-6 1h3m-7 1h4m-7 1h3m-6 1h3m-6 1h3m327 0h3m-337 1h4m186 0h1m3 0h1m140 0h2m-340 1h3m190 0h2m1 0h2m139 0h1m1 0h1m-343 1h3m193 0h1m1 0h1m1 0h1m2 0h3m2 0h4m3 0h4m3 0h1m113 0h2m1 0h1m-344 1h4m196 0h1m1 0h1m1 0h1m1 0h1m3 0h1m1 0h1m3 0h1m1 0h1m120 0h1m2 0h1m-346 1h3m200 0h1m3 0h1m1 0h1m3 0h1m1 0h1m6 0h3m4 0h1m111 0h1m4 0h1m-350 1h3m203 0h1m3 0h1m1 0h1m2 0h2m1 0h1m9 0h1m115 0h1m4 0h1m-353 1h3m206 0h1m3 0h1m2 0h2m1 0h1m1 0h1m5 0h4m117 0h1m2 0h1m-356 1h4m349 0h2m-358 1h3m-6 1h3m361 0h1m-369 1h4m223 0h1m15 0h1m118 0h2m3 0h1m-371 1h3m227 0h1m136 0h1m2 0h1m-374 1h3m230 0h1m1 0h1m3 0h1m1 0h4m4 0h1m5 0h1m114 0h1m2 0h1m-377 1h3m233 0h1m1 0h1m3 0h1m1 0h1m3 0h1m3 0h1m119 0h1m3 0h1m-381 1h4m232 0h1m3 0h1m1 0h1m3 0h1m1 0h1m3 0h1m3 0h1m5 0h1m113 0h1m3 0h1m-384 1h3m130 0h5m101 0h1m3 0h1m1 0h1m2 0h2m1 0h1m3 0h1m3 0h1m118 0h1m4 0h1m-386 1h2m133 0h1m106 0h3m3 0h2m1 0h1m1 0h4m4 0h1m118 0h8m-392 1h3m136 0h1m117 0h1m131 0h1m-394 1h4m139 0h1m117 0h1m-265 1h3m143 0h4m-153 1h3m150 0h1m144 0h3m4 0h1m11 0h1m4 0h3m3 0h3m-335 1h4m153 0h1m143 0h1m3 0h1m2 0h1m1 0h1m14 0h1m3 0h1m1 0h1m3 0h1m-339 1h3m153 0h1m3 0h1m143 0h1m2 0h2m1 0h1m3 0h1m1 0h4m4 0h1m7 0h1m5 0h1m-342 1h3m157 0h3m144 0h1m1 0h1m1 0h1m1 0h1m3 0h1m1 0h1m3 0h1m3 0h1m6 0h1m4 0h2m-344 1h3m307 0h2m2 0h1m1 0h5m1 0h1m7 0h1m5 0h1m7 0h1m-349 1h4m310 0h1m3 0h1m1 0h1m3 0h1m1 0h1m7 0h1m4 0h1m4 0h1m3 0h1m-352 1h3m315 0h3m2 0h1m3 0h1m1 0h1m7 0h1m3 0h5m2 0h3m-394 1h1m39 0h3m-44 1h3m35 0h3m164 0h3m-207 1h1m32 0h4m165 0h2m3 0h2m-179 1h3m169 0h1m5 0h1m-182 1h3m171 0h1m7 0h1m-187 1h4m174 0h1m3 0h1m3 0h1m-190 1h3m178 0h1m7 0h1m-191 1h1m182 0h1m5 0h1m-7 1h2m3 0h2m-5 1h3m-222 1h6m25 0h1m-28 1h2m24 0h3m-30 1h1m1 0h1m25 0h1m-30 1h1m2 0h1m370 0h3m4 0h1m11 0h1m4 0h3m3 0h3m-408 1h1m3 0h1m369 0h1m3 0h1m2 0h1m1 0h1m14 0h1m3 0h1m1 0h1m3 0h1m-410 1h1m4 0h1m369 0h1m2 0h2m1 0h1m3 0h1m1 0h4m4 0h1m7 0h1m1 0h1m3 0h1m-418 1h5m2 0h1m375 0h1m1 0h1m1 0h1m1 0h1m3 0h1m1 0h1m3 0h1m3 0h1m5 0h2m3 0h4m-419 1h1m5 0h2m376 0h2m2 0h1m1 0h5m1 0h1m7 0h1m7 0h1m5 0h1m-420 1h1m7 0h1m376 0h1m3 0h1m1 0h1m3 0h1m1 0h1m7 0h1m3 0h1m3 0h1m1 0h1m3 0h1m-421 1h1m9 0h1m376 0h3m2 0h1m3 0h1m1 0h1m7 0h1m4 0h3m3 0h3m-420 1h1m9 0h1m-11 1h1m9 0h1m-11 1h1m9 0h1m-11 1h1m9 0h1m-10 1h1m7 0h1m-8 1h1m5 0h1m-6 1h5m31 3h5m-7 1h2m5 0h2m-10 1h1m9 0h1m-12 1h1m11 0h1m-14 1h1m13 0h1m-15 1h1m13 0h1m-16 1h1m15 0h1m-17 1h1m15 0h1m-17 1h1m7 0h1m7 0h1m-17 1h1m15 0h1m-17 1h1m15 0h1m-16 1h1m13 0h1m-15 1h1m13 0h1m-14 1h1m11 0h1m-12 1h1m9 0h1m-10 1h2m5 0h2m-7 1h5m114 51h3m7 0h3m-14 1h1m3 0h1m5 0h1m3 0h1m-16 1h1m5 0h1m3 0h1m5 0h1m-17 1h1m5 0h1m3 0h1m5 0h1m-17 1h1m5 0h1m3 0h1m5 0h1m-16 1h1m5 0h1m1 0h1m5 0h1m-14 1h1m4 0h1m1 0h1m4 0h1m-8 1h1m1 0h1m-3 1h1m1 0h1m-2 1h1m-1 1h1m-26 1h3m22 0h1m-25 1h2m22 0h1m-26 1h1m1 0h1m22 0h1m-30 1h2m1 0h1m25 0h1m-31 1h1m2 0h1m26 0h1m-32 1h1m4 0h1m25 0h1m-32 1h1m4 0h1m-5 1h1m2 0h1m-3 1h2"/>
<path stroke="#00f" d="M0 .5m98 77h1m2 0h1m2 0h1m-7 1h1m1 0h1m1 0h1m1 0h1m-7 1h1m2 0h1m2 0h1m-6 1h1m3 0h1m-4 1h3m-2 1h1m-3 1h5m-3 1h1m-1 1h1m-28 7h1m3 0h1m3 0h1m-8 1h1m1 0h1m1 0h1m1 0h1m1 0h1m-8 1h1m3 0h1m3 0h1m-9 1h1m3 0h1m3 0h1m245 0h3m-257 1h1m3 0h1m3 0h1m244 0h1m3 0h1m-258 1h1m3 0h1m3 0h1m244 0h1m3 0h1m-258 1h1m3 0h1m3 0h1m244 0h1m3 0h1m-258 1h1m3 0h1m3 0h1m245 0h3m-257 1h1m3 0h1m3 0h1m244 0h1m3 0h1m-258 1h1m3 0h1m3 0h1m244 0h1m3 0h1m-258 1h1m3 0h1m3 0h1m244 0h1m3 0h1m-258 1h1m3 0h1m3 0h1m4 0h1m240 0h3m-257 1h1m3 0h1m3 0h1m3 0h3m-15 1h1m3 0h1m3 0h1m4 0h1m-14 1h1m3 0h1m3 0h1m4 0h1m-5 1h1m2 0h1m-3 1h2m263 5h1m2 0h1m2 0h1m-7 1h1m1 0h1m1 0h1m1 0h1m-7 1h1m2 0h1m2 0h1m-6 1h1m3 0h1m-4 1h3m-2 1h1m-3 1h5m-3 1h1m-1 1h1m205 36h1m4 0h3m2 0h4m4 0h1m9 0h5m1 0h1m2 0h1m-39 1h2m3 0h1m3 0h1m1 0h1m3 0h1m13 0h1m5 0h1m2 0h1m-38 1h1m7 0h1m1 0h1m3 0h1m3 0h1m4 0h4m1 0h1m5 0h1m2 0h1m-38 1h1m6 0h1m2 0h4m4 0h1m3 0h1m5 0h4m2 0h5m-39 1h1m5 0h1m3 0h1m7 0h1m4 0h3m6 0h1m4 0h1m-38 1h1m4 0h1m4 0h1m7 0h1m7 0h1m1 0h1m3 0h1m4 0h1m-39 1h3m2 0h5m1 0h1m7 0h1m3 0h4m3 0h3m5 0h1m-162 2h5m-8 1h3m5 0h1m183 0h2m3 0h2m-200 1h1m9 0h3m47 0h1m2 0h1m4 0h1m3 0h1m11 0h1m107 0h1m2 0h1m1 0h1m2 0h1m-202 1h1m9 0h1m3 0h1m46 0h1m2 0h1m4 0h1m3 0h1m11 0h1m107 0h1m2 0h1m1 0h1m2 0h1m-203 1h1m9 0h1m5 0h1m45 0h1m2 0h1m2 0h5m1 0h4m8 0h4m3 0h3m2 0h1m3 0h1m2 0h4m2 0h3m4 0h1m76 0h1m1 0h1m1 0h1m1 0h1m-192 1h1m5 0h1m45 0h5m3 0h1m3 0h1m3 0h1m7 0h1m3 0h1m1 0h1m3 0h1m1 0h1m3 0h1m1 0h1m5 0h1m3 0h1m83 0h1m-197 1h3m5 0h1m5 0h1m48 0h1m4 0h1m3 0h1m3 0h1m7 0h1m3 0h1m1 0h1m3 0h1m1 0h1m3 0h1m2 0h3m2 0h5m3 0h1m79 0h1m-198 1h1m3 0h1m5 0h1m3 0h1m49 0h1m4 0h1m3 0h1m3 0h1m7 0h1m3 0h1m1 0h1m3 0h1m1 0h1m2 0h2m5 0h1m1 0h1m87 0h1m-199 1h1m5 0h1m5 0h3m50 0h1m5 0h1m2 0h1m3 0h1m7 0h1m3 0h1m2 0h3m3 0h2m1 0h1m1 0h4m3 0h4m83 0h1m-199 1h1m5 0h1m191 0h1m-199 1h1m5 0h1m9 0h1m-16 1h1m3 0h1m9 0h1m-14 1h3m9 0h1m-10 1h1m5 0h3m-8 1h5m-367 12h1m2 0h1m2 0h1m-8 1h2m1 0h3m1 0h2m-8 1h1m2 0h1m2 0h1m-6 1h1m1 0h1m1 0h1m-4 1h3m364 0h3m-369 1h1m364 0h1m3 0h2m-373 1h5m363 0h1m3 0h1m-371 1h1m366 0h1m3 0h1m-372 1h1m366 0h1m3 0h1m-5 1h1m3 0h1m-6 1h1m3 0h1m-6 1h1m3 0h2m-5 1h3m-376 3h1m6 0h3m547 0h3m-561 1h2m5 0h1m3 0h1m412 0h3m4 0h1m3 0h1m11 0h1m109 0h1m3 0h1m-563 1h1m1 0h1m9 0h1m411 0h1m3 0h1m3 0h1m3 0h1m11 0h1m108 0h1m5 0h1m-562 1h1m9 0h1m411 0h1m2 0h1m2 0h5m1 0h4m8 0h4m3 0h3m2 0h1m3 0h1m2 0h4m2 0h3m4 0h1m76 0h1m5 0h1m-562 1h1m8 0h1m413 0h3m4 0h1m3 0h1m3 0h1m7 0h1m3 0h1m1 0h1m3 0h1m1 0h1m3 0h1m1 0h1m5 0h1m3 0h1m80 0h1m5 0h1m-562 1h1m7 0h1m413 0h1m3 0h1m3 0h1m3 0h1m3 0h1m7 0h1m3 0h1m1 0h1m3 0h1m1 0h1m3 0h1m2 0h3m2 0h5m3 0h1m77 0h1m3 0h1m-561 1h1m6 0h1m414 0h1m3 0h1m3 0h1m3 0h1m3 0h1m7 0h1m3 0h1m1 0h1m3 0h1m1 0h1m2 0h2m5 0h1m1 0h1m83 0h1m1 0h1m3 0h1m-561 1h1m5 0h1m416 0h3m5 0h1m2 0h1m3 0h1m7 0h1m3 0h1m2 0h3m3 0h2m1 0h1m1 0h4m3 0h4m80 0h1m5 0h1m-564 1h5m3 0h5m551 0h1m-73 23h1m3 0h1m2 0h1m3 0h3m15 0h3m5 0h2m-40 1h2m3 0h1m2 0h1m2 0h1m3 0h1m13 0h1m3 0h1m3 0h1m-37 1h1m3 0h1m2 0h1m2 0h1m6 0h3m3 0h3m2 0h1m2 0h2m2 0h1m-36 1h1m3 0h5m2 0h3m2 0h1m3 0h1m1 0h1m3 0h1m1 0h1m1 0h1m1 0h1m1 0h4m-38 1h1m6 0h1m6 0h1m1 0h1m5 0h1m3 0h1m1 0h2m2 0h1m1 0h1m3 0h1m-39 1h1m6 0h1m2 0h1m3 0h1m1 0h1m3 0h1m1 0h1m3 0h1m1 0h1m3 0h1m1 0h1m3 0h1m-40 1h3m5 0h1m3 0h3m3 0h3m3 0h3m3 0h3m3 0h3m32 3h3m-145 1h1m4 0h3m4 0h1m3 0h1m11 0h1m114 0h2m-146 1h2m3 0h1m3 0h1m3 0h1m3 0h1m11 0h1m113 0h1m1 0h1m-145 1h1m7 0h1m1 0h5m1 0h4m8 0h4m3 0h3m2 0h1m3 0h1m2 0h4m2 0h3m4 0h1m76 0h1m3 0h1m-142 1h1m6 0h1m4 0h1m3 0h1m3 0h1m7 0h1m3 0h1m1 0h1m3 0h1m1 0h1m3 0h1m1 0h1m5 0h1m3 0h1m81 0h1m1 0h1m-141 1h1m5 0h1m5 0h1m3 0h1m3 0h1m7 0h1m3 0h1m1 0h1m3 0h1m1 0h1m3 0h1m2 0h3m2 0h5m3 0h1m78 0h1m-140 1h1m4 0h1m6 0h1m3 0h1m3 0h1m7 0h1m3 0h1m1 0h1m3 0h1m1 0h1m2 0h2m5 0h1m1 0h1m85 0h1m1 0h1m-142 1h3m2 0h5m4 0h1m2 0h1m3 0h1m7 0h1m3 0h1m2 0h3m3 0h2m1 0h1m1 0h4m3 0h4m80 0h1m3 0h1m-6 1h1m1 22h3m-143 1h1m3 0h1m134 0h1m3 0h2m-145 1h2m1 0h2m135 0h1m3 0h1m-145 1h1m1 0h1m1 0h1m2 0h3m3 0h3m2 0h4m4 0h1m114 0h1m3 0h1m-146 1h1m1 0h1m1 0h1m1 0h1m3 0h1m1 0h1m3 0h1m1 0h1m3 0h1m118 0h1m3 0h1m-146 1h1m3 0h1m1 0h1m3 0h1m1 0h1m3 0h1m1 0h1m3 0h1m3 0h1m114 0h1m3 0h1m-146 1h1m3 0h1m1 0h1m3 0h1m1 0h1m3 0h1m1 0h1m3 0h1m117 0h1m3 0h1m-145 1h1m3 0h1m2 0h3m3 0h3m2 0h1m3 0h1m116 0h1m3 0h2m-5 1h3m-105 3h1m6 0h2m1 0h4m4 0h1m10 0h3m3 0h3m-39 1h2m5 0h1m3 0h1m3 0h1m13 0h1m3 0h1m1 0h1m3 0h1m-39 1h1m4 0h1m4 0h1m3 0h1m3 0h1m4 0h4m5 0h1m1 0h1m2 0h1m-38 1h1m3 0h4m2 0h4m4 0h1m3 0h1m7 0h2m3 0h3m-38 1h1m3 0h1m3 0h1m1 0h1m7 0h1m4 0h3m6 0h1m1 0h1m3 0h1m-39 1h1m3 0h1m3 0h1m1 0h1m7 0h1m7 0h1m1 0h1m3 0h1m1 0h1m3 0h1m-40 1h3m3 0h3m2 0h1m7 0h1m3 0h4m3 0h3m3 0h3m-33 4h3m2 0h4m4 0h1m9 0h1m2 0h1m3 0h3m-34 1h1m3 0h1m1 0h1m3 0h1m13 0h1m2 0h1m2 0h1m3 0h1m-35 1h1m2 0h1m2 0h1m3 0h1m3 0h1m4 0h4m1 0h1m2 0h1m2 0h1m3 0h1m-34 1h3m2 0h4m4 0h1m3 0h1m5 0h5m2 0h4m-35 1h1m3 0h1m1 0h1m7 0h1m4 0h3m5 0h1m6 0h1m-35 1h1m3 0h1m1 0h1m7 0h1m7 0h1m4 0h1m2 0h1m3 0h1m-34 1h3m2 0h1m7 0h1m3 0h4m5 0h1m3 0h3m-417 8h1m-2 1h3m-2 1h1m378 4h1m3 0h5m2 0h3m14 0h5m3 0h1m-38 1h2m3 0h1m5 0h1m3 0h1m13 0h1m6 0h2m-441 1h1m4 0h3m4 0h1m391 0h1m3 0h1m5 0h1m6 0h3m2 0h4m2 0h1m7 0h1m-441 1h1m3 0h1m3 0h1m3 0h1m391 0h1m3 0h4m2 0h1m5 0h1m3 0h1m1 0h1m3 0h1m1 0h4m4 0h1m-441 1h1m3 0h1m3 0h1m3 0h1m391 0h1m7 0h1m1 0h1m5 0h1m3 0h1m1 0h1m3 0h1m5 0h1m3 0h1m-441 1h1m3 0h1m3 0h1m3 0h1m391 0h1m3 0h1m3 0h1m1 0h1m3 0h1m1 0h1m2 0h2m1 0h1m3 0h1m1 0h1m3 0h1m3 0h1m-441 1h1m4 0h3m4 0h1m390 0h3m3 0h3m3 0h3m3 0h2m1 0h1m1 0h1m3 0h1m2 0h3m3 0h3m-441 1h1m9 0h1m-11 1h1m9 0h1m-10 1h2m5 0h2m-7 1h5m-3 1h1m-1 1h1m-1 1h1m-5 1h9m-5 1h1m-1 1h1m-1 1h1m-1 1h1m56 9h1m-2 1h1m0 1h1m441 0h1m2 0h1m2 0h1m-146 1h1m3 0h1m15 0h1m117 0h2m1 0h3m1 0h2m-147 1h2m2 0h1m15 0h1m118 0h1m2 0h1m2 0h1m-146 1h1m1 0h1m1 0h1m2 0h3m2 0h4m2 0h5m3 0h1m113 0h1m1 0h1m1 0h1m-145 1h1m2 0h2m1 0h1m3 0h1m1 0h1m3 0h1m3 0h1m120 0h3m-144 1h1m3 0h1m1 0h5m1 0h1m3 0h1m3 0h1m5 0h1m115 0h1m-143 1h1m3 0h1m1 0h1m5 0h1m3 0h1m3 0h1m119 0h5m-145 1h1m3 0h1m2 0h4m1 0h4m5 0h1m120 0h1m-467 1h5m331 0h1m129 0h1m-468 1h1m5 0h2m329 0h1m-339 1h1m8 0h1m455 0h1m2 0h1m2 0h1m-471 1h1m8 0h1m315 0h4m4 0h1m11 0h1m118 0h1m1 0h1m1 0h1m1 0h1m-470 1h1m8 0h1m314 0h1m3 0h1m3 0h1m11 0h1m118 0h1m2 0h1m2 0h1m-469 1h1m7 0h1m314 0h1m3 0h1m3 0h1m3 0h1m3 0h1m1 0h5m3 0h1m113 0h1m3 0h1m-468 1h1m8 0h1m313 0h4m4 0h1m3 0h1m3 0h1m3 0h1m120 0h3m-466 1h1m7 0h1m313 0h1m7 0h1m3 0h1m3 0h1m3 0h1m5 0h1m115 0h1m-465 1h1m7 0h1m313 0h1m7 0h1m3 0h1m2 0h2m3 0h1m119 0h5m-467 1h1m7 0h1m313 0h1m7 0h1m4 0h2m1 0h1m4 0h1m120 0h1m-466 1h1m8 0h1m455 0h1m-466 1h1m7 0h1m-10 1h1m8 0h1m-11 1h1m8 0h1m-11 1h1m8 0h1m-9 1h1m5 0h2m-7 1h5m165 3h1m2 0h1m-86 1h1m5 0h1m5 0h1m69 0h1m2 0h1m-86 1h1m5 0h1m5 0h1m69 0h1m2 0h1m-87 1h3m2 0h5m2 0h3m68 0h1m2 0h1m-86 1h1m5 0h1m5 0h1m69 0h5m-87 1h1m5 0h1m5 0h1m72 0h1m-85 1h1m4 0h1m4 0h1m73 0h1m-85 1h1m4 0h1m4 0h1m73 0h1m-84 1h2m2 0h1m2 0h2m74 0h1m-82 1h5m-3 1h1m-1 1h1m58 0h3m-62 1h1m57 0h1m3 0h2m-68 1h9m54 0h1m3 0h1m-64 1h1m59 0h1m3 0h1m-65 1h1m59 0h1m3 0h1m-65 1h1m59 0h1m3 0h1m-65 1h1m58 0h1m3 0h1m-6 1h1m3 0h2m-5 1h3m-150 42h1m2 0h1m2 0h1m-8 1h2m1 0h3m1 0h2m-8 1h1m2 0h1m2 0h1m-6 1h1m1 0h1m1 0h1m16 0h1m15 0h1m-37 1h3m18 0h1m13 0h1m-35 1h1m20 0h1m11 0h1m-36 1h5m19 0h1m9 0h1m-33 1h1m21 0h1m9 0h1m-33 1h1m22 0h1m7 0h1m-9 1h1m7 0h1m-9 1h1m7 0h1m-13 1h17m-13 1h1m7 0h1m-9 1h1m7 0h1m-9 1h1m7 0h1m-10 1h1m9 0h1m-11 1h1m9 0h1m-12 1h1m11 0h1m-14 1h1m13 0h1m-16 1h1m15 0h1"/>
<path stroke="#0ff" d="M0 .5m339 295h1m-3 1h1m-3 1h1m-2 1h1m-2 1h1m-3 1h1m-3 1h1m-3 1h2m-4 2h1m-3 1h1m-3 1h2m-4 2h1m-172 1h1m167 0h2m-167 1h1m163 0h1m-3 1h1m-160 1h1m2 1h1m152 0h2m-152 1h1m148 0h1m-3 1h1m-145 1h1m2 1h1m137 0h2m-3 1h1m-135 1h1m131 0h1m-130 1h1m126 0h1m-125 1h1m122 0h1m-2 1h1m-120 1h1m116 0h1m-115 1h1m111 0h1m-110 1h1m107 0h1m-2 1h1m-105 1h1m101 0h1m-100 1h1m96 0h1m-95 1h1m91 0h2m-91 2h1m86 0h1m-85 1h1m81 0h1m-3 1h2m-79 1h1m74 1h1m-70 1h1m66 0h1m-3 1h2m-64 1h1m2 1h1m56 0h1m-55 1h1m50 0h2m-3 1h1m-48 1h1m44 0h1m-43 1h1m2 1h1m35 0h2m-3 1h1m-33 1h1m29 0h1m-28 1h1m23 1h2m-23 1h1m19 0h1m-18 1h1m14 0h1m-13 1h1m9 0h1m-2 1h1m-7 1h1m4 0h1m-3 1h1"/>
</svg>
</body></html>
